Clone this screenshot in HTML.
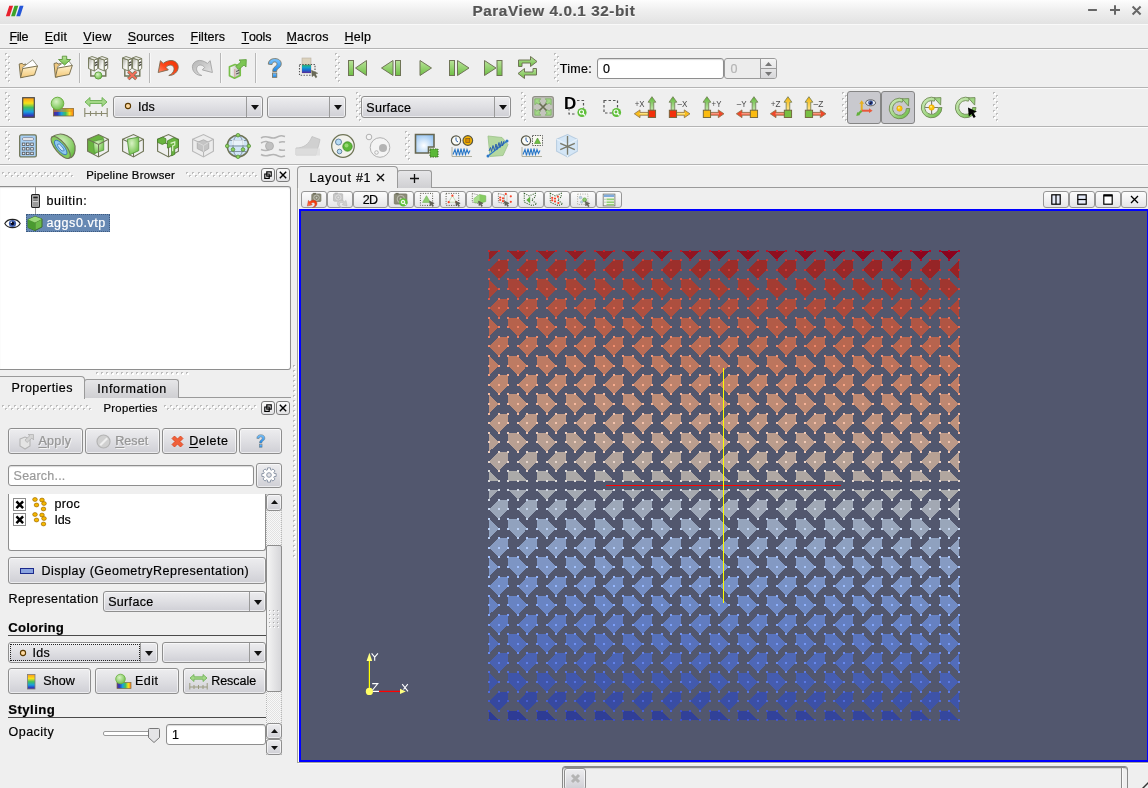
<!DOCTYPE html>
<html><head><meta charset="utf-8"><title>ParaView 4.0.1 32-bit</title>
<style>
html,body{margin:0;padding:0;overflow:hidden}
html{width:1148px;height:788px}
body{width:1148px;height:788px;overflow:hidden;background:#efefef;position:relative;font-family:"Liberation Sans",sans-serif;font-size:12.5px;color:#1a1a1a}
.t{position:absolute;white-space:nowrap;line-height:1.149;-webkit-text-stroke:.2px}
#root{position:absolute;left:0;top:0;width:1148px;height:788px;overflow:hidden;will-change:transform}
.b{position:absolute;overflow:visible}
u{text-decoration:underline;text-underline-offset:1.5px;text-decoration-thickness:1px}
</style></head><body>
<div id="root">
<svg class="b" width="0" height="0" style="left:0;top:0"><defs><pattern id="hp6" width="6" height="6" patternUnits="userSpaceOnUse"><rect width="2" height="2" fill="#bdbdbd"/><rect x="1" y="1" width="2" height="2" fill="#fff"/><rect x="3" y="3" width="2" height="2" fill="#bdbdbd"/><rect x="4" y="4" width="2" height="2" fill="#fff"/></pattern><pattern id="hp5" width="5" height="5" patternUnits="userSpaceOnUse"><rect width="2" height="2" fill="#bdbdbd"/><rect x="1" y="1" width="2" height="2" fill="#fff"/></pattern></defs></svg>
<div class="b" style="left:0px;top:0px;width:1148px;height:24px;background:linear-gradient(#fdfdfd,#f0f0f0 40%,#e2e2e2)"></div>
<svg class="b" style="left:5px;top:5px" width="19" height="12" viewBox="0 0 20 12"><path d="M4.5 0.5h4l-3.6 11h-4z" fill="#e8212d"/><path d="M10 0.5h4l-3.6 11h-4z" fill="#3ba32a"/><path d="M15.5 0.5h4l-3.6 11h-4z" fill="#2456d8"/></svg>
<div class="t" style="left:472.5px;top:2.0px;font-size:15.3px;letter-spacing:0.56px;color:#555;font-weight:bold;text-shadow:0 1px 0 #fff;">ParaView 4.0.1 32-bit</div>
<svg class="b" style="left:1084px;top:3px" width="60" height="14" viewBox="0 0 60 14"><path d="M4.100 7h8.800M26 7h10M31 2.200v9.600M48.600 3.500l8 8M56.600 3.500l-8 8" stroke="#666" stroke-width="2" fill="none"/></svg>
<div class="b" style="left:0px;top:24px;width:1148px;height:1px;background:#f9f9f9"></div>
<div class="b" style="left:0px;top:48px;width:1148px;height:1px;background:#b4b4b4"></div>
<div class="t" style="left:9.6px;top:30.0px;font-size:12.5px;letter-spacing:-0.45px;color:#000;"><u style="letter-spacing:0;margin-right:-0.45px">F</u>ile</div>
<div class="t" style="left:44.8px;top:30.0px;font-size:12.5px;letter-spacing:0.22px;color:#000;"><u style="letter-spacing:0;margin-right:0.22px">E</u>dit</div>
<div class="t" style="left:83.3px;top:30.0px;font-size:12.5px;letter-spacing:0.31px;color:#000;"><u style="letter-spacing:0;margin-right:0.31px">V</u>iew</div>
<div class="t" style="left:127.7px;top:30.0px;font-size:12.5px;letter-spacing:0.11px;color:#000;"><u style="letter-spacing:0;margin-right:0.11px">S</u>ources</div>
<div class="t" style="left:190.5px;top:30.0px;font-size:12.5px;letter-spacing:0.08px;color:#000;"><u style="letter-spacing:0;margin-right:0.08px">F</u>ilters</div>
<div class="t" style="left:241.5px;top:30.0px;font-size:12.5px;letter-spacing:-0.17px;color:#000;"><u style="letter-spacing:0;margin-right:-0.17px">T</u>ools</div>
<div class="t" style="left:286.5px;top:30.0px;font-size:12.5px;letter-spacing:0.20px;color:#000;"><u style="letter-spacing:0;margin-right:0.20px">M</u>acros</div>
<div class="t" style="left:344.5px;top:30.0px;font-size:12.5px;letter-spacing:0.26px;color:#000;"><u style="letter-spacing:0;margin-right:0.26px">H</u>elp</div>
<div class="b" style="left:0px;top:87px;width:1148px;height:1px;background:#b4b4b4"></div>
<div class="b" style="left:0px;top:49px;width:1148px;height:1px;background:#fbfbfb"></div>
<div class="b" style="left:0px;top:88px;width:1148px;height:1px;background:#fbfbfb"></div>
<div class="b" style="left:0px;top:126px;width:1148px;height:1px;background:#b4b4b4"></div>
<div class="b" style="left:0px;top:127px;width:1148px;height:1px;background:#fbfbfb"></div>
<div class="b" style="left:0px;top:164px;width:1148px;height:1px;background:#b4b4b4"></div>
<div class="b" style="left:0px;top:165px;width:1148px;height:1px;background:#fbfbfb"></div>
<svg class="b" style="left:5px;top:53px" width="5" height="30" shape-rendering="crispEdges"><rect width="5" height="30" fill="url(#hp6)"/></svg>
<svg class="b" style="left:335px;top:53px" width="5" height="30" shape-rendering="crispEdges"><rect width="5" height="30" fill="url(#hp6)"/></svg>
<svg class="b" style="left:554px;top:53px" width="5" height="30" shape-rendering="crispEdges"><rect width="5" height="30" fill="url(#hp6)"/></svg>
<svg class="b" style="left:5px;top:92px" width="5" height="30" shape-rendering="crispEdges"><rect width="5" height="30" fill="url(#hp6)"/></svg>
<svg class="b" style="left:356px;top:92px" width="5" height="30" shape-rendering="crispEdges"><rect width="5" height="30" fill="url(#hp6)"/></svg>
<svg class="b" style="left:521px;top:92px" width="5" height="30" shape-rendering="crispEdges"><rect width="5" height="30" fill="url(#hp6)"/></svg>
<svg class="b" style="left:842px;top:92px" width="5" height="30" shape-rendering="crispEdges"><rect width="5" height="30" fill="url(#hp6)"/></svg>
<svg class="b" style="left:993px;top:92px" width="5" height="30" shape-rendering="crispEdges"><rect width="5" height="30" fill="url(#hp6)"/></svg>
<svg class="b" style="left:5px;top:131px" width="5" height="30" shape-rendering="crispEdges"><rect width="5" height="30" fill="url(#hp6)"/></svg>
<svg class="b" style="left:405px;top:131px" width="5" height="30" shape-rendering="crispEdges"><rect width="5" height="30" fill="url(#hp6)"/></svg>
<div class="b" style="left:79px;top:53px;width:1px;height:30px;background:#b8b8b8"></div>
<div class="b" style="left:80px;top:53px;width:1px;height:30px;background:#f8f8f8"></div>
<div class="b" style="left:149px;top:53px;width:1px;height:30px;background:#b8b8b8"></div>
<div class="b" style="left:150px;top:53px;width:1px;height:30px;background:#f8f8f8"></div>
<div class="b" style="left:220px;top:53px;width:1px;height:30px;background:#b8b8b8"></div>
<div class="b" style="left:221px;top:53px;width:1px;height:30px;background:#f8f8f8"></div>
<div class="b" style="left:255px;top:53px;width:1px;height:30px;background:#b8b8b8"></div>
<div class="b" style="left:256px;top:53px;width:1px;height:30px;background:#f8f8f8"></div>
<div class="t" style="left:559.8px;top:62.0px;font-size:12.5px;letter-spacing:0.30px;color:#000;">Time:</div>
<div class="b" style="left:597px;top:58px;width:127px;height:21px;background:#fff;border:1px solid #8e8e8e;border-radius:3px;box-shadow:inset 0 1px 1px rgba(0,0,0,.15);box-sizing:border-box;"></div>
<div class="t" style="left:603.0px;top:62.0px;font-size:12.5px;letter-spacing:0.00px;color:#000;">0</div>
<div class="b" style="left:724px;top:58px;width:53px;height:21px;background:#ececec;border:1px solid #9a9a9a;border-radius:3px;box-sizing:border-box;"></div>
<div class="t" style="left:730.5px;top:62.0px;font-size:12.5px;letter-spacing:0.00px;color:#b4b4b4;">0</div>
<div class="b" style="left:760px;top:59px;width:16px;height:19px;background:linear-gradient(#f4f4f4,#d8d8da);border-left:1px solid #9a9a9a;border-radius:0 2px 2px 0;box-sizing:border-box;"></div>
<div class="b" style="left:761px;top:68px;width:15px;height:1px;background:#9a9a9a"></div>
<svg class="b" style="left:765px;top:61.5px" width="7" height="4" viewBox="0 0 7 4"><path d="M0 4h7l-3.5-4z" fill="#777"/></svg>
<svg class="b" style="left:765px;top:71.5px" width="7" height="4" viewBox="0 0 7 4"><path d="M0 0h7l-3.5 4z" fill="#777"/></svg>
<div class="b" style="left:113px;top:96px;width:150px;height:22px;background:linear-gradient(#ededef,#dfdfe3 50%,#cfcfd5);border:1px solid #8e8e8e;border-radius:3px;box-shadow:inset 0 0 0 1px rgba(255,255,255,.6);box-sizing:border-box;"></div>
<div class="b" style="left:246px;top:97px;width:1px;height:20px;background:#9a9a9a"></div>
<svg class="b" style="left:250.5px;top:105px" width="8" height="5" viewBox="0 0 8 5"><path d="M0 0h8l-4 5z" fill="#111"/></svg>
<div class="t" style="left:138.0px;top:100.1px;font-size:12.5px;letter-spacing:0.06px;color:#000;">Ids</div>
<svg class="b" style="left:124px;top:102px" width="8" height="8" viewBox="0 0 8 8"><circle cx="4" cy="4" r="2.6" fill="#ffd9a0" stroke="#5a3a00" stroke-width="1.1"/></svg>
<div class="b" style="left:267px;top:96px;width:79px;height:22px;background:linear-gradient(#ededef,#dfdfe3 50%,#cfcfd5);border:1px solid #8e8e8e;border-radius:3px;box-shadow:inset 0 0 0 1px rgba(255,255,255,.6);box-sizing:border-box;"></div>
<div class="b" style="left:329px;top:97px;width:1px;height:20px;background:#9a9a9a"></div>
<svg class="b" style="left:333.5px;top:105px" width="8" height="5" viewBox="0 0 8 5"><path d="M0 0h8l-4 5z" fill="#111"/></svg>
<div class="b" style="left:361px;top:96px;width:150px;height:22px;background:linear-gradient(#ededef,#dfdfe3 50%,#cfcfd5);border:1px solid #8e8e8e;border-radius:3px;box-shadow:inset 0 0 0 1px rgba(255,255,255,.6);box-sizing:border-box;"></div>
<div class="b" style="left:494px;top:97px;width:1px;height:20px;background:#9a9a9a"></div>
<svg class="b" style="left:498.5px;top:105px" width="8" height="5" viewBox="0 0 8 5"><path d="M0 0h8l-4 5z" fill="#111"/></svg>
<div class="t" style="left:366.3px;top:100.6px;font-size:12.5px;letter-spacing:0.27px;color:#000;">Surface</div>
<div class="b" style="left:847px;top:91px;width:34px;height:33px;background:#c9c9ce;border:1px solid #858585;border-radius:3px;box-sizing:border-box;"></div>
<div class="b" style="left:881px;top:91px;width:34px;height:33px;background:#c9c9ce;border:1px solid #858585;border-radius:3px;box-sizing:border-box;"></div>
<div class="t" style="left:86.2px;top:169.3px;font-size:11.3px;letter-spacing:0.26px;color:#000;">Pipeline Browser</div>
<svg class="b" style="left:2px;top:172px" width="72" height="5" shape-rendering="crispEdges"><rect width="72" height="5" fill="url(#hp6)"/></svg>
<svg class="b" style="left:186px;top:172px" width="72" height="5" shape-rendering="crispEdges"><rect width="72" height="5" fill="url(#hp6)"/></svg>
<div class="b" style="left:261px;top:168px;width:14px;height:14px;background:linear-gradient(#fbfbfb,#e2e2e4);border:1px solid #7c7c7c;border-radius:3px;box-sizing:border-box;"></div>
<div class="b" style="left:276px;top:168px;width:14px;height:14px;background:linear-gradient(#fbfbfb,#e2e2e4);border:1px solid #7c7c7c;border-radius:3px;box-sizing:border-box;"></div>
<svg class="b" style="left:264px;top:171px" width="8" height="8" viewBox="0 0 8 8"><path d="M2.8 .8h4.4v4.4h-4.4zM.8 3h4.4v4.4h-4.4z" fill="#fff" stroke="#000" stroke-width="1.2"/></svg>
<svg class="b" style="left:279px;top:171px" width="8" height="8" viewBox="0 0 8 8"><path d="M.8 .8l6.4 6.4M7.2 .8l-6.4 6.4" stroke="#000" stroke-width="1.4"/></svg>
<div class="b" style="left:0px;top:186px;width:291px;height:184px;background:#fff;border:1px solid #8e8e8e;border-left:none;border-radius:0 3px 3px 0;box-sizing:border-box;box-shadow:inset 0 1px 1px rgba(0,0,0,.12);"></div>
<div class="b" style="left:35px;top:187px;width:1px;height:7px;background:#9c9c9c"></div>
<div class="b" style="left:35px;top:207px;width:1px;height:7px;background:#9c9c9c"></div>
<div class="t" style="left:46.5px;top:194.0px;font-size:12.5px;letter-spacing:0.58px;color:#000;">builtin:</div>
<div class="b" style="left:26px;top:214px;width:84px;height:18px;background:#6688b3;border:1px dotted #3d5a80;box-sizing:border-box;"></div>
<div class="t" style="left:46.5px;top:215.9px;font-size:12.5px;letter-spacing:0.57px;color:#fff;">aggs0.vtp</div>
<svg class="b" style="left:96px;top:372px" width="93" height="3" shape-rendering="crispEdges"><rect width="93" height="3" fill="url(#hp5)"/></svg>
<svg class="b" style="left:293px;top:365px" width="3" height="193" shape-rendering="crispEdges"><rect width="3" height="193" fill="url(#hp5)"/></svg>
<div class="b" style="left:297px;top:170px;width:1px;height:593px;background:#a5a5a0"></div>
<div class="b" style="left:298px;top:188px;width:1px;height:575px;background:#fafafa"></div>
<div class="b" style="left:84px;top:397px;width:207px;height:1px;background:#9a9a9a"></div>
<div class="b" style="left:0px;top:376px;width:85px;height:23px;background:#efefef;border:1px solid #9a9a9a;border-left:none;border-bottom:none;border-radius:0 4px 0 0;box-sizing:border-box;"></div>
<div class="t" style="left:11.5px;top:381.1px;font-size:12.5px;letter-spacing:0.44px;color:#000;">Properties</div>
<div class="b" style="left:84px;top:379px;width:95px;height:19px;background:linear-gradient(#e6e6e8,#cfcfd2);border:1px solid #9a9a9a;border-bottom:none;border-radius:3px 3px 0 0;box-sizing:border-box;"></div>
<div class="t" style="left:97.2px;top:381.8px;font-size:12.5px;letter-spacing:0.65px;color:#000;">Information</div>
<div class="t" style="left:103.5px;top:401.8px;font-size:11.3px;letter-spacing:0.28px;color:#000;">Properties</div>
<svg class="b" style="left:2px;top:405px" width="90" height="5" shape-rendering="crispEdges"><rect width="90" height="5" fill="url(#hp6)"/></svg>
<svg class="b" style="left:164px;top:405px" width="93" height="5" shape-rendering="crispEdges"><rect width="93" height="5" fill="url(#hp6)"/></svg>
<div class="b" style="left:261px;top:401px;width:14px;height:14px;background:linear-gradient(#fbfbfb,#e2e2e4);border:1px solid #7c7c7c;border-radius:3px;box-sizing:border-box;"></div>
<div class="b" style="left:276px;top:401px;width:14px;height:14px;background:linear-gradient(#fbfbfb,#e2e2e4);border:1px solid #7c7c7c;border-radius:3px;box-sizing:border-box;"></div>
<svg class="b" style="left:264px;top:404px" width="8" height="8" viewBox="0 0 8 8"><path d="M2.8 .8h4.4v4.4h-4.4zM.8 3h4.4v4.4h-4.4z" fill="#fff" stroke="#000" stroke-width="1.2"/></svg>
<svg class="b" style="left:279px;top:404px" width="8" height="8" viewBox="0 0 8 8"><path d="M.8 .8l6.4 6.4M7.2 .8l-6.4 6.4" stroke="#000" stroke-width="1.4"/></svg>
<div class="b" style="left:8px;top:428px;width:75px;height:26px;background:linear-gradient(#ededef,#dfdfe3 50%,#cfcfd5);border:1px solid #8e8e8e;border-radius:3px;box-shadow:inset 0 0 0 1px rgba(255,255,255,.6);box-sizing:border-box;"></div>
<div class="b" style="left:85px;top:428px;width:75px;height:26px;background:linear-gradient(#ededef,#dfdfe3 50%,#cfcfd5);border:1px solid #8e8e8e;border-radius:3px;box-shadow:inset 0 0 0 1px rgba(255,255,255,.6);box-sizing:border-box;"></div>
<div class="b" style="left:162px;top:428px;width:75px;height:26px;background:linear-gradient(#ededef,#dfdfe3 50%,#cfcfd5);border:1px solid #8e8e8e;border-radius:3px;box-shadow:inset 0 0 0 1px rgba(255,255,255,.6);box-sizing:border-box;"></div>
<div class="b" style="left:239px;top:428px;width:43px;height:26px;background:linear-gradient(#ededef,#dfdfe3 50%,#cfcfd5);border:1px solid #8e8e8e;border-radius:3px;box-shadow:inset 0 0 0 1px rgba(255,255,255,.6);box-sizing:border-box;"></div>
<div class="t" style="left:38.4px;top:434.1px;font-size:12.5px;letter-spacing:0.33px;color:#969696;text-shadow:1px 1px 0 #f4f4f4;"><u style="letter-spacing:0;margin-right:0.33px">A</u>pply</div>
<div class="t" style="left:115.2px;top:434.1px;font-size:12.5px;letter-spacing:0.09px;color:#969696;text-shadow:1px 1px 0 #f4f4f4;"><u style="letter-spacing:0;margin-right:0.09px">R</u>eset</div>
<div class="t" style="left:189.2px;top:434.1px;font-size:12.5px;letter-spacing:0.51px;color:#000;"><u style="letter-spacing:0;margin-right:0.51px">D</u>elete</div>
<div class="b" style="left:8px;top:465px;width:246px;height:21px;background:#fff;border:1px solid #8e8e8e;border-radius:3px;box-shadow:inset 0 1px 1px rgba(0,0,0,.15);box-sizing:border-box;"></div>
<div class="t" style="left:13.6px;top:469.2px;font-size:12.5px;letter-spacing:0.21px;color:#9a9a9a;">Search...</div>
<div class="b" style="left:256px;top:463px;width:26px;height:25px;background:linear-gradient(#ededef,#dfdfe3 50%,#cfcfd5);border:1px solid #8e8e8e;border-radius:3px;box-shadow:inset 0 0 0 1px rgba(255,255,255,.6);box-sizing:border-box;"></div>
<div class="b" style="left:8px;top:494px;width:258px;height:57px;background:#fff;border:1px solid #8e8e8e;border-top:none;border-radius:0 0 3px 3px;box-sizing:border-box;"></div>
<div class="b" style="left:13px;top:498px;width:13px;height:13px;background:#fff;border:1px solid #8c8c8c;box-sizing:border-box;"></div>
<svg class="b" style="left:14.5px;top:499.5px" width="9.5" height="9.5" viewBox="0 0 10 10"><path d="M1.5 1.5l7 7M8.5 1.5l-7 7" stroke="#000" stroke-width="2.6"/></svg>
<svg class="b" style="left:32px;top:496.5px" width="16" height="15" viewBox="0 0 16 15"><ellipse cx="3" cy="2.5" rx="2.3" ry="1.9" fill="#f5b800" stroke="#a06a00" stroke-width=".7"/><ellipse cx="10" cy="3" rx="2.3" ry="1.9" fill="#f5b800" stroke="#a06a00" stroke-width=".7"/><ellipse cx="4.5" cy="8" rx="2.3" ry="1.9" fill="#f5b800" stroke="#a06a00" stroke-width=".7"/><ellipse cx="12" cy="6.5" rx="2.3" ry="1.9" fill="#f5b800" stroke="#a06a00" stroke-width=".7"/><ellipse cx="11.5" cy="12" rx="2.3" ry="1.9" fill="#f5b800" stroke="#a06a00" stroke-width=".7"/></svg>
<div class="b" style="left:13px;top:513px;width:13px;height:13px;background:#fff;border:1px solid #8c8c8c;box-sizing:border-box;"></div>
<svg class="b" style="left:14.5px;top:514.5px" width="9.5" height="9.5" viewBox="0 0 10 10"><path d="M1.5 1.5l7 7M8.5 1.5l-7 7" stroke="#000" stroke-width="2.6"/></svg>
<svg class="b" style="left:32px;top:511.5px" width="16" height="15" viewBox="0 0 16 15"><ellipse cx="3" cy="2.5" rx="2.3" ry="1.9" fill="#f5b800" stroke="#a06a00" stroke-width=".7"/><ellipse cx="10" cy="3" rx="2.3" ry="1.9" fill="#f5b800" stroke="#a06a00" stroke-width=".7"/><ellipse cx="4.5" cy="8" rx="2.3" ry="1.9" fill="#f5b800" stroke="#a06a00" stroke-width=".7"/><ellipse cx="12" cy="6.5" rx="2.3" ry="1.9" fill="#f5b800" stroke="#a06a00" stroke-width=".7"/><ellipse cx="11.5" cy="12" rx="2.3" ry="1.9" fill="#f5b800" stroke="#a06a00" stroke-width=".7"/></svg>
<div class="t" style="left:54.4px;top:497.4px;font-size:12.5px;letter-spacing:0.33px;color:#000;">proc</div>
<div class="t" style="left:54.4px;top:513.1px;font-size:12.5px;letter-spacing:-0.14px;color:#000;">Ids</div>
<div class="b" style="left:266px;top:494px;width:16px;height:261px;background:#e6e6e6;background-image:repeating-conic-gradient(#e2e2e2 0 25%,#f8f8f8 0 50%);background-size:2px 2px;border-left:1px dotted #b8b8b8;border-right:1px dotted #b8b8b8;box-sizing:border-box;"></div>
<div class="b" style="left:266px;top:494px;width:16px;height:17px;background:linear-gradient(#ededef,#dfdfe3 50%,#cfcfd5);border:1px solid #8e8e8e;border-radius:3px;box-shadow:inset 0 0 0 1px rgba(255,255,255,.6);box-sizing:border-box;"></div>
<svg class="b" style="left:270.5px;top:500px" width="7" height="4" viewBox="0 0 7 4"><path d="M0 4h7l-3.5-4z" fill="#111"/></svg>
<div class="b" style="left:266px;top:545px;width:16px;height:147px;background:linear-gradient(90deg,#f4f4f4,#d6d6d9);border:1px solid #8e8e8e;border-radius:2px;box-sizing:border-box;"></div>
<svg class="b" style="left:269px;top:610px" width="11" height="19" shape-rendering="crispEdges"><rect x="0" y="0" width="1" height="1" fill="#a8a8a8"/><rect x="1" y="1" width="1" height="1" fill="#fff"/><rect x="0" y="4" width="1" height="1" fill="#a8a8a8"/><rect x="1" y="5" width="1" height="1" fill="#fff"/><rect x="0" y="8" width="1" height="1" fill="#a8a8a8"/><rect x="1" y="9" width="1" height="1" fill="#fff"/><rect x="0" y="12" width="1" height="1" fill="#a8a8a8"/><rect x="1" y="13" width="1" height="1" fill="#fff"/><rect x="0" y="16" width="1" height="1" fill="#a8a8a8"/><rect x="1" y="17" width="1" height="1" fill="#fff"/><rect x="4" y="0" width="1" height="1" fill="#a8a8a8"/><rect x="5" y="1" width="1" height="1" fill="#fff"/><rect x="4" y="4" width="1" height="1" fill="#a8a8a8"/><rect x="5" y="5" width="1" height="1" fill="#fff"/><rect x="4" y="8" width="1" height="1" fill="#a8a8a8"/><rect x="5" y="9" width="1" height="1" fill="#fff"/><rect x="4" y="12" width="1" height="1" fill="#a8a8a8"/><rect x="5" y="13" width="1" height="1" fill="#fff"/><rect x="4" y="16" width="1" height="1" fill="#a8a8a8"/><rect x="5" y="17" width="1" height="1" fill="#fff"/><rect x="8" y="0" width="1" height="1" fill="#a8a8a8"/><rect x="9" y="1" width="1" height="1" fill="#fff"/><rect x="8" y="4" width="1" height="1" fill="#a8a8a8"/><rect x="9" y="5" width="1" height="1" fill="#fff"/><rect x="8" y="8" width="1" height="1" fill="#a8a8a8"/><rect x="9" y="9" width="1" height="1" fill="#fff"/><rect x="8" y="12" width="1" height="1" fill="#a8a8a8"/><rect x="9" y="13" width="1" height="1" fill="#fff"/><rect x="8" y="16" width="1" height="1" fill="#a8a8a8"/><rect x="9" y="17" width="1" height="1" fill="#fff"/></svg>
<div class="b" style="left:266px;top:723px;width:16px;height:16px;background:linear-gradient(#ededef,#dfdfe3 50%,#cfcfd5);border:1px solid #8e8e8e;border-radius:3px;box-shadow:inset 0 0 0 1px rgba(255,255,255,.6);box-sizing:border-box;"></div>
<svg class="b" style="left:270.5px;top:729px" width="7" height="4" viewBox="0 0 7 4"><path d="M0 4h7l-3.5-4z" fill="#111"/></svg>
<div class="b" style="left:266px;top:739px;width:16px;height:16px;background:linear-gradient(#ededef,#dfdfe3 50%,#cfcfd5);border:1px solid #8e8e8e;border-radius:3px;box-shadow:inset 0 0 0 1px rgba(255,255,255,.6);box-sizing:border-box;"></div>
<svg class="b" style="left:270.5px;top:745.5px" width="7" height="4" viewBox="0 0 7 4"><path d="M0 0h7l-3.5 4z" fill="#111"/></svg>
<div class="b" style="left:8px;top:557px;width:258px;height:27px;background:linear-gradient(#ededef,#dfdfe3 50%,#cfcfd5);border:1px solid #8e8e8e;border-radius:3px;box-shadow:inset 0 0 0 1px rgba(255,255,255,.6);box-sizing:border-box;"></div>
<div class="b" style="left:20px;top:568px;width:13.5px;height:5.5px;background:#8aa4e0;border:1px solid #1c2a8c;box-sizing:border-box;"></div>
<div class="t" style="left:41.4px;top:564.4px;font-size:12.5px;letter-spacing:0.48px;color:#000;">Display (GeometryRepresentation)</div>
<div class="t" style="left:8.5px;top:592.3px;font-size:12.5px;letter-spacing:0.38px;color:#000;">Representation</div>
<div class="b" style="left:103px;top:591px;width:163px;height:21px;background:linear-gradient(#ededef,#dfdfe3 50%,#cfcfd5);border:1px solid #8e8e8e;border-radius:3px;box-shadow:inset 0 0 0 1px rgba(255,255,255,.6);box-sizing:border-box;"></div>
<div class="b" style="left:249px;top:592px;width:1px;height:19px;background:#9a9a9a"></div>
<svg class="b" style="left:253.5px;top:599.5px" width="8" height="5" viewBox="0 0 8 5"><path d="M0 0h8l-4 5z" fill="#111"/></svg>
<div class="t" style="left:108.2px;top:595.3px;font-size:12.5px;letter-spacing:0.32px;color:#000;">Surface</div>
<div class="t" style="left:8.3px;top:620.0px;font-size:13.2px;letter-spacing:0.18px;color:#000;font-weight:bold;">Coloring</div>
<div class="b" style="left:8px;top:635px;width:258px;height:1px;background:#4a4a4a"></div>
<div class="b" style="left:8px;top:642px;width:150px;height:21px;background:linear-gradient(#ededef,#dfdfe3 50%,#cfcfd5);border:1px solid #8e8e8e;border-radius:3px;box-shadow:inset 0 0 0 1px rgba(255,255,255,.6);box-sizing:border-box;"></div>
<div class="b" style="left:140px;top:643px;width:1px;height:19px;background:#9a9a9a"></div>
<svg class="b" style="left:145px;top:650.5px" width="8" height="5" viewBox="0 0 8 5"><path d="M0 0h8l-4 5z" fill="#111"/></svg>
<div class="b" style="left:10px;top:644px;width:130px;height:17px;border:1px dotted #222;box-sizing:border-box;"></div>
<svg class="b" style="left:18.5px;top:649px" width="8" height="8" viewBox="0 0 8 8"><circle cx="4" cy="4" r="2.6" fill="#ffd9a0" stroke="#5a3a00" stroke-width="1.1"/></svg>
<div class="t" style="left:32.6px;top:646.0px;font-size:12.5px;letter-spacing:0.26px;color:#000;">Ids</div>
<div class="b" style="left:162px;top:642px;width:104px;height:21px;background:linear-gradient(#ededef,#dfdfe3 50%,#cfcfd5);border:1px solid #8e8e8e;border-radius:3px;box-shadow:inset 0 0 0 1px rgba(255,255,255,.6);box-sizing:border-box;"></div>
<div class="b" style="left:249px;top:643px;width:1px;height:19px;background:#9a9a9a"></div>
<svg class="b" style="left:253.5px;top:650.5px" width="8" height="5" viewBox="0 0 8 5"><path d="M0 0h8l-4 5z" fill="#111"/></svg>
<div class="b" style="left:8px;top:668px;width:83px;height:26px;background:linear-gradient(#ededef,#dfdfe3 50%,#cfcfd5);border:1px solid #8e8e8e;border-radius:3px;box-shadow:inset 0 0 0 1px rgba(255,255,255,.6);box-sizing:border-box;"></div>
<div class="b" style="left:95px;top:668px;width:84px;height:26px;background:linear-gradient(#ededef,#dfdfe3 50%,#cfcfd5);border:1px solid #8e8e8e;border-radius:3px;box-shadow:inset 0 0 0 1px rgba(255,255,255,.6);box-sizing:border-box;"></div>
<div class="b" style="left:183px;top:668px;width:83px;height:26px;background:linear-gradient(#ededef,#dfdfe3 50%,#cfcfd5);border:1px solid #8e8e8e;border-radius:3px;box-shadow:inset 0 0 0 1px rgba(255,255,255,.6);box-sizing:border-box;"></div>
<div class="t" style="left:43.2px;top:674.4px;font-size:12.5px;letter-spacing:0.14px;color:#000;">Show</div>
<div class="t" style="left:135.0px;top:674.4px;font-size:12.5px;letter-spacing:0.49px;color:#000;">Edit</div>
<div class="t" style="left:211.2px;top:674.4px;font-size:12.5px;letter-spacing:-0.03px;color:#000;">Rescale</div>
<div class="t" style="left:8.3px;top:701.8px;font-size:13.2px;letter-spacing:0.42px;color:#000;font-weight:bold;">Styling</div>
<div class="b" style="left:8px;top:717px;width:258px;height:1px;background:#4a4a4a"></div>
<div class="t" style="left:8.5px;top:724.6px;font-size:12.5px;letter-spacing:0.49px;color:#000;">Opacity</div>
<div class="b" style="left:103px;top:731px;width:49px;height:5px;background:#fff;border:1px solid #9a9a9a;border-radius:2px;box-sizing:border-box;"></div>
<svg class="b" style="left:148px;top:727.5px" width="12" height="15" viewBox="0 0 12 15"><path d="M1.5 .5h9a1 1 0 0 1 1 1v8l-5.5 5-5.5-5v-8a1 1 0 0 1 1-1z" fill="#e4e4e6" stroke="#777"/></svg>
<div class="b" style="left:166px;top:724px;width:100px;height:21px;background:#fff;border:1px solid #8e8e8e;border-radius:3px;box-shadow:inset 0 1px 1px rgba(0,0,0,.15);box-sizing:border-box;"></div>
<div class="t" style="left:172.0px;top:728.2px;font-size:12.5px;letter-spacing:0.00px;color:#000;">1</div>
<div class="b" style="left:398px;top:187px;width:750px;height:1px;background:#9a9a9a"></div>
<div class="b" style="left:297px;top:166px;width:101px;height:22px;background:#efefef;border:1px solid #9a9a9a;border-bottom:none;border-radius:4px 4px 0 0;box-sizing:border-box;"></div>
<div class="t" style="left:309.5px;top:171.1px;font-size:12.5px;letter-spacing:0.77px;color:#000;">Layout #1</div>
<svg class="b" style="left:375.5px;top:173px" width="9" height="9" viewBox="0 0 9 9"><path d="M1 1l7 7M8 1l-7 7" stroke="#111" stroke-width="1.4"/></svg>
<div class="b" style="left:397px;top:170px;width:35px;height:18px;background:linear-gradient(#e6e6e8,#cfcfd2);border:1px solid #9a9a9a;border-bottom:none;border-radius:3px 3px 0 0;box-sizing:border-box;"></div>
<svg class="b" style="left:410px;top:174px" width="9" height="9" viewBox="0 0 9 9"><path d="M4.5 0v9M0 4.5h9" stroke="#111" stroke-width="1.3"/></svg>
<div class="b" style="left:301px;top:191px;width:26px;height:17px;background:linear-gradient(#fcfcfc,#f1f1f2 50%,#e4e4e6);border:1px solid #969696;border-radius:3px;box-sizing:border-box;"></div>
<div class="b" style="left:327px;top:191px;width:26px;height:17px;background:linear-gradient(#fcfcfc,#f1f1f2 50%,#e4e4e6);border:1px solid #969696;border-radius:3px;box-sizing:border-box;"></div>
<div class="b" style="left:353px;top:191px;width:35px;height:17px;background:linear-gradient(#fcfcfc,#f1f1f2 50%,#e4e4e6);border:1px solid #969696;border-radius:3px;box-sizing:border-box;"></div>
<div class="b" style="left:388px;top:191px;width:26px;height:17px;background:linear-gradient(#fcfcfc,#f1f1f2 50%,#e4e4e6);border:1px solid #969696;border-radius:3px;box-sizing:border-box;"></div>
<div class="b" style="left:414px;top:191px;width:26px;height:17px;background:linear-gradient(#fcfcfc,#f1f1f2 50%,#e4e4e6);border:1px solid #969696;border-radius:3px;box-sizing:border-box;"></div>
<div class="b" style="left:440px;top:191px;width:26px;height:17px;background:linear-gradient(#fcfcfc,#f1f1f2 50%,#e4e4e6);border:1px solid #969696;border-radius:3px;box-sizing:border-box;"></div>
<div class="b" style="left:466px;top:191px;width:26px;height:17px;background:linear-gradient(#fcfcfc,#f1f1f2 50%,#e4e4e6);border:1px solid #969696;border-radius:3px;box-sizing:border-box;"></div>
<div class="b" style="left:492px;top:191px;width:26px;height:17px;background:linear-gradient(#fcfcfc,#f1f1f2 50%,#e4e4e6);border:1px solid #969696;border-radius:3px;box-sizing:border-box;"></div>
<div class="b" style="left:518px;top:191px;width:26px;height:17px;background:linear-gradient(#fcfcfc,#f1f1f2 50%,#e4e4e6);border:1px solid #969696;border-radius:3px;box-sizing:border-box;"></div>
<div class="b" style="left:544px;top:191px;width:26px;height:17px;background:linear-gradient(#fcfcfc,#f1f1f2 50%,#e4e4e6);border:1px solid #969696;border-radius:3px;box-sizing:border-box;"></div>
<div class="b" style="left:570px;top:191px;width:26px;height:17px;background:linear-gradient(#fcfcfc,#f1f1f2 50%,#e4e4e6);border:1px solid #969696;border-radius:3px;box-sizing:border-box;"></div>
<div class="b" style="left:596px;top:191px;width:26px;height:17px;background:linear-gradient(#fcfcfc,#f1f1f2 50%,#e4e4e6);border:1px solid #969696;border-radius:3px;box-sizing:border-box;"></div>
<div class="t" style="left:362.7px;top:192.7px;font-size:12.5px;letter-spacing:-0.68px;color:#000;">2D</div>
<div class="b" style="left:1043px;top:191px;width:26px;height:17px;background:linear-gradient(#fcfcfc,#f1f1f2 50%,#e4e4e6);border:1px solid #969696;border-radius:3px;box-sizing:border-box;"></div>
<div class="b" style="left:1069px;top:191px;width:26px;height:17px;background:linear-gradient(#fcfcfc,#f1f1f2 50%,#e4e4e6);border:1px solid #969696;border-radius:3px;box-sizing:border-box;"></div>
<div class="b" style="left:1095px;top:191px;width:26px;height:17px;background:linear-gradient(#fcfcfc,#f1f1f2 50%,#e4e4e6);border:1px solid #969696;border-radius:3px;box-sizing:border-box;"></div>
<div class="b" style="left:1121px;top:191px;width:26px;height:17px;background:linear-gradient(#fcfcfc,#f1f1f2 50%,#e4e4e6);border:1px solid #969696;border-radius:3px;box-sizing:border-box;"></div>
<div class="b" style="left:298px;top:762px;width:850px;height:1px;background:#a5a5a0"></div>
<div class="b" style="left:298px;top:763px;width:850px;height:1px;background:#fafafa"></div>
<div class="b" style="left:562px;top:766px;width:566px;height:26px;border:1px solid #8a8a8a;border-radius:3px;box-sizing:border-box;box-shadow:inset 0 1px 0 #8a8a8a,inset 0 2px 0 #d8d8d8;"></div>
<div class="b" style="left:564px;top:768px;width:22px;height:22px;background:linear-gradient(#ededef,#dfdfe3 50%,#cfcfd5);border:1px solid #8e8e8e;border-radius:3px;box-shadow:inset 0 0 0 1px rgba(255,255,255,.6);box-sizing:border-box;"></div>
<svg class="b" style="left:569.5px;top:772.5px" width="11" height="11" viewBox="0 0 11 11"><path d="M2 2l7 7M9 2l-7 7" stroke="#b4b4b4" stroke-width="3"/></svg>
<div class="b" style="left:1121px;top:768px;width:1px;height:20px;background:#8a8a8a"></div>
<div class="b" style="left:1122px;top:768px;width:1px;height:20px;background:#fafafa"></div>
<svg class="b" style="left:1136px;top:774px" width="12" height="14" viewBox="0 0 12 14"><path d="M6.500 14.500l6-6" stroke="#333" stroke-width="1.400"/></svg>
<svg class="b" style="left:17px;top:57px" width="22" height="22" viewBox="0 0 22 22"><defs><linearGradient id="gg" x1="0" y1="0" x2="0" y2="1"><stop offset="0" stop-color="#b9e39a"/><stop offset="1" stop-color="#6fbf45"/></linearGradient><linearGradient id="gf" x1="0" y1="0" x2="0" y2="1"><stop offset="0" stop-color="#fff3cf"/><stop offset="1" stop-color="#f3c878"/></linearGradient><linearGradient id="gs" x1="0" y1="0" x2="1" y2="0"><stop offset="0" stop-color="#fafafa"/><stop offset="1" stop-color="#b8b8b0"/></linearGradient><linearGradient id="gr" x1="0" y1="0" x2="0" y2="1"><stop offset="0" stop-color="#ff9a1a"/><stop offset=".28" stop-color="#f6e21a"/><stop offset=".5" stop-color="#3fc060"/><stop offset=".72" stop-color="#1aa0e0"/><stop offset=".9" stop-color="#2a3fc0"/><stop offset="1" stop-color="#5a2a90"/></linearGradient><linearGradient id="grh" x1="0" y1="0" x2="1" y2="0"><stop offset="0" stop-color="#5a2a90"/><stop offset=".2" stop-color="#2a3fc0"/><stop offset=".4" stop-color="#1aa0e0"/><stop offset=".6" stop-color="#3fc060"/><stop offset=".8" stop-color="#f6e21a"/><stop offset="1" stop-color="#ff7a1a"/></linearGradient><radialGradient id="gball" cx=".4" cy=".35" r=".7"><stop offset="0" stop-color="#d8f2c4"/><stop offset="1" stop-color="#6cbf45"/></radialGradient><linearGradient id="gb" x1="0" y1="0" x2="0" y2="1"><stop offset="0" stop-color="#7cc4ff"/><stop offset="1" stop-color="#1c86e8"/></linearGradient><linearGradient id="gred" x1="0" y1="0" x2="0" y2="1"><stop offset="0" stop-color="#ff8a5a"/><stop offset="1" stop-color="#e02a10"/></linearGradient><linearGradient id="ggray" x1="0" y1="0" x2="0" y2="1"><stop offset="0" stop-color="#dcdcdc"/><stop offset="1" stop-color="#a8a8a8"/></linearGradient><linearGradient id="gring" x1="0" y1="0" x2="1" y2="1"><stop offset="0" stop-color="#d4edc0"/><stop offset=".5" stop-color="#a6d98a"/><stop offset="1" stop-color="#62b838"/></linearGradient><linearGradient id="ag" x1="0" y1="0" x2="0" y2="1"><stop offset="0" stop-color="#5cb634"/><stop offset="1" stop-color="#c4e8ae"/></linearGradient><linearGradient id="ay" x1="0" y1="0" x2="0" y2="1"><stop offset="0" stop-color="#f2b200"/><stop offset="1" stop-color="#ffe890"/></linearGradient><linearGradient id="gtw" x1="0" y1="0" x2="1" y2="1"><stop offset="0" stop-color="#a2a296"/><stop offset=".55" stop-color="#f2f2ee"/><stop offset="1" stop-color="#ffffff"/></linearGradient><linearGradient id="gundo" x1="0" y1="1" x2="1" y2="0"><stop offset="0" stop-color="#ffa58a"/><stop offset=".45" stop-color="#ff4a1c"/><stop offset="1" stop-color="#f03000"/></linearGradient><linearGradient id="gredo" x1="0" y1="1" x2="1" y2="0"><stop offset="0" stop-color="#e8e8e8"/><stop offset="1" stop-color="#b4b4b4"/></linearGradient></defs><polygon points="2.2,7 5.2,6.3 6.2,7.6 9,7 6,20.3 3.6,20.7" fill="#f0c880" stroke="#7d7250" stroke-width="1" stroke-linejoin="round"/><polygon points="5.3,10.7 15.7,2.8 20.5,9 8,14.5" fill="#fff" stroke="#8a8a78" stroke-width=".9" stroke-linejoin="round"/><polygon points="5.7,11.6 20.5,9 17.5,18 3.6,20.7" fill="url(#gf)" stroke="#7d7250" stroke-width="1" stroke-linejoin="round"/></svg>
<svg class="b" style="left:51px;top:55px" width="24" height="24" viewBox="0 0 24 24"><polygon points="3,8.5 6,7.8 7,9.1 9.8,8.5 6.8,21.8 4.4,22.2" fill="#f0c880" stroke="#7d7250" stroke-width="1" stroke-linejoin="round"/><polygon points="6.1,12.2 16.5,4.3 21.3,10.5 8.8,16" fill="#fff" stroke="#8a8a78" stroke-width=".9" stroke-linejoin="round"/><polygon points="6.5,13.1 21.3,10.5 18.3,19.5 4.4,22.2" fill="url(#gf)" stroke="#7d7250" stroke-width="1" stroke-linejoin="round"/><path d="M11.300 1.200h4.400v3.300h4l-6.100 5.600-6.100-5.600h3.800z" fill="url(#gg)" stroke="#4d8a2a" stroke-width=".8" stroke-linejoin="round"/></svg>
<svg class="b" style="left:88px;top:56px" width="21" height="25" viewBox="0 0 21 25"><path d="M2.800 13.500V20H17.800V13.500" fill="none" stroke="#6f7456" stroke-width="1.400"/><polygon points="0.5,2 6.3,4 6.3,15 0.5,12.500" fill="url(#gtw)" stroke="#6f7456" stroke-width=".9" stroke-linejoin="round"/><polygon points="6.3,4 9.7,2.500 9.7,12.500 6.3,15" fill="#fbfbf8" stroke="#6f7456" stroke-width=".9" stroke-linejoin="round"/><polygon points="0.5,2 4,.5 9.7,2.500 6.3,4" fill="#e9e9e2" stroke="#6f7456" stroke-width=".9" stroke-linejoin="round"/><path d="M6.8 7.200l2.600-1.300M6.8 9.700l2.600-1.300" stroke="#4a4a42" stroke-width="1.300"/><polygon points="10.5,2 16.3,4 16.3,15 10.5,12.500" fill="url(#gtw)" stroke="#6f7456" stroke-width=".9" stroke-linejoin="round"/><polygon points="16.3,4 19.7,2.500 19.7,12.500 16.3,15" fill="#fbfbf8" stroke="#6f7456" stroke-width=".9" stroke-linejoin="round"/><polygon points="10.5,2 14,.5 19.7,2.500 16.3,4" fill="#e9e9e2" stroke="#6f7456" stroke-width=".9" stroke-linejoin="round"/><path d="M16.8 7.200l2.600-1.300M16.8 9.700l2.600-1.300" stroke="#4a4a42" stroke-width="1.300"/><circle cx="10.300" cy="19.500" r="3.600" fill="url(#gball)" stroke="#5a9a3a" stroke-width=".9"/></svg>
<svg class="b" style="left:122px;top:56px" width="21" height="25" viewBox="0 0 21 25"><path d="M2.800 13.500V20H17.800V13.500" fill="none" stroke="#6f7456" stroke-width="1.400"/><polygon points="0.5,2 6.3,4 6.3,15 0.5,12.500" fill="url(#gtw)" stroke="#6f7456" stroke-width=".9" stroke-linejoin="round"/><polygon points="6.3,4 9.7,2.500 9.7,12.500 6.3,15" fill="#fbfbf8" stroke="#6f7456" stroke-width=".9" stroke-linejoin="round"/><polygon points="0.5,2 4,.5 9.7,2.500 6.3,4" fill="#e9e9e2" stroke="#6f7456" stroke-width=".9" stroke-linejoin="round"/><path d="M6.8 7.200l2.600-1.300M6.8 9.700l2.600-1.300" stroke="#4a4a42" stroke-width="1.300"/><polygon points="10.5,2 16.3,4 16.3,15 10.5,12.500" fill="url(#gtw)" stroke="#6f7456" stroke-width=".9" stroke-linejoin="round"/><polygon points="16.3,4 19.7,2.500 19.7,12.500 16.3,15" fill="#fbfbf8" stroke="#6f7456" stroke-width=".9" stroke-linejoin="round"/><polygon points="10.5,2 14,.5 19.7,2.500 16.3,4" fill="#e9e9e2" stroke="#6f7456" stroke-width=".9" stroke-linejoin="round"/><path d="M16.8 7.200l2.600-1.300M16.8 9.700l2.600-1.300" stroke="#4a4a42" stroke-width="1.300"/><path d="M6.300 15.500l8 7.500M14.300 15.500l-8 7.500" stroke="#6f7456" stroke-width="3.400"/><path d="M6.300 15.500l8 7.500M14.300 15.500l-8 7.500" stroke="#f5705a" stroke-width="2"/></svg>
<svg class="b" style="left:156px;top:57px" width="24" height="22" viewBox="0 0 24 22"><path d="M4.400 3.700L2.200 15.500L12.300 12.900L10 10.400C12 7.500 16.500 7 17.800 10.500C18.800 13.500 16.500 17 12.800 18.500C18 18.700 22.500 14.500 22.200 9.600C21.800 4 14.500 .8 7.200 6.400Z" fill="url(#gundo)" stroke="#7a6a50" stroke-width=".9" stroke-linejoin="round"/></svg>
<svg class="b" style="left:190px;top:57px" width="24" height="22" viewBox="0 0 24 22"><g transform="translate(24.600 0) scale(-1 1)"><path d="M4.400 3.700L2.200 15.500L12.300 12.900L10 10.400C12 7.500 16.500 7 17.800 10.500C18.800 13.500 16.500 17 12.800 18.500C18 18.700 22.500 14.500 22.200 9.600C21.800 4 14.500 .8 7.200 6.400Z" fill="url(#gredo)" stroke="#a4a4a4" stroke-width=".9" stroke-linejoin="round"/></g></svg>
<svg class="b" style="left:227px;top:57px" width="22" height="24" viewBox="0 0 22 24"><polygon points="2.500,9.800 8,7.500 13.200,9.300 13.200,18.500 7.500,21.200 2.500,18.700" fill="url(#gs)" stroke="#78bf4a" stroke-width="1.700" stroke-linejoin="round"/><path d="M7.800 12v8.500" stroke="#d08080" stroke-width=".7"/><path d="M9 14.500l3.500-1.300M9 17l3.500-1.300" stroke="#555" stroke-width="1"/><polygon points="8.800,9.300 14,4.800 12,3 19.300,2.600 19,10 17,8.100 11.600,12.600" fill="#7cc653" stroke="#5a9a3a" stroke-width=".8" stroke-linejoin="round"/></svg>
<svg class="b" style="left:265px;top:57px" width="19" height="22" viewBox="0 0 19 22"><g transform="translate(1.200 .3) scale(.86)"><path d="M2.500 8c0-4 3-6.500 7.500-6.500s7.500 2.500 7.500 6c0 3-2 4.500-3.500 5.500s-1.800 1.800-1.800 3.500h-4.600c0-3 1-4.300 2.600-5.500s2.300-2 2.300-3.300c0-1.400-1.100-2.300-2.700-2.300s-2.800 1-3 3z" fill="url(#gb)" stroke="#7a7460" stroke-width="1"/><rect x="7.300" y="18.300" width="5" height="5" fill="url(#gb)" stroke="#7a7460" stroke-width="1"/></g></svg>
<svg class="b" style="left:297px;top:57px" width="24" height="24" viewBox="0 0 24 24"><defs><linearGradient id="gsel" x1="0" y1="0" x2="0" y2="1"><stop offset="0" stop-color="#38a860"/><stop offset=".3" stop-color="#10a8c8"/><stop offset=".65" stop-color="#1a68d0"/><stop offset="1" stop-color="#5a2a98"/></linearGradient></defs><rect x="5" y="1" width="9" height="15" fill="#dcd2bc" stroke="#b8b0a0" stroke-width=".6"/><rect x="5" y="7.800" width="9" height="8.200" fill="url(#gsel)"/><rect x="2.500" y="7.500" width="15.500" height="10.800" fill="none" stroke="#555" stroke-dasharray="1.400 1.400" stroke-width="1.100"/><path d="M14.500 13.300l6.300 3-2.500.8 1.700 2.900-1.300.8-1.700-2.900-1.800 1.800z" fill="#6a6a58" stroke="#55553f" stroke-width=".4"/></svg>
<svg class="b" style="left:346px;top:58px" width="22" height="20" viewBox="0 0 22 20"><rect x="2.500" y="2.500" width="5" height="15" fill="url(#gg)" stroke="#6f7456" stroke-width="1"/><path d="M20.500 2.500v15l-11-7.500z" fill="url(#gg)" stroke="#6f7456" stroke-width="1"/></svg>
<svg class="b" style="left:380px;top:58px" width="22" height="20" viewBox="0 0 22 20"><path d="M13 2.500v15l-11.500-7.500z" fill="url(#gg)" stroke="#6f7456" stroke-width="1"/><rect x="15.500" y="2.500" width="5" height="15" fill="url(#gg)" stroke="#6f7456" stroke-width="1"/></svg>
<svg class="b" style="left:414px;top:58px" width="22" height="20" viewBox="0 0 22 20"><path d="M6 2.500v15l11.500-7.500z" fill="url(#gg)" stroke="#6f7456" stroke-width="1"/></svg>
<svg class="b" style="left:448px;top:58px" width="22" height="20" viewBox="0 0 22 20"><rect x="1.500" y="2.500" width="5" height="15" fill="url(#gg)" stroke="#6f7456" stroke-width="1"/><path d="M9.500 2.500v15l11.500-7.500z" fill="url(#gg)" stroke="#6f7456" stroke-width="1"/></svg>
<svg class="b" style="left:482px;top:58px" width="22" height="20" viewBox="0 0 22 20"><path d="M2.500 2.500v15l11.500-7.500z" fill="url(#gg)" stroke="#6f7456" stroke-width="1"/><rect x="15" y="2.500" width="5" height="15" fill="url(#gg)" stroke="#6f7456" stroke-width="1"/></svg>
<svg class="b" style="left:517px;top:56px" width="21" height="23" viewBox="0 0 21 23"><path d="M1.500 10.500v-6.500h12v-3.500l6.500 5-6.500 5v-3.500h-8.500v3.500z" fill="url(#gg)" stroke="#6f7456" stroke-width="1"/><path d="M19.500 12.500v6.500h-12v3.500l-6.500-5 6.500-5v3.500h8.500v-3.500z" fill="url(#gg)" stroke="#6f7456" stroke-width="1"/></svg>
<svg class="b" style="left:22px;top:96.5px" width="13" height="21" viewBox="0 0 13 21"><rect x=".7" y=".7" width="11.600" height="19.600" fill="url(#gr)" stroke="#4a4a4a" stroke-width="1.2"/></svg>
<svg class="b" style="left:50px;top:96px" width="25" height="22" viewBox="0 0 25 22"><rect x="3.500" y="12.500" width="20" height="7.500" fill="url(#grh)" stroke="#7a6a40" stroke-width=".8"/><rect x="3.500" y="12.500" width="20" height="3.500" fill="#e8901a" opacity=".55"/><circle cx="7.500" cy="7.500" r="6.300" fill="url(#gball)" stroke="#6aae40" stroke-width="1"/></svg>
<svg class="b" style="left:84px;top:97px" width="24" height="21" viewBox="0 0 24 21"><path d="M1 5l5-4.500v3h12v-3l5 4.500-5 4.500v-3h-12v3z" fill="#a3d787" stroke="#6aae50" stroke-width=".9"/><path d="M.8 11v9M23.200 11v9M.8 16.500h22.400M6.500 14v5M12 14v5M17.500 14v5" stroke="#8a8a70" stroke-width="1.100" fill="none"/></svg>
<svg class="b" style="left:532px;top:96px" width="22" height="22" viewBox="0 0 22 22"><rect x=".7" y=".7" width="20.600" height="20.600" rx="2" fill="#c4c4bd" stroke="#8f8f86" stroke-width="1.300"/><path d="M5.500 5.500l11 11M16.500 5.500l-11 11" stroke="#6a6e54" stroke-width="1.700"/><path d="M2.800 2.800h6l-2 2.200 1.500 1.500-1.800 1.800-1.500-1.500-2.200 2zM19.200 2.800v6l-2.200-2-1.500 1.500-1.800-1.800 1.500-1.500-2-2.200zM2.800 19.200v-6l2.200 2 1.500-1.500 1.800 1.800-1.500 1.500 2 2.200zM19.200 19.200h-6l2-2.200-1.500-1.500 1.800-1.800 1.500 1.500 2.200-2z" fill="#a3d787" stroke="#6aa650" stroke-width=".6"/></svg>
<svg class="b" style="left:564px;top:94px" width="24" height="24" viewBox="0 0 24 24"><text x="0" y="14.500" font-family="Liberation Sans,sans-serif" font-weight="bold" font-size="17" fill="#000">D</text><path d="M13 6.500h6.500v8M5 14v6h6" fill="none" stroke="#555" stroke-width="1.200" stroke-dasharray="2.500 2"/><circle cx="18" cy="18.500" r="4.600" fill="#5fbf3a"/><circle cx="17.500" cy="18" r="2" fill="none" stroke="#fff" stroke-width="1.100"/><path d="M19 19.500l2 2" stroke="#fff" stroke-width="1.200"/></svg>
<svg class="b" style="left:602px;top:98px" width="22" height="20" viewBox="0 0 22 20"><rect x="2" y="2.500" width="13.500" height="12.500" fill="none" stroke="#555" stroke-width="1.200" stroke-dasharray="2.500 2"/><circle cx="14.500" cy="14.500" r="4.600" fill="#5fbf3a"/><circle cx="14" cy="14" r="2" fill="none" stroke="#fff" stroke-width="1.100"/><path d="M15.500 15.500l2 2" stroke="#fff" stroke-width="1.200"/></svg>
<svg class="b" style="left:634px;top:95.8px" width="22" height="22" viewBox="0 0 22 22"><path d="M16.15 14.3V6.2H14.05L17.95 .7L21.85 6.2H19.75V14.3Z" fill="url(#ag)" stroke="#6f7a50" stroke-width=".8" stroke-linejoin="round"/><path d="M14.300 16.400H6V13.900L.3 17.800L6 21.700V19.200H14.300Z" fill="#f9bc1c" stroke="#8a7048" stroke-width=".8" stroke-linejoin="round"/><path d="M5.500 17.800H14" stroke="#fff0a0" stroke-width="1.100"/><rect x="14.3" y="14.200" width="7.300" height="7.300" fill="#f2300a" stroke="#6f6238" stroke-width=".9"/><text x="0.8" y="10.600" font-family="Liberation Sans,sans-serif" font-size="9.300" fill="#4a4a4a" textLength="9.800" lengthAdjust="spacingAndGlyphs">+X</text></svg>
<svg class="b" style="left:669px;top:95.8px" width="22" height="22" viewBox="0 0 22 22"><path d="M2.15 14.3V6.2H0.05L3.95 .7L7.85 6.2H5.75V14.3Z" fill="url(#ag)" stroke="#6f7a50" stroke-width=".8" stroke-linejoin="round"/><path d="M7.6 16.4H15.3V13.9L21 17.8L15.3 21.700V19.200H7.600Z" fill="#f9bc1c" stroke="#8a7048" stroke-width=".8" stroke-linejoin="round"/><path d="M8 17.800H16" stroke="#fff0a0" stroke-width="1.100"/><rect x="0.3" y="14.200" width="7.300" height="7.300" fill="#f2300a" stroke="#6f6238" stroke-width=".9"/><text x="8.6" y="10.600" font-family="Liberation Sans,sans-serif" font-size="9.300" fill="#4a4a4a" textLength="9.800" lengthAdjust="spacingAndGlyphs">–X</text></svg>
<svg class="b" style="left:703px;top:95.8px" width="22" height="22" viewBox="0 0 22 22"><path d="M2.15 14.3V6.2H0.05L3.95 .7L7.85 6.2H5.75V14.3Z" fill="url(#ag)" stroke="#6f7a50" stroke-width=".8" stroke-linejoin="round"/><path d="M7.6 16.4H15.3V13.9L21 17.8L15.3 21.700V19.200H7.600Z" fill="#f0482a" stroke="#8a7048" stroke-width=".8" stroke-linejoin="round"/><path d="M8 17.800H16" stroke="#ffb09a" stroke-width="1.100"/><rect x="0.3" y="14.200" width="7.300" height="7.300" fill="#fbbb10" stroke="#6f6238" stroke-width=".9"/><text x="8.6" y="10.600" font-family="Liberation Sans,sans-serif" font-size="9.300" fill="#4a4a4a" textLength="9.800" lengthAdjust="spacingAndGlyphs">+Y</text></svg>
<svg class="b" style="left:736px;top:95.8px" width="22" height="22" viewBox="0 0 22 22"><path d="M16.15 14.3V6.2H14.05L17.95 .7L21.85 6.2H19.75V14.3Z" fill="url(#ag)" stroke="#6f7a50" stroke-width=".8" stroke-linejoin="round"/><path d="M14.300 16.400H6V13.900L.3 17.800L6 21.700V19.200H14.300Z" fill="#f0482a" stroke="#8a7048" stroke-width=".8" stroke-linejoin="round"/><path d="M5.500 17.800H14" stroke="#ffb09a" stroke-width="1.100"/><rect x="14.3" y="14.200" width="7.300" height="7.300" fill="#fbbb10" stroke="#6f6238" stroke-width=".9"/><text x="0.8" y="10.600" font-family="Liberation Sans,sans-serif" font-size="9.300" fill="#4a4a4a" textLength="9.800" lengthAdjust="spacingAndGlyphs">–Y</text></svg>
<svg class="b" style="left:770px;top:95.8px" width="22" height="22" viewBox="0 0 22 22"><path d="M16.15 14.3V6.2H14.05L17.95 .7L21.85 6.2H19.75V14.3Z" fill="url(#ay)" stroke="#6f7a50" stroke-width=".8" stroke-linejoin="round"/><path d="M14.300 16.400H6V13.900L.3 17.800L6 21.700V19.200H14.300Z" fill="#f0482a" stroke="#8a7048" stroke-width=".8" stroke-linejoin="round"/><path d="M5.500 17.800H14" stroke="#ffb09a" stroke-width="1.100"/><rect x="14.3" y="14.200" width="7.300" height="7.300" fill="#78bf42" stroke="#6f6238" stroke-width=".9"/><text x="0.8" y="10.600" font-family="Liberation Sans,sans-serif" font-size="9.300" fill="#4a4a4a" textLength="9.800" lengthAdjust="spacingAndGlyphs">+Z</text></svg>
<svg class="b" style="left:805px;top:95.8px" width="22" height="22" viewBox="0 0 22 22"><path d="M2.15 14.3V6.2H0.05L3.95 .7L7.85 6.2H5.75V14.3Z" fill="url(#ay)" stroke="#6f7a50" stroke-width=".8" stroke-linejoin="round"/><path d="M7.6 16.4H15.3V13.9L21 17.8L15.3 21.700V19.200H7.600Z" fill="#f0482a" stroke="#8a7048" stroke-width=".8" stroke-linejoin="round"/><path d="M8 17.800H16" stroke="#ffb09a" stroke-width="1.100"/><rect x="0.3" y="14.200" width="7.300" height="7.300" fill="#78bf42" stroke="#6f6238" stroke-width=".9"/><text x="8.6" y="10.600" font-family="Liberation Sans,sans-serif" font-size="9.300" fill="#4a4a4a" textLength="9.800" lengthAdjust="spacingAndGlyphs">–Z</text></svg>
<svg class="b" style="left:853px;top:97px" width="24" height="22" viewBox="0 0 24 22"><path d="M8.700 13.700V6" stroke="#e8b020" stroke-width="2"/><path d="M8.700 3.200l2.400 3.600h-4.800z" fill="#e8b020"/><path d="M8.700 13.700H16.500" stroke="#e8583a" stroke-width="2"/><path d="M19.600 13.700l-3.600 2.400v-4.800z" fill="#e8583a"/><path d="M8.700 13.700L5.300 17" stroke="#62b03a" stroke-width="2.200"/><path d="M3.300 19l.9-3.900 3 3z" fill="#62b03a"/><ellipse cx="17.600" cy="5.800" rx="5" ry="3" fill="#dfe6f2" stroke="#444" stroke-width=".8"/><circle cx="17.600" cy="5.800" r="2.400" fill="#2a4590"/><circle cx="17.600" cy="5.800" r="1.100" fill="#0a0a2a"/><circle cx="16.800" cy="5" r=".6" fill="#cfe0ff"/></svg>
<svg class="b" style="left:887px;top:96px" width="25" height="25" viewBox="0 0 25 25"><path d="M22.80 12.50A10.3 10.3 0 1 1 16.52 3.02L15.20 6.15A6.9 6.9 0 1 0 19.40 12.50Z" fill="url(#gring)" stroke="#6f8a55" stroke-width=".9"/><path d="M15.10 2.90L21.80 2.60L21.50 10.10Z" fill="#9fd683" stroke="#6f8a55" stroke-width=".9" stroke-linejoin="round"/><circle cx="12.5" cy="12.5" r="2.7" fill="#ffc60a" stroke="#d89a00" stroke-width=".6"/><circle cx="11.9" cy="11.8" r="1" fill="#ffe88a"/></svg>
<svg class="b" style="left:919px;top:95.2px" width="25" height="25" viewBox="0 0 25 25"><path d="M22.90 12.50A10.3 10.3 0 1 1 16.62 3.02L15.30 6.15A6.9 6.9 0 1 0 19.50 12.50Z" fill="url(#gring)" stroke="#6f8a55" stroke-width=".9"/><path d="M15.20 2.90L21.90 2.60L21.60 10.10Z" fill="#9fd683" stroke="#6f8a55" stroke-width=".9" stroke-linejoin="round"/><path d="M12.6 6v13M6.1 12.5h13" stroke="#7a7a68" stroke-width="1.1"/><circle cx="12.6" cy="12.5" r="2.7" fill="#ffc60a" stroke="#d89a00" stroke-width=".6"/><circle cx="12" cy="11.8" r="1" fill="#ffe88a"/></svg>
<svg class="b" style="left:953px;top:95.2px" width="27" height="25" viewBox="0 0 27 25"><path d="M23.00 12.50A10.3 10.3 0 1 1 16.72 3.02L15.40 6.15A6.9 6.9 0 1 0 19.60 12.50Z" fill="url(#gring)" stroke="#6f8a55" stroke-width=".9"/><path d="M15.30 2.90L22.00 2.60L21.70 10.10Z" fill="#9fd683" stroke="#6f8a55" stroke-width=".9" stroke-linejoin="round"/><path d="M15 12.500l9 4.200-3.600 1.100 2.300 4-2 1.100-2.300-4-2.600 2.600z" fill="#000"/></svg>
<svg class="b" style="left:19px;top:134px" width="18" height="24" viewBox="0 0 18 23.500"><rect x=".7" y=".7" width="16.600" height="22" rx="1.500" fill="#a8d0f4" stroke="#6f7456" stroke-width="1.300"/><rect x="3.500" y="3.500" width="11" height="2.500" rx="1" fill="#fff" stroke="#667" stroke-width=".7"/><rect x="3.3" y="8.8" width="2.600" height="2.400" fill="#e8eef8" stroke="#555" stroke-width=".8"/><rect x="3.3" y="13.4" width="2.600" height="2.400" fill="#e8eef8" stroke="#555" stroke-width=".8"/><rect x="3.3" y="18" width="2.600" height="2.400" fill="#e8eef8" stroke="#555" stroke-width=".8"/><rect x="7.5" y="8.8" width="2.600" height="2.400" fill="#e8eef8" stroke="#555" stroke-width=".8"/><rect x="7.5" y="13.4" width="2.600" height="2.400" fill="#e8eef8" stroke="#555" stroke-width=".8"/><rect x="7.5" y="18" width="2.600" height="2.400" fill="#e8eef8" stroke="#555" stroke-width=".8"/><rect x="11.7" y="8.8" width="2.600" height="2.400" fill="#e8eef8" stroke="#555" stroke-width=".8"/><rect x="11.7" y="13.4" width="2.600" height="2.400" fill="#e8eef8" stroke="#555" stroke-width=".8"/><rect x="11.7" y="18" width="2.600" height="2.400" fill="#e8eef8" stroke="#555" stroke-width=".8"/></svg>
<svg class="b" style="left:50px;top:133px" width="26" height="26" viewBox="0 0 26 26"><path d="M2 4C10-2.500 26.500 2.500 25 17.500C24.500 22 22 25 19.500 25Z" fill="url(#gball)" stroke="#6f7456" stroke-width="1.200"/><ellipse cx="10.700" cy="14.500" rx="5.300" ry="13.600" transform="rotate(-39.500 10.700 14.500)" fill="#86cc5c" stroke="#6f7456" stroke-width="1.100"/><ellipse cx="10.700" cy="14.500" rx="3.500" ry="9" transform="rotate(-39.500 10.700 14.500)" fill="#8ec8f0" stroke="#3a78b8" stroke-width=".9"/><ellipse cx="10.700" cy="14.500" rx="1.600" ry="4.500" transform="rotate(-39.500 10.700 14.500)" fill="#c8e6f8" stroke="#3a78b8" stroke-width=".8"/></svg>
<svg class="b" style="left:86px;top:133px" width="24" height="26" viewBox="0 0 23 25"><path d="M1.500 6l10.500-4.500 5 2.300-4 13.200-5 4-6.500-3.500z" fill="#6ab440"/><path d="M7 8l10-2.500v11l-9 3z" fill="url(#gball)" stroke="#5a9a40" stroke-width=".8"/><path d="M1.500 6l10.500-4.500 9.500 4.500v11.500l-9.500 5.500-10.500-5.500z" fill="none" stroke="#6f7456" stroke-width="1.100"/><path d="M1.500 6l10.500 5 9.500-5M12 11v12" fill="none" stroke="#6f7456" stroke-width="1"/></svg>
<svg class="b" style="left:121px;top:133px" width="24" height="26" viewBox="0 0 23 25"><path d="M1.500 6l10.500-4.500 9.500 4.500v11.500l-9.500 5.500-10.500-5.500z" fill="none" stroke="#6f7456" stroke-width="1.100"/><path d="M1.500 6l10.500 5 9.500-5M12 11v12" fill="none" stroke="#6f7456" stroke-width="1"/><path d="M6 6l11-2v13l-9 4z" fill="url(#gball)" stroke="#5a9a40" stroke-width=".9"/></svg>
<svg class="b" style="left:156px;top:133px" width="24" height="26" viewBox="0 0 23 25"><path d="M1.500 6l10.500-4.500 9.500 4.500v11.500l-9.500 5.500-10.500-5.500z" fill="none" stroke="#6f7456" stroke-width="1.100"/><path d="M1.500 6l10.500 5 9.500-5M12 11v12" fill="none" stroke="#6f7456" stroke-width="1"/><path d="M1.500 6l5-2 3 1.500v4l-3.500 1.500-4.500-2z" fill="#6ab440" stroke="#3d7a20" stroke-width=".7"/><path d="M11 7.500l6-3 4.500 2v7l-3.500 2v5l-3 1.500v-9l-4 1.500z" fill="#6ab440" stroke="#3d7a20" stroke-width=".7"/><path d="M14 10l4-1.500v3l-2 1v5" stroke="#d8f2c4" stroke-width="1.200" fill="none"/></svg>
<svg class="b" style="left:191px;top:133px" width="24" height="26" viewBox="0 0 23 25"><path d="M1.500 6l10.500-4.500 9.500 4.500v11.500l-9.500 5.500-10.500-5.500z" fill="#ececec" stroke="#b8b8b8" stroke-width="1.100"/><path d="M1.500 6l10.500 5 9.500-5M12 11v12" fill="none" stroke="#b8b8b8" stroke-width="1"/><path d="M6 9l6-2.500 5 2.500v6l-5 3-6-3z" fill="#c4c4c4" stroke="#aaa" stroke-width=".8"/><path d="M6 9l6 3 5-3M12 12v6" fill="none" stroke="#ddd" stroke-width=".8"/></svg>
<svg class="b" style="left:225px;top:133px" width="26" height="26" viewBox="0 0 26 26"><circle cx="13" cy="13" r="10.800" fill="#cfe4f6" stroke="#6f7456" stroke-width="1.500"/><ellipse cx="13" cy="13" rx="5" ry="10.800" fill="none" stroke="#7a8a9a" stroke-width=".9"/><path d="M2.500 13h21M4 7.500h18M4 18.500h18" stroke="#7a8a9a" stroke-width=".9" fill="none"/><rect x="7" y="7" width="12" height="5" fill="#f4f8fc" opacity=".7"/><circle cx="13" cy="2.2" r="1.800" fill="#8fd060" stroke="#4a8a30" stroke-width=".7"/><circle cx="2.2" cy="13" r="1.800" fill="#8fd060" stroke="#4a8a30" stroke-width=".7"/><circle cx="23.8" cy="13" r="1.800" fill="#8fd060" stroke="#4a8a30" stroke-width=".7"/><circle cx="13" cy="23.8" r="1.800" fill="#8fd060" stroke="#4a8a30" stroke-width=".7"/><circle cx="8" cy="16.5" r="1.800" fill="#8fd060" stroke="#4a8a30" stroke-width=".7"/><circle cx="18" cy="16.5" r="1.800" fill="#8fd060" stroke="#4a8a30" stroke-width=".7"/></svg>
<svg class="b" style="left:260px;top:134px" width="26" height="24" viewBox="0 0 26 24"><path d="M1 4c6-4 10 2 15-.5s6-2 9-1M1 9c5-3 7-1 9 .5M19 8.500c2-1 4-1 6-.5M1 15.500c5 2 7 1 9-.5M19 15.500c2 1 4 1 6 .5M1 20.500c6 4 10-2 15 .5s6 2 9 1" fill="none" stroke="#b4b4b4" stroke-width="1.600"/><circle cx="9.500" cy="12" r="4" fill="#c0c0c0" stroke="#aaa" stroke-width=".8"/></svg>
<svg class="b" style="left:295px;top:135px" width="27" height="22" viewBox="0 0 27 22"><path d="M1 13c8 0 13-4 16-11.500l8 3c-1 6-3 10-4 15.500h-20z" fill="#d0d0d0" stroke="#c0c0c0" stroke-width=".8"/><path d="M1 13.500h24v7h-24z" fill="#dedede" opacity=".8"/></svg>
<svg class="b" style="left:330px;top:133px" width="26" height="26" viewBox="0 0 26 26"><circle cx="13" cy="13" r="11.300" fill="#f2f2ec" stroke="#6f7456" stroke-width="1.200"/><circle cx="17.500" cy="13.500" r="4.700" fill="#5cb838" stroke="#3d8a20" stroke-width=".8"/><circle cx="16.500" cy="12.500" r="2" fill="#a8e080" opacity=".8"/><circle cx="8.500" cy="9" r="3" fill="#b8dcf4" stroke="#5a7a9a" stroke-width=".9"/><circle cx="9.500" cy="18.500" r="2.300" fill="#b8dcf4" stroke="#5a7a9a" stroke-width=".9"/></svg>
<svg class="b" style="left:364px;top:133px" width="28" height="26" viewBox="0 0 28 26"><circle cx="16" cy="14.500" r="9.800" fill="#f4f4f4" stroke="#b0b0b0" stroke-width="1"/><circle cx="5" cy="4" r="2.800" fill="#f4f4f4" stroke="#b0b0b0" stroke-width="1"/><circle cx="19" cy="15" r="4" fill="#b4b4b4"/><circle cx="12.500" cy="19.500" r="1.800" fill="#f4f4f4" stroke="#b0b0b0" stroke-width=".9"/></svg>
<svg class="b" style="left:414px;top:133px" width="26" height="26" viewBox="0 0 26 26"><defs><radialGradient id="bsq" cx=".45" cy=".6" r=".7"><stop offset="0" stop-color="#fff"/><stop offset="1" stop-color="#8fc0f0"/></radialGradient></defs><path d="M1.500 1.500h18.500v12.500h-5.500v6h-13z" fill="url(#bsq)" stroke="#666650" stroke-width="1.600"/><rect x="16" y="16" width="8" height="8" fill="#5cb838" stroke="#3d6a20" stroke-width="1" stroke-dasharray="1.500 1"/></svg>
<svg class="b" style="left:450px;top:134px" width="24" height="24" viewBox="0 0 24 24"><circle cx="6" cy="6.5" r="4.600" fill="#fbfbf6" stroke="#555545" stroke-width="1.200"/><path d="M6 3.5v3l2 1.500" stroke="#2a60b0" stroke-width="1" fill="none"/><circle cx="17.800" cy="6.500" r="4.800" fill="#f8b400" stroke="#555545" stroke-width="1.200"/><rect x="15.800" y="4.500" width="4" height="4" fill="#d88a00" stroke="#7a5a20" stroke-width=".7"/><path d="M2 13v9.500h20" fill="none" stroke="#b0b0a0" stroke-width="1"/><path d="M3 20.5l2-5 1.500 6 1.500-7 1.500 7 1.500-7 1.500 7 1.500-7 1.500 6 1.500-5 1.500 4 1.500-3" fill="none" stroke="#2a78c8" stroke-width="1.100"/></svg>
<svg class="b" style="left:485px;top:134px" width="25" height="25" viewBox="0 0 25 25"><path d="M3 2l14 1.500 6 7-5 11-13 1z" fill="#b4d8a0" stroke="#9ac088" stroke-width=".8"/><path d="M3 22l19-15" stroke="#2a78c8" stroke-width="1.200"/><circle cx="3" cy="22" r="1.500" fill="#2a78c8"/><circle cx="22" cy="7" r="1.500" fill="#2a78c8"/><path d="M4 17l1.500-3.500 1 4 1.500-6 1.500 5 1.500-6.500 1 5.500 2-7 1 5 1.500-6 1 4.500 1.500-5" fill="none" stroke="#2a60b0" stroke-width="1"/></svg>
<svg class="b" style="left:520px;top:134px" width="24" height="24" viewBox="0 0 24 24"><circle cx="6" cy="6.5" r="4.600" fill="#fbfbf6" stroke="#555545" stroke-width="1.200"/><path d="M6 3.5v3l2 1.500" stroke="#2a60b0" stroke-width="1" fill="none"/><rect x="12.500" y="1.500" width="10" height="10" fill="#f8f8f0" stroke="#555" stroke-width="1" stroke-dasharray="1.300 1.100"/><path d="M14.500 9.500l3-5.500 3 5.500z" fill="#6cc040" stroke="#4a8a30" stroke-width=".6"/><path d="M2 13v9.500h20" fill="none" stroke="#b0b0a0" stroke-width="1"/><path d="M3 20.5l2-5 1.500 6 1.500-7 1.500 7 1.500-7 1.500 7 1.500-7 1.500 6 1.500-5 1.500 4 1.500-3" fill="none" stroke="#2a78c8" stroke-width="1.100"/></svg>
<svg class="b" style="left:555px;top:133px" width="24" height="26" viewBox="0 0 23 25"><path d="M1.500 6l10.500-4.500 9.500 4.500v11.500l-9.500 5.500-10.500-5.500z" fill="#d4e6f6" stroke="#b8cde0" stroke-width="1"/><path d="M1.500 6l10.500 5 9.500-5M12 11v12" fill="none" stroke="#e8f2fa" stroke-width="1"/><path d="M12 3v18M5 10l14 6M5 16l14-6" stroke="#7a7a6a" stroke-width="1.300"/></svg>
<svg class="b" style="left:31px;top:194px" width="9" height="14" viewBox="0 0 9 14"><rect x=".6" y=".6" width="7.800" height="12.800" rx="1" fill="#d4d4d4" stroke="#222" stroke-width="1.200"/><rect x="2.200" y="2.500" width="4.600" height="2" fill="#222"/><rect x="2.200" y="5.500" width="4.600" height="1.200" fill="#555"/><rect x="2" y="8" width="5" height="4.500" fill="#9a9a9a"/></svg>
<svg class="b" style="left:27px;top:215px" width="16" height="16" viewBox="0 0 16 16"><path d="M1 4.500l7-3 7 2.500v8l-7 3.500-7-3z" fill="#6cbb4a" stroke="#3d6a2a" stroke-width="1"/><path d="M1 4.500l7 3 7-3.500M8 7.500v8" fill="none" stroke="#3d6a2a" stroke-width=".8"/><path d="M1 4.500l7 3v8l-7-3z" fill="#4a9a30"/><path d="M1 4.500l7-3 7 2.500-7 3.500z" fill="#9ad87a"/></svg>
<svg class="b" style="left:4px;top:218px" width="17" height="11" viewBox="0 0 17 11"><path d="M.8 5.500c3-5.500 12.400-5.500 15.400 0-3 5.500-12.400 5.500-15.400 0z" fill="#fff" stroke="#222" stroke-width="1.100"/><circle cx="8.500" cy="5.500" r="3.600" fill="#3a5aa8"/><circle cx="8.500" cy="5.500" r="1.700" fill="#05051a"/><circle cx="7.300" cy="4.300" r=".8" fill="#fff"/></svg>
<svg class="b" style="left:19px;top:433px" width="15" height="17" viewBox="0 0 15 17"><path d="M1 6l5-2 5 2v7l-5 3-5-3z" fill="#e4e4e4" stroke="#b4b4b4" stroke-width="1.100"/><path d="M6 7l5-4.500-2-1h5.500v5.500l-1.500-2-5 4.500z" fill="#d4d4d4" stroke="#b4b4b4" stroke-width=".8"/></svg>
<svg class="b" style="left:96px;top:434px" width="15" height="15" viewBox="0 0 15 15"><circle cx="7.500" cy="7.500" r="6.500" fill="#d0d0d0" stroke="#b4b4b4" stroke-width="1.200"/><path d="M3.500 10.500l7-7 1.500 1.500-7 7z" fill="#efefef"/></svg>
<svg class="b" style="left:170px;top:434px" width="15" height="15" viewBox="0 0 15 15"><path d="M2 4.500l2.500-2.500 3 3 3-3 2.500 2.500-3 3 3 3-2.500 2.500-3-3-3 3-2.500-2.500 3-3z" fill="#f0603a" stroke="#d8401a" stroke-width=".8"/></svg>
<svg class="b" style="left:254px;top:433.5px" width="13" height="16" viewBox="0 0 13 16"><g transform="translate(1.400 0) scale(.8)"><path d="M1.800 5.500c0-3 2-4.600 5-4.600s5 1.700 5 4.200c0 2-1.300 3-2.400 3.800s-1.300 1.300-1.300 2.500h-3c0-2 .7-3 1.800-3.800s1.600-1.400 1.600-2.300c0-1-.8-1.600-1.900-1.600s-1.900.7-2 2z" fill="url(#gb)" stroke="#6a7a80" stroke-width=".7"/><rect x="5" y="13.200" width="3.300" height="3.300" fill="url(#gb)" stroke="#6a7a80" stroke-width=".7"/></g></svg>
<svg class="b" style="left:260.7px;top:467px" width="16" height="16" viewBox="0 0 16 16"><polygon points="15.15,6.55 15.15,9.45 13.03,9.67 12.74,10.38 14.08,12.03 12.03,14.08 10.38,12.74 9.67,13.03 9.45,15.15 6.55,15.15 6.33,13.03 5.62,12.74 3.97,14.08 1.92,12.03 3.26,10.38 2.97,9.67 0.85,9.45 0.85,6.55 2.97,6.33 3.26,5.62 1.92,3.97 3.97,1.92 5.62,3.26 6.33,2.97 6.55,0.85 9.45,0.85 9.67,2.97 10.38,3.26 12.03,1.92 14.08,3.97 12.74,5.62 13.03,6.33" fill="#fdfdfd" stroke="#8e98a8" stroke-width="1" stroke-linejoin="round"/><circle cx="8" cy="8" r="2.300" fill="#e4e4e8" stroke="#8e98a8" stroke-width="1"/></svg>
<svg class="b" style="left:27px;top:673.5px" width="9" height="16" viewBox="0 0 9 16"><rect x=".5" y=".5" width="7.500" height="14.500" fill="url(#gr)" stroke="#7a7a7a" stroke-width=".8"/></svg>
<svg class="b" style="left:114px;top:673px" width="18" height="17" viewBox="0 0 18 17"><rect x="3" y="9.500" width="14" height="6" fill="url(#grh)" stroke="#7a6a40" stroke-width=".7"/><circle cx="6.500" cy="6" r="4.800" fill="url(#gball)" stroke="#6aae40" stroke-width=".8"/></svg>
<svg class="b" style="left:189px;top:674px" width="19" height="16" viewBox="0 0 19 16"><path d="M1 4l4-3.500v2.300h9v-2.300l4 3.500-4 3.500v-2.300h-9v2.300z" fill="#a3d787" stroke="#6aae50" stroke-width=".8"/><path d="M.8 9v6.500M18.200 9v6.500M.8 13h17.400M5 11v4M9.500 11v4M14 11v4" stroke="#9a9a80" stroke-width="1" fill="none"/></svg>
<svg class="b" style="left:304px;top:192px" width="20" height="16" viewBox="0 0 20 16"><rect x="7.8" y="1.9" width="9.1" height="7.6" rx=".8" fill="#8c8c78" stroke="#6f6f5c" stroke-width=".7"/><rect x="9.1" y="0.9" width="3" height="1.400" fill="#6f6f5c"/><circle cx="12.55" cy="5.7" r="2.736" fill="#8c8c78" stroke="#c9c9bf" stroke-width=".8"/><circle cx="12.55" cy="5.7" r="1.292" fill="#c9c9bf" stroke="#6f6f5c" stroke-width=".5"/><g transform="translate(2.300 6.600) scale(.48)"><path d="M4.400 3.700L2.200 15.500L12.300 12.900L10 10.400C12 7.500 16.500 7 17.800 10.500C18.800 13.500 16.500 17 12.800 18.500C18 18.700 22.500 14.500 22.200 9.600C21.800 4 14.500 .8 7.200 6.400Z" fill="url(#gundo)" stroke="#b0432a" stroke-width="1"/></g></svg>
<svg class="b" style="left:331px;top:192px" width="20" height="16" viewBox="0 0 20 16"><rect x="2.5" y="1.7" width="9.2" height="7.5" rx=".8" fill="#c6c6c6" stroke="#b4b4b4" stroke-width=".7"/><rect x="3.8" y="0.7" width="3" height="1.400" fill="#b4b4b4"/><circle cx="7.3" cy="5.45" r="2.7" fill="#c6c6c6" stroke="#e2e2e2" stroke-width=".8"/><circle cx="7.3" cy="5.45" r="1.275" fill="#e2e2e2" stroke="#b4b4b4" stroke-width=".5"/><g transform="translate(17.100 6.600) scale(-.48 .48)"><path d="M4.400 3.700L2.200 15.500L12.300 12.900L10 10.400C12 7.500 16.500 7 17.800 10.500C18.800 13.500 16.500 17 12.800 18.500C18 18.700 22.500 14.500 22.200 9.600C21.800 4 14.500 .8 7.200 6.400Z" fill="#cfcfcf" stroke="#b4b4b4" stroke-width="1"/></g></svg>
<svg class="b" style="left:391px;top:192px" width="20" height="16" viewBox="0 0 20 16"><rect x="3.3" y="1.9" width="12.6" height="10.2" rx=".8" fill="#8c8c78" stroke="#6f6f5c" stroke-width=".7"/><rect x="4.6" y="0.9" width="3" height="1.400" fill="#6f6f5c"/><circle cx="9.8" cy="7" r="3.672" fill="#8c8c78" stroke="#c9c9bf" stroke-width=".8"/><circle cx="9.8" cy="7" r="1.734" fill="#c9c9bf" stroke="#6f6f5c" stroke-width=".5"/><circle cx="12.400" cy="10.400" r="4.200" fill="#5fbf3a"/><circle cx="12" cy="10" r="1.800" fill="#8fd86a" stroke="#fff" stroke-width="1"/><path d="M13.400 11.400l1.800 1.800" stroke="#fff" stroke-width="1.100"/></svg>
<svg class="b" style="left:417px;top:192px" width="20" height="16" viewBox="0 0 20 16"><rect x="3.4" y="1.4" width="12.2" height="12" fill="none" stroke="#55554a" stroke-width="1" stroke-dasharray="1 1.400"/><path d="M9.500 3.700L5.600 10.400H13.400Z" fill="#8fce70" stroke="#72b458" stroke-width=".6"/><path d="M12.6 9l4.600 2.300-1.800.6 1.200 2.100-1 .6-1.200-2.100-1.300 1.300z" fill="#66665a" stroke="#44443a" stroke-width=".4"/></svg>
<svg class="b" style="left:443px;top:192px" width="20" height="16" viewBox="0 0 20 16"><rect x="3.1" y="1.4" width="12.6" height="12" fill="none" stroke="#55554a" stroke-width="1" stroke-dasharray="1 1.400"/><path d="M9.400 3.700L5.700 10.200H13.300Z" fill="#f6f8f2" stroke="#a8cc98" stroke-width=".6"/><circle cx="9.400" cy="3.700" r="1.100" fill="#f5452a"/><circle cx="5.700" cy="10.200" r="1.100" fill="#f5452a"/><circle cx="13.300" cy="10.200" r="1" fill="#f5452a"/><path d="M12.6 9l4.600 2.300-1.800.6 1.200 2.100-1 .6-1.200-2.100-1.300 1.300z" fill="#66665a" stroke="#44443a" stroke-width=".4"/></svg>
<svg class="b" style="left:469px;top:192px" width="20" height="16" viewBox="0 0 20 16"><path d="M3.300 1.400l6 1.600v8.600l-6-1.400z" fill="none" stroke="#66665a" stroke-width=".9" stroke-dasharray="1 1.200"/><path d="M5 6.500l5.500-4 6.300 1.300v5.800l-5.300 1.600-6.500-1z" fill="#86cc62" stroke="#6ab04a" stroke-width=".5"/><path d="M5 6.500l5.500-4v8l-5.500-.3z" fill="#a9dd8c"/><path d="M9.5 9l4.600 2.300-1.800.6 1.200 2.100-1 .6-1.200-2.100-1.300 1.300z" fill="#66665a" stroke="#44443a" stroke-width=".4"/></svg>
<svg class="b" style="left:495px;top:192px" width="20" height="16" viewBox="0 0 20 16"><path d="M3.400 1.400l6 1.600v8.600l-6-1.400z" fill="none" stroke="#66665a" stroke-width=".9" stroke-dasharray="1 1.200"/><path d="M9.400 3l2.600-.6v8.400l-2.600 .8" fill="none" stroke="#c8c8bc" stroke-width=".8"/><circle cx="10.8" cy="1.9" r="1.100" fill="#f5452a"/><circle cx="15.8" cy="4.3" r="1.100" fill="#f5452a"/><circle cx="15.8" cy="9.8" r="1.100" fill="#f5452a"/><circle cx="5.2" cy="5.5" r="1.100" fill="#f5452a"/><circle cx="8" cy="6.3" r="1.100" fill="#f5452a"/><circle cx="5.2" cy="8" r="1.100" fill="#f5452a"/><circle cx="8" cy="9.2" r="1.100" fill="#f5452a"/><path d="M9.5 9l4.600 2.300-1.800.6 1.200 2.100-1 .6-1.200-2.100-1.300 1.300z" fill="#66665a" stroke="#44443a" stroke-width=".4"/></svg>
<svg class="b" style="left:521px;top:192px" width="20" height="16" viewBox="0 0 20 16"><path d="M3.300 1.400l5 2.400 6-2.400v3.500l-3.700 3 5.200 4.100-4.800 1.600-7.700-3.400z" fill="none" stroke="#2f5a28" stroke-width="1.100" stroke-dasharray="1 1.300"/><path d="M5.300 8l3.900-3.500v7z" fill="#62b244"/></svg>
<svg class="b" style="left:547px;top:192px" width="20" height="16" viewBox="0 0 20 16"><path d="M3.300 1.400l5 2.400 6-2.400v3.500l-3.700 3 5.200 4.100-4.800 1.600-7.700-3.400z" fill="none" stroke="#2f5a28" stroke-width="1.100" stroke-dasharray="1 1.300"/><circle cx="5.2" cy="5.8" r="1.100" fill="#f5452a"/><circle cx="8" cy="6.6" r="1.100" fill="#f5452a"/><circle cx="5.2" cy="8.3" r="1.100" fill="#f5452a"/><circle cx="8" cy="9.4" r="1.100" fill="#f5452a"/><circle cx="10.9" cy="4.7" r="1.100" fill="#f5452a"/><circle cx="11.3" cy="11" r="1.100" fill="#f5452a"/></svg>
<svg class="b" style="left:573px;top:192px" width="20" height="16" viewBox="0 0 20 16"><rect x="4.6" y="2.1" width="10.3" height="10.4" fill="none" stroke="#a9a99c" stroke-width="1" stroke-dasharray="1 1.400"/><circle cx="7.500" cy="5.500" r="1.300" fill="#b4d2ee" stroke="#9aa" stroke-width=".5"/><circle cx="8.700" cy="10" r="1.200" fill="#b4d2ee" stroke="#9aa" stroke-width=".5"/><circle cx="11.600" cy="7.800" r="1.900" fill="#8fce70" stroke="#5a9a40" stroke-width=".7"/><path d="M12.2 9.2l4.600 2.300-1.800.6 1.200 2.100-1 .6-1.200-2.100-1.300 1.300z" fill="#66665a" stroke="#44443a" stroke-width=".4"/></svg>
<svg class="b" style="left:599px;top:192px" width="20" height="16" viewBox="0 0 20 16"><rect x="4.200" y="2.100" width="11.700" height="11.800" fill="#f3f3ee" stroke="#7d7d74" stroke-width=".9"/><rect x="4.700" y="2.600" width="10.700" height="2.400" fill="#7eaadc"/><rect x="7.500" y="6.500" width="7.500" height="1.700" fill="#93cf76"/><rect x="7.500" y="9.400" width="7.500" height="1.700" fill="#93cf76"/><rect x="7.500" y="12" width="7.500" height="1.300" fill="#93cf76"/><path d="M5.500 7.300h1M5.500 10.200h1" stroke="#8a8" stroke-width="1"/></svg>
<svg class="b" style="left:1051px;top:194px" width="10" height="11" viewBox="0 0 10 11"><rect x=".8" y=".8" width="8.400" height="9.400" fill="#e4eaf8" stroke="#000" stroke-width="1.200"/><path d="M5 .8v9.400" stroke="#000" stroke-width="1.200"/></svg>
<svg class="b" style="left:1077px;top:194px" width="10" height="11" viewBox="0 0 10 11"><rect x=".8" y=".8" width="8.400" height="9.400" fill="#e4eaf8" stroke="#000" stroke-width="1.200"/><path d="M.8 5.500h8.400" stroke="#000" stroke-width="1.200"/></svg>
<svg class="b" style="left:1103px;top:194px" width="10" height="11" viewBox="0 0 10 11"><rect x=".8" y="1" width="8.400" height="9.200" fill="#fff" stroke="#000" stroke-width="1.200"/><path d="M.8 1.500h8.400" stroke="#000" stroke-width="2"/></svg>
<svg class="b" style="left:1130px;top:195px" width="9" height="9" viewBox="0 0 9 9"><path d="M1 1l7 7M8 1l-7 7" stroke="#000" stroke-width="1.300"/></svg>
<svg id="rv" width="1148" height="788" viewBox="0 0 1148 788" shape-rendering="crispEdges" style="position:absolute;left:0;top:0">
<rect x="299" y="209" width="849" height="553" fill="#0000ff"/>
<rect x="301" y="211" width="846" height="549" fill="#52576e"/>
<g><polygon fill="#952225" points="489.1,250.6 498.7,250.6 489.1,260.2"/><polygon fill="#952025" points="508.3,250.6 527.4,250.6 517.9,260.2"/><polygon fill="#941f24" points="537,250.6 556.2,250.6 546.6,260.2"/><polygon fill="#931d24" points="565.8,250.6 585,250.6 575.4,260.2"/><polygon fill="#931b23" points="594.6,250.6 613.7,250.6 604.2,260.2"/><polygon fill="#921923" points="623.3,250.6 642.5,250.6 632.9,260.2"/><polygon fill="#911722" points="652.1,250.6 671.3,250.6 661.7,260.2"/><polygon fill="#911522" points="680.9,250.6 700,250.6 690.4,260.2"/><polygon fill="#901321" points="709.6,250.6 728.8,250.6 719.2,260.2"/><polygon fill="#8f1121" points="738.4,250.6 757.6,250.6 748,260.2"/><polygon fill="#8f0f20" points="767.1,250.6 786.3,250.6 776.7,260.2"/><polygon fill="#8e0d20" points="795.9,250.6 815.1,250.6 805.5,260.2"/><polygon fill="#8d0b1f" points="824.7,250.6 843.9,250.6 834.3,260.2"/><polygon fill="#8d091f" points="853.4,250.6 872.6,250.6 863,260.2"/><polygon fill="#8c071e" points="882.2,250.6 901.4,250.6 891.8,260.2"/><polygon fill="#8b051e" points="911,250.6 930.1,250.6 920.6,260.2"/><polygon fill="#8b031d" points="939.7,250.6 958.9,250.6 949.3,260.2"/><polygon fill="#9f352e" points="489.1,269.8 498.7,260.2 508.3,260.2 508.3,269.8 498.7,279.4"/><polygon fill="#9f342e" points="517.9,269.8 527.4,260.2 537,260.2 537,269.8 527.4,279.4"/><polygon fill="#9e332d" points="546.6,269.8 556.2,260.2 565.8,260.2 565.8,269.8 556.2,279.4"/><polygon fill="#9e322c" points="575.4,269.8 585,260.2 594.6,260.2 594.6,269.8 585,279.4"/><polygon fill="#9d312c" points="604.2,269.8 613.7,260.2 623.3,260.2 623.3,269.8 613.7,279.4"/><polygon fill="#9d302b" points="632.9,269.8 642.5,260.2 652.1,260.2 652.1,269.8 642.5,279.4"/><polygon fill="#9c2f2b" points="661.7,269.8 671.3,260.2 680.9,260.2 680.9,269.8 671.3,279.4"/><polygon fill="#9b2e2a" points="690.4,269.8 700,260.2 709.6,260.2 709.6,269.8 700,279.4"/><polygon fill="#9b2d2a" points="719.2,269.8 728.8,260.2 738.4,260.2 738.4,269.8 728.8,279.4"/><polygon fill="#9a2b29" points="748,269.8 757.6,260.2 767.1,260.2 767.1,269.8 757.6,279.4"/><polygon fill="#9a2a29" points="776.7,269.8 786.3,260.2 795.9,260.2 795.9,269.8 786.3,279.4"/><polygon fill="#992928" points="805.5,269.8 815.1,260.2 824.7,260.2 824.7,269.8 815.1,279.4"/><polygon fill="#982828" points="834.3,269.8 843.9,260.2 853.4,260.2 853.4,269.8 843.9,279.4"/><polygon fill="#982627" points="863,269.8 872.6,260.2 882.2,260.2 882.2,269.8 872.6,279.4"/><polygon fill="#972527" points="891.8,269.8 901.4,260.2 911,260.2 911,269.8 901.4,279.4"/><polygon fill="#962426" points="920.6,269.8 930.1,260.2 939.7,260.2 939.7,269.8 930.1,279.4"/><polygon fill="#962326" points="949.3,269.8 958.9,260.2 958.9,279.4"/><polygon fill="#a84538" points="489.1,279.4 498.7,288.9 489.1,298.5"/><polygon fill="#a84438" points="508.3,279.4 517.9,279.4 527.4,288.9 517.9,298.5 508.3,288.9"/><polygon fill="#a74437" points="537,279.4 546.6,279.4 556.2,288.9 546.6,298.5 537,288.9"/><polygon fill="#a74336" points="565.8,279.4 575.4,279.4 585,288.9 575.4,298.5 565.8,288.9"/><polygon fill="#a64236" points="594.6,279.4 604.2,279.4 613.7,288.9 604.2,298.5 594.6,288.9"/><polygon fill="#a64135" points="623.3,279.4 632.9,279.4 642.5,288.9 632.9,298.5 623.3,288.9"/><polygon fill="#a54034" points="652.1,279.4 661.7,279.4 671.3,288.9 661.7,298.5 652.1,288.9"/><polygon fill="#a53f34" points="680.9,279.4 690.4,279.4 700,288.9 690.4,298.5 680.9,288.9"/><polygon fill="#a43e33" points="709.6,279.4 719.2,279.4 728.8,288.9 719.2,298.5 709.6,288.9"/><polygon fill="#a43d33" points="738.4,279.4 748,279.4 757.6,288.9 748,298.5 738.4,288.9"/><polygon fill="#a33c32" points="767.1,279.4 776.7,279.4 786.3,288.9 776.7,298.5 767.1,288.9"/><polygon fill="#a33b32" points="795.9,279.4 805.5,279.4 815.1,288.9 805.5,298.5 795.9,288.9"/><polygon fill="#a23a31" points="824.7,279.4 834.3,279.4 843.9,288.9 834.3,298.5 824.7,288.9"/><polygon fill="#a23930" points="853.4,279.4 863,279.4 872.6,288.9 863,298.5 853.4,288.9"/><polygon fill="#a13830" points="882.2,279.4 891.8,279.4 901.4,288.9 891.8,298.5 882.2,288.9"/><polygon fill="#a0372f" points="911,279.4 920.6,279.4 930.1,288.9 920.6,298.5 911,288.9"/><polygon fill="#a0362f" points="939.7,279.4 949.3,279.4 958.9,288.9 949.3,298.5 939.7,288.9"/><polygon fill="#b05543" points="489.1,308.1 498.7,298.5 508.3,298.5 508.3,308.1 498.7,317.7"/><polygon fill="#af5442" points="517.9,308.1 527.4,298.5 537,298.5 537,308.1 527.4,317.7"/><polygon fill="#af5341" points="546.6,308.1 556.2,298.5 565.8,298.5 565.8,308.1 556.2,317.7"/><polygon fill="#ae5241" points="575.4,308.1 585,298.5 594.6,298.5 594.6,308.1 585,317.7"/><polygon fill="#ae5140" points="604.2,308.1 613.7,298.5 623.3,298.5 623.3,308.1 613.7,317.7"/><polygon fill="#ae5040" points="632.9,308.1 642.5,298.5 652.1,298.5 652.1,308.1 642.5,317.7"/><polygon fill="#ad4f3f" points="661.7,308.1 671.3,298.5 680.9,298.5 680.9,308.1 671.3,317.7"/><polygon fill="#ad4e3e" points="690.4,308.1 700,298.5 709.6,298.5 709.6,308.1 700,317.7"/><polygon fill="#ac4d3e" points="719.2,308.1 728.8,298.5 738.4,298.5 738.4,308.1 728.8,317.7"/><polygon fill="#ac4c3d" points="748,308.1 757.6,298.5 767.1,298.5 767.1,308.1 757.6,317.7"/><polygon fill="#ac4c3c" points="776.7,308.1 786.3,298.5 795.9,298.5 795.9,308.1 786.3,317.7"/><polygon fill="#ab4b3c" points="805.5,308.1 815.1,298.5 824.7,298.5 824.7,308.1 815.1,317.7"/><polygon fill="#ab4a3b" points="834.3,308.1 843.9,298.5 853.4,298.5 853.4,308.1 843.9,317.7"/><polygon fill="#aa493b" points="863,308.1 872.6,298.5 882.2,298.5 882.2,308.1 872.6,317.7"/><polygon fill="#aa483a" points="891.8,308.1 901.4,298.5 911,298.5 911,308.1 901.4,317.7"/><polygon fill="#a94739" points="920.6,308.1 930.1,298.5 939.7,298.5 939.7,308.1 930.1,317.7"/><polygon fill="#a94639" points="949.3,308.1 958.9,298.5 958.9,317.7"/><polygon fill="#b6634d" points="489.1,317.7 498.7,327.3 489.1,336.9"/><polygon fill="#b6624c" points="508.3,317.7 517.9,317.7 527.4,327.3 517.9,336.9 508.3,327.3"/><polygon fill="#b5614c" points="537,317.7 546.6,317.7 556.2,327.3 546.6,336.9 537,327.3"/><polygon fill="#b5604b" points="565.8,317.7 575.4,317.7 585,327.3 575.4,336.9 565.8,327.3"/><polygon fill="#b5604b" points="594.6,317.7 604.2,317.7 613.7,327.3 604.2,336.9 594.6,327.3"/><polygon fill="#b45f4a" points="623.3,317.7 632.9,317.7 642.5,327.3 632.9,336.9 623.3,327.3"/><polygon fill="#b45e49" points="652.1,317.7 661.7,317.7 671.3,327.3 661.7,336.9 652.1,327.3"/><polygon fill="#b35d49" points="680.9,317.7 690.4,317.7 700,327.3 690.4,336.9 680.9,327.3"/><polygon fill="#b35c48" points="709.6,317.7 719.2,317.7 728.8,327.3 719.2,336.9 709.6,327.3"/><polygon fill="#b35b48" points="738.4,317.7 748,317.7 757.6,327.3 748,336.9 738.4,327.3"/><polygon fill="#b25b47" points="767.1,317.7 776.7,317.7 786.3,327.3 776.7,336.9 767.1,327.3"/><polygon fill="#b25a46" points="795.9,317.7 805.5,317.7 815.1,327.3 805.5,336.9 795.9,327.3"/><polygon fill="#b25946" points="824.7,317.7 834.3,317.7 843.9,327.3 834.3,336.9 824.7,327.3"/><polygon fill="#b15845" points="853.4,317.7 863,317.7 872.6,327.3 863,336.9 853.4,327.3"/><polygon fill="#b15744" points="882.2,317.7 891.8,317.7 901.4,327.3 891.8,336.9 882.2,327.3"/><polygon fill="#b05644" points="911,317.7 920.6,317.7 930.1,327.3 920.6,336.9 911,327.3"/><polygon fill="#b05543" points="939.7,317.7 949.3,317.7 958.9,327.3 949.3,336.9 939.7,327.3"/><polygon fill="#ba7059" points="489.1,346.5 498.7,336.9 508.3,336.9 508.3,346.5 498.7,356.1"/><polygon fill="#ba6f58" points="517.9,346.5 527.4,336.9 537,336.9 537,346.5 527.4,356.1"/><polygon fill="#ba6e57" points="546.6,346.5 556.2,336.9 565.8,336.9 565.8,346.5 556.2,356.1"/><polygon fill="#ba6e56" points="575.4,346.5 585,336.9 594.6,336.9 594.6,346.5 585,356.1"/><polygon fill="#ba6d56" points="604.2,346.5 613.7,336.9 623.3,336.9 623.3,346.5 613.7,356.1"/><polygon fill="#b96c55" points="632.9,346.5 642.5,336.9 652.1,336.9 652.1,346.5 642.5,356.1"/><polygon fill="#b96b54" points="661.7,346.5 671.3,336.9 680.9,336.9 680.9,346.5 671.3,356.1"/><polygon fill="#b96b54" points="690.4,346.5 700,336.9 709.6,336.9 709.6,346.5 700,356.1"/><polygon fill="#b96a53" points="719.2,346.5 728.8,336.9 738.4,336.9 738.4,346.5 728.8,356.1"/><polygon fill="#b86952" points="748,346.5 757.6,336.9 767.1,336.9 767.1,346.5 757.6,356.1"/><polygon fill="#b86852" points="776.7,346.5 786.3,336.9 795.9,336.9 795.9,346.5 786.3,356.1"/><polygon fill="#b86851" points="805.5,346.5 815.1,336.9 824.7,336.9 824.7,346.5 815.1,356.1"/><polygon fill="#b76750" points="834.3,346.5 843.9,336.9 853.4,336.9 853.4,346.5 843.9,356.1"/><polygon fill="#b76650" points="863,346.5 872.6,336.9 882.2,336.9 882.2,346.5 872.6,356.1"/><polygon fill="#b7654f" points="891.8,346.5 901.4,336.9 911,336.9 911,346.5 901.4,356.1"/><polygon fill="#b7644e" points="920.6,346.5 930.1,336.9 939.7,336.9 939.7,346.5 930.1,356.1"/><polygon fill="#b6644e" points="949.3,346.5 958.9,336.9 958.9,356.1"/><polygon fill="#bd7c64" points="489.1,356.1 498.7,365.6 489.1,375.2"/><polygon fill="#bd7b63" points="508.3,356.1 517.9,356.1 527.4,365.6 517.9,375.2 508.3,365.6"/><polygon fill="#bd7a63" points="537,356.1 546.6,356.1 556.2,365.6 546.6,375.2 537,365.6"/><polygon fill="#bd7a62" points="565.8,356.1 575.4,356.1 585,365.6 575.4,375.2 565.8,365.6"/><polygon fill="#bd7961" points="594.6,356.1 604.2,356.1 613.7,365.6 604.2,375.2 594.6,365.6"/><polygon fill="#bc7861" points="623.3,356.1 632.9,356.1 642.5,365.6 632.9,375.2 623.3,365.6"/><polygon fill="#bc7860" points="652.1,356.1 661.7,356.1 671.3,365.6 661.7,375.2 652.1,365.6"/><polygon fill="#bc775f" points="680.9,356.1 690.4,356.1 700,365.6 690.4,375.2 680.9,365.6"/><polygon fill="#bc765f" points="709.6,356.1 719.2,356.1 728.8,365.6 719.2,375.2 709.6,365.6"/><polygon fill="#bc765e" points="738.4,356.1 748,356.1 757.6,365.6 748,375.2 738.4,365.6"/><polygon fill="#bc755d" points="767.1,356.1 776.7,356.1 786.3,365.6 776.7,375.2 767.1,365.6"/><polygon fill="#bb745d" points="795.9,356.1 805.5,356.1 815.1,365.6 805.5,375.2 795.9,365.6"/><polygon fill="#bb735c" points="824.7,356.1 834.3,356.1 843.9,365.6 834.3,375.2 824.7,365.6"/><polygon fill="#bb735b" points="853.4,356.1 863,356.1 872.6,365.6 863,375.2 853.4,365.6"/><polygon fill="#bb725b" points="882.2,356.1 891.8,356.1 901.4,365.6 891.8,375.2 882.2,365.6"/><polygon fill="#bb715a" points="911,356.1 920.6,356.1 930.1,365.6 920.6,375.2 911,365.6"/><polygon fill="#ba7159" points="939.7,356.1 949.3,356.1 958.9,365.6 949.3,375.2 939.7,365.6"/><polygon fill="#be8770" points="489.1,384.8 498.7,375.2 508.3,375.2 508.3,384.8 498.7,394.4"/><polygon fill="#be866f" points="517.9,384.8 527.4,375.2 537,375.2 537,384.8 527.4,394.4"/><polygon fill="#be856e" points="546.6,384.8 556.2,375.2 565.8,375.2 565.8,384.8 556.2,394.4"/><polygon fill="#be856e" points="575.4,384.8 585,375.2 594.6,375.2 594.6,384.8 585,394.4"/><polygon fill="#be846d" points="604.2,384.8 613.7,375.2 623.3,375.2 623.3,384.8 613.7,394.4"/><polygon fill="#be836c" points="632.9,384.8 642.5,375.2 652.1,375.2 652.1,384.8 642.5,394.4"/><polygon fill="#be836c" points="661.7,384.8 671.3,375.2 680.9,375.2 680.9,384.8 671.3,394.4"/><polygon fill="#be826b" points="690.4,384.8 700,375.2 709.6,375.2 709.6,384.8 700,394.4"/><polygon fill="#be826a" points="719.2,384.8 728.8,375.2 738.4,375.2 738.4,384.8 728.8,394.4"/><polygon fill="#be8169" points="748,384.8 757.6,375.2 767.1,375.2 767.1,384.8 757.6,394.4"/><polygon fill="#be8069" points="776.7,384.8 786.3,375.2 795.9,375.2 795.9,384.8 786.3,394.4"/><polygon fill="#be8068" points="805.5,384.8 815.1,375.2 824.7,375.2 824.7,384.8 815.1,394.4"/><polygon fill="#be7f67" points="834.3,384.8 843.9,375.2 853.4,375.2 853.4,384.8 843.9,394.4"/><polygon fill="#be7e67" points="863,384.8 872.6,375.2 882.2,375.2 882.2,384.8 872.6,394.4"/><polygon fill="#be7e66" points="891.8,384.8 901.4,375.2 911,375.2 911,384.8 901.4,394.4"/><polygon fill="#be7d65" points="920.6,384.8 930.1,375.2 939.7,375.2 939.7,384.8 930.1,394.4"/><polygon fill="#bd7c65" points="949.3,384.8 958.9,375.2 958.9,394.4"/><polygon fill="#be907b" points="489.1,394.4 498.7,404 489.1,413.6"/><polygon fill="#be907b" points="508.3,394.4 517.9,394.4 527.4,404 517.9,413.6 508.3,404"/><polygon fill="#be8f7a" points="537,394.4 546.6,394.4 556.2,404 546.6,413.6 537,404"/><polygon fill="#be8f79" points="565.8,394.4 575.4,394.4 585,404 575.4,413.6 565.8,404"/><polygon fill="#be8e79" points="594.6,394.4 604.2,394.4 613.7,404 604.2,413.6 594.6,404"/><polygon fill="#be8d78" points="623.3,394.4 632.9,394.4 642.5,404 632.9,413.6 623.3,404"/><polygon fill="#be8d77" points="652.1,394.4 661.7,394.4 671.3,404 661.7,413.6 652.1,404"/><polygon fill="#be8c77" points="680.9,394.4 690.4,394.4 700,404 690.4,413.6 680.9,404"/><polygon fill="#be8c76" points="709.6,394.4 719.2,394.4 728.8,404 719.2,413.6 709.6,404"/><polygon fill="#be8b75" points="738.4,394.4 748,394.4 757.6,404 748,413.6 738.4,404"/><polygon fill="#be8b75" points="767.1,394.4 776.7,394.4 786.3,404 776.7,413.6 767.1,404"/><polygon fill="#be8a74" points="795.9,394.4 805.5,394.4 815.1,404 805.5,413.6 795.9,404"/><polygon fill="#be8a73" points="824.7,394.4 834.3,394.4 843.9,404 834.3,413.6 824.7,404"/><polygon fill="#be8973" points="853.4,394.4 863,394.4 872.6,404 863,413.6 853.4,404"/><polygon fill="#be8872" points="882.2,394.4 891.8,394.4 901.4,404 891.8,413.6 882.2,404"/><polygon fill="#be8871" points="911,394.4 920.6,394.4 930.1,404 920.6,413.6 911,404"/><polygon fill="#be8771" points="939.7,394.4 949.3,394.4 958.9,404 949.3,413.6 939.7,404"/><polygon fill="#bc9988" points="489.1,423.2 498.7,413.6 508.3,413.6 508.3,423.2 498.7,432.8"/><polygon fill="#bc9887" points="517.9,423.2 527.4,413.6 537,413.6 537,423.2 527.4,432.8"/><polygon fill="#bc9886" points="546.6,423.2 556.2,413.6 565.8,413.6 565.8,423.2 556.2,432.8"/><polygon fill="#bd9786" points="575.4,423.2 585,413.6 594.6,413.6 594.6,423.2 585,432.8"/><polygon fill="#bd9785" points="604.2,423.2 613.7,413.6 623.3,413.6 623.3,423.2 613.7,432.8"/><polygon fill="#bd9684" points="632.9,423.2 642.5,413.6 652.1,413.6 652.1,423.2 642.5,432.8"/><polygon fill="#bd9683" points="661.7,423.2 671.3,413.6 680.9,413.6 680.9,423.2 671.3,432.8"/><polygon fill="#bd9583" points="690.4,423.2 700,413.6 709.6,413.6 709.6,423.2 700,432.8"/><polygon fill="#bd9582" points="719.2,423.2 728.8,413.6 738.4,413.6 738.4,423.2 728.8,432.8"/><polygon fill="#bd9481" points="748,423.2 757.6,413.6 767.1,413.6 767.1,423.2 757.6,432.8"/><polygon fill="#bd9481" points="776.7,423.2 786.3,413.6 795.9,413.6 795.9,423.2 786.3,432.8"/><polygon fill="#bd9380" points="805.5,423.2 815.1,413.6 824.7,413.6 824.7,423.2 815.1,432.8"/><polygon fill="#be937f" points="834.3,423.2 843.9,413.6 853.4,413.6 853.4,423.2 843.9,432.8"/><polygon fill="#be927e" points="863,423.2 872.6,413.6 882.2,413.6 882.2,423.2 872.6,432.8"/><polygon fill="#be927e" points="891.8,423.2 901.4,413.6 911,413.6 911,423.2 901.4,432.8"/><polygon fill="#be917d" points="920.6,423.2 930.1,413.6 939.7,413.6 939.7,423.2 930.1,432.8"/><polygon fill="#be917c" points="949.3,423.2 958.9,413.6 958.9,432.8"/><polygon fill="#b8a093" points="489.1,432.8 498.7,442.4 489.1,451.9"/><polygon fill="#b89f92" points="508.3,432.8 517.9,432.8 527.4,442.4 517.9,451.9 508.3,442.4"/><polygon fill="#b89f92" points="537,432.8 546.6,432.8 556.2,442.4 546.6,451.9 537,442.4"/><polygon fill="#b89f91" points="565.8,432.8 575.4,432.8 585,442.4 575.4,451.9 565.8,442.4"/><polygon fill="#b99e90" points="594.6,432.8 604.2,432.8 613.7,442.4 604.2,451.9 594.6,442.4"/><polygon fill="#b99e90" points="623.3,432.8 632.9,432.8 642.5,442.4 632.9,451.9 623.3,442.4"/><polygon fill="#b99d8f" points="652.1,432.8 661.7,432.8 671.3,442.4 661.7,451.9 652.1,442.4"/><polygon fill="#ba9d8e" points="680.9,432.8 690.4,432.8 700,442.4 690.4,451.9 680.9,442.4"/><polygon fill="#ba9d8e" points="709.6,432.8 719.2,432.8 728.8,442.4 719.2,451.9 709.6,442.4"/><polygon fill="#ba9c8d" points="738.4,432.8 748,432.8 757.6,442.4 748,451.9 738.4,442.4"/><polygon fill="#ba9c8c" points="767.1,432.8 776.7,432.8 786.3,442.4 776.7,451.9 767.1,442.4"/><polygon fill="#ba9b8c" points="795.9,432.8 805.5,432.8 815.1,442.4 805.5,451.9 795.9,442.4"/><polygon fill="#bb9b8b" points="824.7,432.8 834.3,432.8 843.9,442.4 834.3,451.9 824.7,442.4"/><polygon fill="#bb9a8a" points="853.4,432.8 863,432.8 872.6,442.4 863,451.9 853.4,442.4"/><polygon fill="#bb9a8a" points="882.2,432.8 891.8,432.8 901.4,442.4 891.8,451.9 882.2,442.4"/><polygon fill="#bb9989" points="911,432.8 920.6,432.8 930.1,442.4 920.6,451.9 911,442.4"/><polygon fill="#bc9988" points="939.7,432.8 949.3,432.8 958.9,442.4 949.3,451.9 939.7,442.4"/><polygon fill="#b2a59e" points="489.1,461.5 498.7,451.9 508.3,451.9 508.3,461.5 498.7,471.1"/><polygon fill="#b2a59e" points="517.9,461.5 527.4,451.9 537,451.9 537,461.5 527.4,471.1"/><polygon fill="#b3a59d" points="546.6,461.5 556.2,451.9 565.8,451.9 565.8,461.5 556.2,471.1"/><polygon fill="#b3a49c" points="575.4,461.5 585,451.9 594.6,451.9 594.6,461.5 585,471.1"/><polygon fill="#b3a49c" points="604.2,461.5 613.7,451.9 623.3,451.9 623.3,461.5 613.7,471.1"/><polygon fill="#b4a49b" points="632.9,461.5 642.5,451.9 652.1,451.9 652.1,461.5 642.5,471.1"/><polygon fill="#b4a49a" points="661.7,461.5 671.3,451.9 680.9,451.9 680.9,461.5 671.3,471.1"/><polygon fill="#b5a39a" points="690.4,461.5 700,451.9 709.6,451.9 709.6,461.5 700,471.1"/><polygon fill="#b5a399" points="719.2,461.5 728.8,451.9 738.4,451.9 738.4,461.5 728.8,471.1"/><polygon fill="#b5a398" points="748,461.5 757.6,451.9 767.1,451.9 767.1,461.5 757.6,471.1"/><polygon fill="#b6a298" points="776.7,461.5 786.3,451.9 795.9,451.9 795.9,461.5 786.3,471.1"/><polygon fill="#b6a297" points="805.5,461.5 815.1,451.9 824.7,451.9 824.7,461.5 815.1,471.1"/><polygon fill="#b6a296" points="834.3,461.5 843.9,451.9 853.4,451.9 853.4,461.5 843.9,471.1"/><polygon fill="#b7a196" points="863,461.5 872.6,451.9 882.2,451.9 882.2,461.5 872.6,471.1"/><polygon fill="#b7a195" points="891.8,461.5 901.4,451.9 911,451.9 911,461.5 901.4,471.1"/><polygon fill="#b7a194" points="920.6,461.5 930.1,451.9 939.7,451.9 939.7,461.5 930.1,471.1"/><polygon fill="#b7a094" points="949.3,461.5 958.9,451.9 958.9,471.1"/><polygon fill="#aaaaaa" points="489.1,471.1 498.7,480.7 489.1,480.7"/><polygon fill="#abaaa9" points="508.3,471.1 517.9,471.1 527.4,480.7 508.3,480.7"/><polygon fill="#aba9a8" points="537,471.1 546.6,471.1 556.2,480.7 537,480.7"/><polygon fill="#aca9a8" points="565.8,471.1 575.4,471.1 585,480.7 565.8,480.7"/><polygon fill="#aca9a7" points="594.6,471.1 604.2,471.1 613.7,480.7 594.6,480.7"/><polygon fill="#ada9a6" points="623.3,471.1 632.9,471.1 642.5,480.7 623.3,480.7"/><polygon fill="#ada8a6" points="652.1,471.1 661.7,471.1 671.3,480.7 652.1,480.7"/><polygon fill="#aea8a5" points="680.9,471.1 690.4,471.1 700,480.7 680.9,480.7"/><polygon fill="#aea8a4" points="709.6,471.1 719.2,471.1 728.8,480.7 709.6,480.7"/><polygon fill="#aea8a4" points="738.4,471.1 748,471.1 757.6,480.7 738.4,480.7"/><polygon fill="#afa7a3" points="767.1,471.1 776.7,471.1 786.3,480.7 767.1,480.7"/><polygon fill="#afa7a2" points="795.9,471.1 805.5,471.1 815.1,480.7 795.9,480.7"/><polygon fill="#b0a7a2" points="824.7,471.1 834.3,471.1 843.9,480.7 824.7,480.7"/><polygon fill="#b0a6a1" points="853.4,471.1 863,471.1 872.6,480.7 853.4,480.7"/><polygon fill="#b1a6a0" points="882.2,471.1 891.8,471.1 901.4,480.7 882.2,480.7"/><polygon fill="#b1a6a0" points="911,471.1 920.6,471.1 930.1,480.7 911,480.7"/><polygon fill="#b1a69f" points="939.7,471.1 949.3,471.1 958.9,480.7 939.7,480.7"/><polygon fill="#a3a8b2" points="489.1,490.3 498.7,490.3 489.1,499.9"/><polygon fill="#a3a8b2" points="508.3,490.3 527.4,490.3 517.9,499.9"/><polygon fill="#a4a9b1" points="537,490.3 556.2,490.3 546.6,499.9"/><polygon fill="#a4a9b1" points="565.8,490.3 585,490.3 575.4,499.9"/><polygon fill="#a5a9b0" points="594.6,490.3 613.7,490.3 604.2,499.9"/><polygon fill="#a5a9b0" points="623.3,490.3 642.5,490.3 632.9,499.9"/><polygon fill="#a5a9af" points="652.1,490.3 671.3,490.3 661.7,499.9"/><polygon fill="#a6a9af" points="680.9,490.3 700,490.3 690.4,499.9"/><polygon fill="#a6a9ae" points="709.6,490.3 728.8,490.3 719.2,499.9"/><polygon fill="#a7a9ae" points="738.4,490.3 757.6,490.3 748,499.9"/><polygon fill="#a7a9ad" points="767.1,490.3 786.3,490.3 776.7,499.9"/><polygon fill="#a8aaad" points="795.9,490.3 815.1,490.3 805.5,499.9"/><polygon fill="#a8aaac" points="824.7,490.3 843.9,490.3 834.3,499.9"/><polygon fill="#a9aaac" points="853.4,490.3 872.6,490.3 863,499.9"/><polygon fill="#a9aaab" points="882.2,490.3 901.4,490.3 891.8,499.9"/><polygon fill="#a9aaab" points="911,490.3 930.1,490.3 920.6,499.9"/><polygon fill="#aaaaaa" points="939.7,490.3 958.9,490.3 949.3,499.9"/><polygon fill="#9aa6b9" points="489.1,509.5 498.7,499.9 508.3,499.9 508.3,509.5 498.7,519.1"/><polygon fill="#9aa6b9" points="517.9,509.5 527.4,499.9 537,499.9 537,509.5 527.4,519.1"/><polygon fill="#9ba6b9" points="546.6,509.5 556.2,499.9 565.8,499.9 565.8,509.5 556.2,519.1"/><polygon fill="#9ba6b8" points="575.4,509.5 585,499.9 594.6,499.9 594.6,509.5 585,519.1"/><polygon fill="#9ca7b8" points="604.2,509.5 613.7,499.9 623.3,499.9 623.3,509.5 613.7,519.1"/><polygon fill="#9da7b8" points="632.9,509.5 642.5,499.9 652.1,499.9 652.1,509.5 642.5,519.1"/><polygon fill="#9da7b7" points="661.7,509.5 671.3,499.9 680.9,499.9 680.9,509.5 671.3,519.1"/><polygon fill="#9ea7b7" points="690.4,509.5 700,499.9 709.6,499.9 709.6,509.5 700,519.1"/><polygon fill="#9ea7b6" points="719.2,509.5 728.8,499.9 738.4,499.9 738.4,509.5 728.8,519.1"/><polygon fill="#9fa7b6" points="748,509.5 757.6,499.9 767.1,499.9 767.1,509.5 757.6,519.1"/><polygon fill="#9fa8b5" points="776.7,509.5 786.3,499.9 795.9,499.9 795.9,509.5 786.3,519.1"/><polygon fill="#a0a8b5" points="805.5,509.5 815.1,499.9 824.7,499.9 824.7,509.5 815.1,519.1"/><polygon fill="#a0a8b5" points="834.3,509.5 843.9,499.9 853.4,499.9 853.4,509.5 843.9,519.1"/><polygon fill="#a1a8b4" points="863,509.5 872.6,499.9 882.2,499.9 882.2,509.5 872.6,519.1"/><polygon fill="#a1a8b4" points="891.8,509.5 901.4,499.9 911,499.9 911,509.5 901.4,519.1"/><polygon fill="#a2a8b3" points="920.6,509.5 930.1,499.9 939.7,499.9 939.7,509.5 930.1,519.1"/><polygon fill="#a2a8b3" points="949.3,509.5 958.9,499.9 958.9,519.1"/><polygon fill="#90a1be" points="489.1,519.1 498.7,528.6 489.1,538.2"/><polygon fill="#91a2be" points="508.3,519.1 517.9,519.1 527.4,528.6 517.9,538.2 508.3,528.6"/><polygon fill="#91a2be" points="537,519.1 546.6,519.1 556.2,528.6 546.6,538.2 537,528.6"/><polygon fill="#92a2be" points="565.8,519.1 575.4,519.1 585,528.6 575.4,538.2 565.8,528.6"/><polygon fill="#92a3bd" points="594.6,519.1 604.2,519.1 613.7,528.6 604.2,538.2 594.6,528.6"/><polygon fill="#93a3bd" points="623.3,519.1 632.9,519.1 642.5,528.6 632.9,538.2 623.3,528.6"/><polygon fill="#94a3bd" points="652.1,519.1 661.7,519.1 671.3,528.6 661.7,538.2 652.1,528.6"/><polygon fill="#94a3bc" points="680.9,519.1 690.4,519.1 700,528.6 690.4,538.2 680.9,528.6"/><polygon fill="#95a4bc" points="709.6,519.1 719.2,519.1 728.8,528.6 719.2,538.2 709.6,528.6"/><polygon fill="#95a4bc" points="738.4,519.1 748,519.1 757.6,528.6 748,538.2 738.4,528.6"/><polygon fill="#96a4bc" points="767.1,519.1 776.7,519.1 786.3,528.6 776.7,538.2 767.1,528.6"/><polygon fill="#96a4bb" points="795.9,519.1 805.5,519.1 815.1,528.6 805.5,538.2 795.9,528.6"/><polygon fill="#97a5bb" points="824.7,519.1 834.3,519.1 843.9,528.6 834.3,538.2 824.7,528.6"/><polygon fill="#98a5bb" points="853.4,519.1 863,519.1 872.6,528.6 863,538.2 853.4,528.6"/><polygon fill="#98a5ba" points="882.2,519.1 891.8,519.1 901.4,528.6 891.8,538.2 882.2,528.6"/><polygon fill="#99a5ba" points="911,519.1 920.6,519.1 930.1,528.6 920.6,538.2 911,528.6"/><polygon fill="#99a6ba" points="939.7,519.1 949.3,519.1 958.9,528.6 949.3,538.2 939.7,528.6"/><polygon fill="#879bc2" points="489.1,547.8 498.7,538.2 508.3,538.2 508.3,547.8 498.7,557.4"/><polygon fill="#879cc2" points="517.9,547.8 527.4,538.2 537,538.2 537,547.8 527.4,557.4"/><polygon fill="#889cc2" points="546.6,547.8 556.2,538.2 565.8,538.2 565.8,547.8 556.2,557.4"/><polygon fill="#889cc2" points="575.4,547.8 585,538.2 594.6,538.2 594.6,547.8 585,557.4"/><polygon fill="#899dc2" points="604.2,547.8 613.7,538.2 623.3,538.2 623.3,547.8 613.7,557.4"/><polygon fill="#8a9dc1" points="632.9,547.8 642.5,538.2 652.1,538.2 652.1,547.8 642.5,557.4"/><polygon fill="#8a9ec1" points="661.7,547.8 671.3,538.2 680.9,538.2 680.9,547.8 671.3,557.4"/><polygon fill="#8b9ec1" points="690.4,547.8 700,538.2 709.6,538.2 709.6,547.8 700,557.4"/><polygon fill="#8b9ec1" points="719.2,547.8 728.8,538.2 738.4,538.2 738.4,547.8 728.8,557.4"/><polygon fill="#8c9fc0" points="748,547.8 757.6,538.2 767.1,538.2 767.1,547.8 757.6,557.4"/><polygon fill="#8c9fc0" points="776.7,547.8 786.3,538.2 795.9,538.2 795.9,547.8 786.3,557.4"/><polygon fill="#8da0c0" points="805.5,547.8 815.1,538.2 824.7,538.2 824.7,547.8 815.1,557.4"/><polygon fill="#8da0c0" points="834.3,547.8 843.9,538.2 853.4,538.2 853.4,547.8 843.9,557.4"/><polygon fill="#8ea0c0" points="863,547.8 872.6,538.2 882.2,538.2 882.2,547.8 872.6,557.4"/><polygon fill="#8fa1bf" points="891.8,547.8 901.4,538.2 911,538.2 911,547.8 901.4,557.4"/><polygon fill="#8fa1bf" points="920.6,547.8 930.1,538.2 939.7,538.2 939.7,547.8 930.1,557.4"/><polygon fill="#90a1bf" points="949.3,547.8 958.9,538.2 958.9,557.4"/><polygon fill="#7c94c4" points="489.1,557.4 498.7,567 489.1,576.6"/><polygon fill="#7d95c4" points="508.3,557.4 517.9,557.4 527.4,567 517.9,576.6 508.3,567"/><polygon fill="#7e95c4" points="537,557.4 546.6,557.4 556.2,567 546.6,576.6 537,567"/><polygon fill="#7e96c4" points="565.8,557.4 575.4,557.4 585,567 575.4,576.6 565.8,567"/><polygon fill="#7f96c4" points="594.6,557.4 604.2,557.4 613.7,567 604.2,576.6 594.6,567"/><polygon fill="#7f97c4" points="623.3,557.4 632.9,557.4 642.5,567 632.9,576.6 623.3,567"/><polygon fill="#8097c4" points="652.1,557.4 661.7,557.4 671.3,567 661.7,576.6 652.1,567"/><polygon fill="#8197c4" points="680.9,557.4 690.4,557.4 700,567 690.4,576.6 680.9,567"/><polygon fill="#8198c4" points="709.6,557.4 719.2,557.4 728.8,567 719.2,576.6 709.6,567"/><polygon fill="#8298c4" points="738.4,557.4 748,557.4 757.6,567 748,576.6 738.4,567"/><polygon fill="#8399c3" points="767.1,557.4 776.7,557.4 786.3,567 776.7,576.6 767.1,567"/><polygon fill="#8399c3" points="795.9,557.4 805.5,557.4 815.1,567 805.5,576.6 795.9,567"/><polygon fill="#8499c3" points="824.7,557.4 834.3,557.4 843.9,567 834.3,576.6 824.7,567"/><polygon fill="#849ac3" points="853.4,557.4 863,557.4 872.6,567 863,576.6 853.4,567"/><polygon fill="#859ac3" points="882.2,557.4 891.8,557.4 901.4,567 891.8,576.6 882.2,567"/><polygon fill="#869bc3" points="911,557.4 920.6,557.4 930.1,567 920.6,576.6 911,567"/><polygon fill="#869bc3" points="939.7,557.4 949.3,557.4 958.9,567 949.3,576.6 939.7,567"/><polygon fill="#728cc4" points="489.1,586.2 498.7,576.6 508.3,576.6 508.3,586.2 498.7,595.8"/><polygon fill="#738cc4" points="517.9,586.2 527.4,576.6 537,576.6 537,586.2 527.4,595.8"/><polygon fill="#738dc4" points="546.6,586.2 556.2,576.6 565.8,576.6 565.8,586.2 556.2,595.8"/><polygon fill="#748dc4" points="575.4,586.2 585,576.6 594.6,576.6 594.6,586.2 585,595.8"/><polygon fill="#748ec4" points="604.2,586.2 613.7,576.6 623.3,576.6 623.3,586.2 613.7,595.8"/><polygon fill="#758ec4" points="632.9,586.2 642.5,576.6 652.1,576.6 652.1,586.2 642.5,595.8"/><polygon fill="#768fc4" points="661.7,586.2 671.3,576.6 680.9,576.6 680.9,586.2 671.3,595.8"/><polygon fill="#768fc4" points="690.4,586.2 700,576.6 709.6,576.6 709.6,586.2 700,595.8"/><polygon fill="#7790c4" points="719.2,586.2 728.8,576.6 738.4,576.6 738.4,586.2 728.8,595.8"/><polygon fill="#7790c4" points="748,586.2 757.6,576.6 767.1,576.6 767.1,586.2 757.6,595.8"/><polygon fill="#7891c4" points="776.7,586.2 786.3,576.6 795.9,576.6 795.9,586.2 786.3,595.8"/><polygon fill="#7991c4" points="805.5,586.2 815.1,576.6 824.7,576.6 824.7,586.2 815.1,595.8"/><polygon fill="#7992c4" points="834.3,586.2 843.9,576.6 853.4,576.6 853.4,586.2 843.9,595.8"/><polygon fill="#7a92c4" points="863,586.2 872.6,576.6 882.2,576.6 882.2,586.2 872.6,595.8"/><polygon fill="#7b93c4" points="891.8,586.2 901.4,576.6 911,576.6 911,586.2 901.4,595.8"/><polygon fill="#7b93c4" points="920.6,586.2 930.1,576.6 939.7,576.6 939.7,586.2 930.1,595.8"/><polygon fill="#7c94c4" points="949.3,586.2 958.9,576.6 958.9,595.8"/><polygon fill="#6782c2" points="489.1,595.8 498.7,605.4 489.1,614.9"/><polygon fill="#6883c2" points="508.3,595.8 517.9,595.8 527.4,605.4 517.9,614.9 508.3,605.4"/><polygon fill="#6984c3" points="537,595.8 546.6,595.8 556.2,605.4 546.6,614.9 537,605.4"/><polygon fill="#6984c3" points="565.8,595.8 575.4,595.8 585,605.4 575.4,614.9 565.8,605.4"/><polygon fill="#6a85c3" points="594.6,595.8 604.2,595.8 613.7,605.4 604.2,614.9 594.6,605.4"/><polygon fill="#6b86c3" points="623.3,595.8 632.9,595.8 642.5,605.4 632.9,614.9 623.3,605.4"/><polygon fill="#6b86c3" points="652.1,595.8 661.7,595.8 671.3,605.4 661.7,614.9 652.1,605.4"/><polygon fill="#6c87c3" points="680.9,595.8 690.4,595.8 700,605.4 690.4,614.9 680.9,605.4"/><polygon fill="#6c87c4" points="709.6,595.8 719.2,595.8 728.8,605.4 719.2,614.9 709.6,605.4"/><polygon fill="#6d88c4" points="738.4,595.8 748,595.8 757.6,605.4 748,614.9 738.4,605.4"/><polygon fill="#6e88c4" points="767.1,595.8 776.7,595.8 786.3,605.4 776.7,614.9 767.1,605.4"/><polygon fill="#6e89c4" points="795.9,595.8 805.5,595.8 815.1,605.4 805.5,614.9 795.9,605.4"/><polygon fill="#6f89c4" points="824.7,595.8 834.3,595.8 843.9,605.4 834.3,614.9 824.7,605.4"/><polygon fill="#6f8ac4" points="853.4,595.8 863,595.8 872.6,605.4 863,614.9 853.4,605.4"/><polygon fill="#708ac4" points="882.2,595.8 891.8,595.8 901.4,605.4 891.8,614.9 882.2,605.4"/><polygon fill="#718bc4" points="911,595.8 920.6,595.8 930.1,605.4 920.6,614.9 911,605.4"/><polygon fill="#718bc4" points="939.7,595.8 949.3,595.8 958.9,605.4 949.3,614.9 939.7,605.4"/><polygon fill="#5d78bf" points="489.1,624.5 498.7,614.9 508.3,614.9 508.3,624.5 498.7,634.1"/><polygon fill="#5e79bf" points="517.9,624.5 527.4,614.9 537,614.9 537,624.5 527.4,634.1"/><polygon fill="#5e79bf" points="546.6,624.5 556.2,614.9 565.8,614.9 565.8,624.5 556.2,634.1"/><polygon fill="#5f7abf" points="575.4,624.5 585,614.9 594.6,614.9 594.6,624.5 585,634.1"/><polygon fill="#607ac0" points="604.2,624.5 613.7,614.9 623.3,614.9 623.3,624.5 613.7,634.1"/><polygon fill="#607bc0" points="632.9,624.5 642.5,614.9 652.1,614.9 652.1,624.5 642.5,634.1"/><polygon fill="#617cc0" points="661.7,624.5 671.3,614.9 680.9,614.9 680.9,624.5 671.3,634.1"/><polygon fill="#617cc0" points="690.4,624.5 700,614.9 709.6,614.9 709.6,624.5 700,634.1"/><polygon fill="#627dc0" points="719.2,624.5 728.8,614.9 738.4,614.9 738.4,624.5 728.8,634.1"/><polygon fill="#637ec1" points="748,624.5 757.6,614.9 767.1,614.9 767.1,624.5 757.6,634.1"/><polygon fill="#637ec1" points="776.7,624.5 786.3,614.9 795.9,614.9 795.9,624.5 786.3,634.1"/><polygon fill="#647fc1" points="805.5,624.5 815.1,614.9 824.7,614.9 824.7,624.5 815.1,634.1"/><polygon fill="#647fc1" points="834.3,624.5 843.9,614.9 853.4,614.9 853.4,624.5 843.9,634.1"/><polygon fill="#6580c2" points="863,624.5 872.6,614.9 882.2,614.9 882.2,624.5 872.6,634.1"/><polygon fill="#6681c2" points="891.8,624.5 901.4,614.9 911,614.9 911,624.5 901.4,634.1"/><polygon fill="#6681c2" points="920.6,624.5 930.1,614.9 939.7,614.9 939.7,624.5 930.1,634.1"/><polygon fill="#6782c2" points="949.3,624.5 958.9,614.9 958.9,634.1"/><polygon fill="#536db9" points="489.1,634.1 498.7,643.7 489.1,653.3"/><polygon fill="#536dba" points="508.3,634.1 517.9,634.1 527.4,643.7 517.9,653.3 508.3,643.7"/><polygon fill="#546eba" points="537,634.1 546.6,634.1 556.2,643.7 546.6,653.3 537,643.7"/><polygon fill="#546fba" points="565.8,634.1 575.4,634.1 585,643.7 575.4,653.3 565.8,643.7"/><polygon fill="#556fbb" points="594.6,634.1 604.2,634.1 613.7,643.7 604.2,653.3 594.6,643.7"/><polygon fill="#5670bb" points="623.3,634.1 632.9,634.1 642.5,643.7 632.9,653.3 623.3,643.7"/><polygon fill="#5671bb" points="652.1,634.1 661.7,634.1 671.3,643.7 661.7,653.3 652.1,643.7"/><polygon fill="#5771bc" points="680.9,634.1 690.4,634.1 700,643.7 690.4,653.3 680.9,643.7"/><polygon fill="#5872bc" points="709.6,634.1 719.2,634.1 728.8,643.7 719.2,653.3 709.6,643.7"/><polygon fill="#5873bc" points="738.4,634.1 748,634.1 757.6,643.7 748,653.3 738.4,643.7"/><polygon fill="#5973bd" points="767.1,634.1 776.7,634.1 786.3,643.7 776.7,653.3 767.1,643.7"/><polygon fill="#5974bd" points="795.9,634.1 805.5,634.1 815.1,643.7 805.5,653.3 795.9,643.7"/><polygon fill="#5a75bd" points="824.7,634.1 834.3,634.1 843.9,643.7 834.3,653.3 824.7,643.7"/><polygon fill="#5b75be" points="853.4,634.1 863,634.1 872.6,643.7 863,653.3 853.4,643.7"/><polygon fill="#5b76be" points="882.2,634.1 891.8,634.1 901.4,643.7 891.8,653.3 882.2,643.7"/><polygon fill="#5c77be" points="911,634.1 920.6,634.1 930.1,643.7 920.6,653.3 911,643.7"/><polygon fill="#5c77be" points="939.7,634.1 949.3,634.1 958.9,643.7 949.3,653.3 939.7,643.7"/><polygon fill="#4961b2" points="489.1,662.9 498.7,653.3 508.3,653.3 508.3,662.9 498.7,672.5"/><polygon fill="#4a62b3" points="517.9,662.9 527.4,653.3 537,653.3 537,662.9 527.4,672.5"/><polygon fill="#4a63b3" points="546.6,662.9 556.2,653.3 565.8,653.3 565.8,662.9 556.2,672.5"/><polygon fill="#4b63b4" points="575.4,662.9 585,653.3 594.6,653.3 594.6,662.9 585,672.5"/><polygon fill="#4b64b4" points="604.2,662.9 613.7,653.3 623.3,653.3 623.3,662.9 613.7,672.5"/><polygon fill="#4c65b5" points="632.9,662.9 642.5,653.3 652.1,653.3 652.1,662.9 642.5,672.5"/><polygon fill="#4d65b5" points="661.7,662.9 671.3,653.3 680.9,653.3 680.9,662.9 671.3,672.5"/><polygon fill="#4d66b5" points="690.4,662.9 700,653.3 709.6,653.3 709.6,662.9 700,672.5"/><polygon fill="#4e67b6" points="719.2,662.9 728.8,653.3 738.4,653.3 738.4,662.9 728.8,672.5"/><polygon fill="#4e67b6" points="748,662.9 757.6,653.3 767.1,653.3 767.1,662.9 757.6,672.5"/><polygon fill="#4f68b6" points="776.7,662.9 786.3,653.3 795.9,653.3 795.9,662.9 786.3,672.5"/><polygon fill="#4f69b7" points="805.5,662.9 815.1,653.3 824.7,653.3 824.7,662.9 815.1,672.5"/><polygon fill="#5069b7" points="834.3,662.9 843.9,653.3 853.4,653.3 853.4,662.9 843.9,672.5"/><polygon fill="#506ab8" points="863,662.9 872.6,653.3 882.2,653.3 882.2,662.9 872.6,672.5"/><polygon fill="#516bb8" points="891.8,662.9 901.4,653.3 911,653.3 911,662.9 901.4,672.5"/><polygon fill="#526bb8" points="920.6,662.9 930.1,653.3 939.7,653.3 939.7,662.9 930.1,672.5"/><polygon fill="#526cb9" points="949.3,662.9 958.9,653.3 958.9,672.5"/><polygon fill="#3f55a9" points="489.1,672.5 498.7,682.1 489.1,691.6"/><polygon fill="#3f55aa" points="508.3,672.5 517.9,672.5 527.4,682.1 517.9,691.6 508.3,682.1"/><polygon fill="#4056aa" points="537,672.5 546.6,672.5 556.2,682.1 546.6,691.6 537,682.1"/><polygon fill="#4157ab" points="565.8,672.5 575.4,672.5 585,682.1 575.4,691.6 565.8,682.1"/><polygon fill="#4158ab" points="594.6,672.5 604.2,672.5 613.7,682.1 604.2,691.6 594.6,682.1"/><polygon fill="#4258ac" points="623.3,672.5 632.9,672.5 642.5,682.1 632.9,691.6 623.3,682.1"/><polygon fill="#4259ac" points="652.1,672.5 661.7,672.5 671.3,682.1 661.7,691.6 652.1,682.1"/><polygon fill="#435aad" points="680.9,672.5 690.4,672.5 700,682.1 690.4,691.6 680.9,682.1"/><polygon fill="#435bae" points="709.6,672.5 719.2,672.5 728.8,682.1 719.2,691.6 709.6,682.1"/><polygon fill="#445bae" points="738.4,672.5 748,672.5 757.6,682.1 748,691.6 738.4,682.1"/><polygon fill="#455caf" points="767.1,672.5 776.7,672.5 786.3,682.1 776.7,691.6 767.1,682.1"/><polygon fill="#455daf" points="795.9,672.5 805.5,672.5 815.1,682.1 805.5,691.6 795.9,682.1"/><polygon fill="#465db0" points="824.7,672.5 834.3,672.5 843.9,682.1 834.3,691.6 824.7,682.1"/><polygon fill="#465eb0" points="853.4,672.5 863,672.5 872.6,682.1 863,691.6 853.4,682.1"/><polygon fill="#475fb1" points="882.2,672.5 891.8,672.5 901.4,682.1 891.8,691.6 882.2,682.1"/><polygon fill="#4860b1" points="911,672.5 920.6,672.5 930.1,682.1 920.6,691.6 911,682.1"/><polygon fill="#4860b2" points="939.7,672.5 949.3,672.5 958.9,682.1 949.3,691.6 939.7,682.1"/><polygon fill="#36489f" points="489.1,701.2 498.7,691.6 508.3,691.6 508.3,701.2 498.7,710.8"/><polygon fill="#3649a0" points="517.9,701.2 527.4,691.6 537,691.6 537,701.2 527.4,710.8"/><polygon fill="#3749a0" points="546.6,701.2 556.2,691.6 565.8,691.6 565.8,701.2 556.2,710.8"/><polygon fill="#374aa1" points="575.4,701.2 585,691.6 594.6,691.6 594.6,701.2 585,710.8"/><polygon fill="#384ba2" points="604.2,701.2 613.7,691.6 623.3,691.6 623.3,701.2 613.7,710.8"/><polygon fill="#384ca2" points="632.9,701.2 642.5,691.6 652.1,691.6 652.1,701.2 642.5,710.8"/><polygon fill="#394da3" points="661.7,701.2 671.3,691.6 680.9,691.6 680.9,701.2 671.3,710.8"/><polygon fill="#394da3" points="690.4,701.2 700,691.6 709.6,691.6 709.6,701.2 700,710.8"/><polygon fill="#3a4ea4" points="719.2,701.2 728.8,691.6 738.4,691.6 738.4,701.2 728.8,710.8"/><polygon fill="#3b4fa5" points="748,701.2 757.6,691.6 767.1,691.6 767.1,701.2 757.6,710.8"/><polygon fill="#3b50a5" points="776.7,701.2 786.3,691.6 795.9,691.6 795.9,701.2 786.3,710.8"/><polygon fill="#3c50a6" points="805.5,701.2 815.1,691.6 824.7,691.6 824.7,701.2 815.1,710.8"/><polygon fill="#3c51a6" points="834.3,701.2 843.9,691.6 853.4,691.6 853.4,701.2 843.9,710.8"/><polygon fill="#3d52a7" points="863,701.2 872.6,691.6 882.2,691.6 882.2,701.2 872.6,710.8"/><polygon fill="#3d53a7" points="891.8,701.2 901.4,691.6 911,691.6 911,701.2 901.4,710.8"/><polygon fill="#3e53a8" points="920.6,701.2 930.1,691.6 939.7,691.6 939.7,701.2 930.1,710.8"/><polygon fill="#3e54a9" points="949.3,701.2 958.9,691.6 958.9,710.8"/><polygon fill="#2d3b94" points="489.1,710.8 498.7,720.4 489.1,720.4"/><polygon fill="#2e3b95" points="508.3,710.8 517.9,710.8 527.4,720.4 508.3,720.4"/><polygon fill="#2e3c95" points="537,710.8 546.6,710.8 556.2,720.4 537,720.4"/><polygon fill="#2f3d96" points="565.8,710.8 575.4,710.8 585,720.4 565.8,720.4"/><polygon fill="#2f3e97" points="594.6,710.8 604.2,710.8 613.7,720.4 594.6,720.4"/><polygon fill="#303e97" points="623.3,710.8 632.9,710.8 642.5,720.4 623.3,720.4"/><polygon fill="#303f98" points="652.1,710.8 661.7,710.8 671.3,720.4 652.1,720.4"/><polygon fill="#314099" points="680.9,710.8 690.4,710.8 700,720.4 680.9,720.4"/><polygon fill="#314199" points="709.6,710.8 719.2,710.8 728.8,720.4 709.6,720.4"/><polygon fill="#32429a" points="738.4,710.8 748,710.8 757.6,720.4 738.4,720.4"/><polygon fill="#32429b" points="767.1,710.8 776.7,710.8 786.3,720.4 767.1,720.4"/><polygon fill="#33439b" points="795.9,710.8 805.5,710.8 815.1,720.4 795.9,720.4"/><polygon fill="#33449c" points="824.7,710.8 834.3,710.8 843.9,720.4 824.7,720.4"/><polygon fill="#34459d" points="853.4,710.8 863,710.8 872.6,720.4 853.4,720.4"/><polygon fill="#34459d" points="882.2,710.8 891.8,710.8 901.4,720.4 882.2,720.4"/><polygon fill="#35469e" points="911,710.8 920.6,710.8 930.1,720.4 911,720.4"/><polygon fill="#35479e" points="939.7,710.8 949.3,710.8 958.9,720.4 939.7,720.4"/></g>
<g><path fill="#c22c30" d="M488 250h2v2h-2zM498 250h2v2h-2zM488 259h2v2h-2z"/><path fill="#c12a30" d="M507 250h2v2h-2zM517 250h2v2h-2zM526 250h2v2h-2zM517 259h2v2h-2z"/><path fill="#c0282f" d="M536 250h2v2h-2zM546 250h2v2h-2zM555 250h2v2h-2zM546 259h2v2h-2z"/><path fill="#bf262e" d="M565 250h2v2h-2zM574 250h2v2h-2zM584 250h2v2h-2zM574 259h2v2h-2z"/><path fill="#be232e" d="M594 250h2v2h-2zM603 250h2v2h-2zM613 250h2v2h-2zM603 259h2v2h-2z"/><path fill="#be212d" d="M622 250h2v2h-2zM632 250h2v2h-2zM642 250h2v2h-2zM632 259h2v2h-2z"/><path fill="#bd1e2d" d="M651 250h2v2h-2zM661 250h2v2h-2zM670 250h2v2h-2zM661 259h2v2h-2z"/><path fill="#bc1c2c" d="M680 250h2v2h-2zM689 250h2v2h-2zM699 250h2v2h-2zM689 259h2v2h-2z"/><path fill="#bb192b" d="M709 250h2v2h-2zM718 250h2v2h-2zM728 250h2v2h-2zM718 259h2v2h-2z"/><path fill="#ba162b" d="M737 250h2v2h-2zM747 250h2v2h-2zM757 250h2v2h-2zM747 259h2v2h-2z"/><path fill="#b9142a" d="M766 250h2v2h-2zM776 250h2v2h-2zM785 250h2v2h-2zM776 259h2v2h-2z"/><path fill="#b81129" d="M795 250h2v2h-2zM804 250h2v2h-2zM814 250h2v2h-2zM804 259h2v2h-2z"/><path fill="#b70e29" d="M824 250h2v2h-2zM833 250h2v2h-2zM843 250h2v2h-2zM833 259h2v2h-2z"/><path fill="#b70c28" d="M852 250h2v2h-2zM862 250h2v2h-2zM872 250h2v2h-2zM862 259h2v2h-2z"/><path fill="#b60927" d="M881 250h2v2h-2zM891 250h2v2h-2zM900 250h2v2h-2zM891 259h2v2h-2z"/><path fill="#b50727" d="M910 250h2v2h-2zM920 250h2v2h-2zM929 250h2v2h-2zM920 259h2v2h-2z"/><path fill="#b40426" d="M939 250h2v2h-2zM948 250h2v2h-2zM958 250h2v2h-2zM948 259h2v2h-2z"/><path fill="#cf453c" d="M498 259h2v2h-2zM507 259h2v2h-2zM488 269h2v2h-2zM498 269h2v2h-2zM507 269h2v2h-2zM498 278h2v2h-2z"/><path fill="#ce443b" d="M526 259h2v2h-2zM536 259h2v2h-2zM517 269h2v2h-2zM526 269h2v2h-2zM536 269h2v2h-2zM526 278h2v2h-2z"/><path fill="#cd423a" d="M555 259h2v2h-2zM565 259h2v2h-2zM546 269h2v2h-2zM555 269h2v2h-2zM565 269h2v2h-2zM555 278h2v2h-2z"/><path fill="#cd413a" d="M584 259h2v2h-2zM594 259h2v2h-2zM574 269h2v2h-2zM584 269h2v2h-2zM594 269h2v2h-2zM584 278h2v2h-2z"/><path fill="#cc4039" d="M613 259h2v2h-2zM622 259h2v2h-2zM603 269h2v2h-2zM613 269h2v2h-2zM622 269h2v2h-2zM613 278h2v2h-2z"/><path fill="#cb3f38" d="M642 259h2v2h-2zM651 259h2v2h-2zM632 269h2v2h-2zM642 269h2v2h-2zM651 269h2v2h-2zM642 278h2v2h-2z"/><path fill="#cb3d38" d="M670 259h2v2h-2zM680 259h2v2h-2zM661 269h2v2h-2zM670 269h2v2h-2zM680 269h2v2h-2zM670 278h2v2h-2z"/><path fill="#ca3c37" d="M699 259h2v2h-2zM709 259h2v2h-2zM689 269h2v2h-2zM699 269h2v2h-2zM709 269h2v2h-2zM699 278h2v2h-2z"/><path fill="#c93a36" d="M728 259h2v2h-2zM737 259h2v2h-2zM718 269h2v2h-2zM728 269h2v2h-2zM737 269h2v2h-2zM728 278h2v2h-2z"/><path fill="#c83836" d="M757 259h2v2h-2zM766 259h2v2h-2zM747 269h2v2h-2zM757 269h2v2h-2zM766 269h2v2h-2zM757 278h2v2h-2z"/><path fill="#c73735" d="M785 259h2v2h-2zM795 259h2v2h-2zM776 269h2v2h-2zM785 269h2v2h-2zM795 269h2v2h-2zM785 278h2v2h-2z"/><path fill="#c73534" d="M814 259h2v2h-2zM824 259h2v2h-2zM804 269h2v2h-2zM814 269h2v2h-2zM824 269h2v2h-2zM814 278h2v2h-2z"/><path fill="#c63434" d="M843 259h2v2h-2zM852 259h2v2h-2zM833 269h2v2h-2zM843 269h2v2h-2zM852 269h2v2h-2zM843 278h2v2h-2z"/><path fill="#c53233" d="M872 259h2v2h-2zM881 259h2v2h-2zM862 269h2v2h-2zM872 269h2v2h-2zM881 269h2v2h-2zM872 278h2v2h-2z"/><path fill="#c43032" d="M900 259h2v2h-2zM910 259h2v2h-2zM891 269h2v2h-2zM900 269h2v2h-2zM910 269h2v2h-2zM900 278h2v2h-2z"/><path fill="#c32f32" d="M929 259h2v2h-2zM939 259h2v2h-2zM920 269h2v2h-2zM929 269h2v2h-2zM939 269h2v2h-2zM929 278h2v2h-2z"/><path fill="#c32d31" d="M958 259h2v2h-2zM948 269h2v2h-2zM958 269h2v2h-2zM958 278h2v2h-2z"/><path fill="#db5a49" d="M488 278h2v2h-2zM488 288h2v2h-2zM498 288h2v2h-2zM488 298h2v2h-2z"/><path fill="#da5948" d="M507 278h2v2h-2zM517 278h2v2h-2zM507 288h2v2h-2zM517 288h2v2h-2zM526 288h2v2h-2zM517 298h2v2h-2z"/><path fill="#d95847" d="M536 278h2v2h-2zM546 278h2v2h-2zM536 288h2v2h-2zM546 288h2v2h-2zM555 288h2v2h-2zM546 298h2v2h-2z"/><path fill="#d95747" d="M565 278h2v2h-2zM574 278h2v2h-2zM565 288h2v2h-2zM574 288h2v2h-2zM584 288h2v2h-2zM574 298h2v2h-2z"/><path fill="#d85546" d="M594 278h2v2h-2zM603 278h2v2h-2zM594 288h2v2h-2zM603 288h2v2h-2zM613 288h2v2h-2zM603 298h2v2h-2z"/><path fill="#d75445" d="M622 278h2v2h-2zM632 278h2v2h-2zM622 288h2v2h-2zM632 288h2v2h-2zM642 288h2v2h-2zM632 298h2v2h-2z"/><path fill="#d75344" d="M651 278h2v2h-2zM661 278h2v2h-2zM651 288h2v2h-2zM661 288h2v2h-2zM670 288h2v2h-2zM661 298h2v2h-2z"/><path fill="#d65243" d="M680 278h2v2h-2zM689 278h2v2h-2zM680 288h2v2h-2zM689 288h2v2h-2zM699 288h2v2h-2zM689 298h2v2h-2z"/><path fill="#d55143" d="M709 278h2v2h-2zM718 278h2v2h-2zM709 288h2v2h-2zM718 288h2v2h-2zM728 288h2v2h-2zM718 298h2v2h-2z"/><path fill="#d55042" d="M737 278h2v2h-2zM747 278h2v2h-2zM737 288h2v2h-2zM747 288h2v2h-2zM757 288h2v2h-2zM747 298h2v2h-2z"/><path fill="#d44e41" d="M766 278h2v2h-2zM776 278h2v2h-2zM766 288h2v2h-2zM776 288h2v2h-2zM785 288h2v2h-2zM776 298h2v2h-2z"/><path fill="#d34d40" d="M795 278h2v2h-2zM804 278h2v2h-2zM795 288h2v2h-2zM804 288h2v2h-2zM814 288h2v2h-2zM804 298h2v2h-2z"/><path fill="#d34c40" d="M824 278h2v2h-2zM833 278h2v2h-2zM824 288h2v2h-2zM833 288h2v2h-2zM843 288h2v2h-2zM833 298h2v2h-2z"/><path fill="#d24a3f" d="M852 278h2v2h-2zM862 278h2v2h-2zM852 288h2v2h-2zM862 288h2v2h-2zM872 288h2v2h-2zM862 298h2v2h-2z"/><path fill="#d1493e" d="M881 278h2v2h-2zM891 278h2v2h-2zM881 288h2v2h-2zM891 288h2v2h-2zM900 288h2v2h-2zM891 298h2v2h-2z"/><path fill="#d0483d" d="M910 278h2v2h-2zM920 278h2v2h-2zM910 288h2v2h-2zM920 288h2v2h-2zM929 288h2v2h-2zM920 298h2v2h-2z"/><path fill="#d0463d" d="M939 278h2v2h-2zM948 278h2v2h-2zM939 288h2v2h-2zM948 288h2v2h-2zM958 288h2v2h-2zM948 298h2v2h-2z"/><path fill="#e46e56" d="M498 298h2v2h-2zM507 298h2v2h-2zM488 307h2v2h-2zM498 307h2v2h-2zM507 307h2v2h-2zM498 317h2v2h-2z"/><path fill="#e46d56" d="M526 298h2v2h-2zM536 298h2v2h-2zM517 307h2v2h-2zM526 307h2v2h-2zM536 307h2v2h-2zM526 317h2v2h-2z"/><path fill="#e36b55" d="M555 298h2v2h-2zM565 298h2v2h-2zM546 307h2v2h-2zM555 307h2v2h-2zM565 307h2v2h-2zM555 317h2v2h-2z"/><path fill="#e36a54" d="M584 298h2v2h-2zM594 298h2v2h-2zM574 307h2v2h-2zM584 307h2v2h-2zM594 307h2v2h-2zM584 317h2v2h-2z"/><path fill="#e26953" d="M613 298h2v2h-2zM622 298h2v2h-2zM603 307h2v2h-2zM613 307h2v2h-2zM622 307h2v2h-2zM613 317h2v2h-2z"/><path fill="#e16852" d="M642 298h2v2h-2zM651 298h2v2h-2zM632 307h2v2h-2zM642 307h2v2h-2zM651 307h2v2h-2zM642 317h2v2h-2z"/><path fill="#e16752" d="M670 298h2v2h-2zM680 298h2v2h-2zM661 307h2v2h-2zM670 307h2v2h-2zM680 307h2v2h-2zM670 317h2v2h-2z"/><path fill="#e06651" d="M699 298h2v2h-2zM709 298h2v2h-2zM689 307h2v2h-2zM699 307h2v2h-2zM709 307h2v2h-2zM699 317h2v2h-2z"/><path fill="#e06450" d="M728 298h2v2h-2zM737 298h2v2h-2zM718 307h2v2h-2zM728 307h2v2h-2zM737 307h2v2h-2zM728 317h2v2h-2z"/><path fill="#df634f" d="M757 298h2v2h-2zM766 298h2v2h-2zM747 307h2v2h-2zM757 307h2v2h-2zM766 307h2v2h-2zM757 317h2v2h-2z"/><path fill="#df624e" d="M785 298h2v2h-2zM795 298h2v2h-2zM776 307h2v2h-2zM785 307h2v2h-2zM795 307h2v2h-2zM785 317h2v2h-2z"/><path fill="#de614e" d="M814 298h2v2h-2zM824 298h2v2h-2zM804 307h2v2h-2zM814 307h2v2h-2zM824 307h2v2h-2zM814 317h2v2h-2z"/><path fill="#de604d" d="M843 298h2v2h-2zM852 298h2v2h-2zM833 307h2v2h-2zM843 307h2v2h-2zM852 307h2v2h-2zM843 317h2v2h-2z"/><path fill="#dd5f4c" d="M872 298h2v2h-2zM881 298h2v2h-2zM862 307h2v2h-2zM872 307h2v2h-2zM881 307h2v2h-2zM872 317h2v2h-2z"/><path fill="#dd5e4b" d="M900 298h2v2h-2zM910 298h2v2h-2zM891 307h2v2h-2zM900 307h2v2h-2zM910 307h2v2h-2zM900 317h2v2h-2z"/><path fill="#dc5c4b" d="M929 298h2v2h-2zM939 298h2v2h-2zM920 307h2v2h-2zM929 307h2v2h-2zM939 307h2v2h-2zM929 317h2v2h-2z"/><path fill="#db5b4a" d="M958 298h2v2h-2zM948 307h2v2h-2zM958 307h2v2h-2zM958 317h2v2h-2z"/><path fill="#ec8064" d="M488 317h2v2h-2zM488 326h2v2h-2zM498 326h2v2h-2zM488 336h2v2h-2z"/><path fill="#ec7f63" d="M507 317h2v2h-2zM517 317h2v2h-2zM507 326h2v2h-2zM517 326h2v2h-2zM526 326h2v2h-2zM517 336h2v2h-2z"/><path fill="#ec7e62" d="M536 317h2v2h-2zM546 317h2v2h-2zM536 326h2v2h-2zM546 326h2v2h-2zM555 326h2v2h-2zM546 336h2v2h-2z"/><path fill="#eb7d62" d="M565 317h2v2h-2zM574 317h2v2h-2zM565 326h2v2h-2zM574 326h2v2h-2zM584 326h2v2h-2zM574 336h2v2h-2z"/><path fill="#eb7c61" d="M594 317h2v2h-2zM603 317h2v2h-2zM594 326h2v2h-2zM603 326h2v2h-2zM613 326h2v2h-2zM603 336h2v2h-2z"/><path fill="#ea7b60" d="M622 317h2v2h-2zM632 317h2v2h-2zM622 326h2v2h-2zM632 326h2v2h-2zM642 326h2v2h-2zM632 336h2v2h-2z"/><path fill="#ea7a5f" d="M651 317h2v2h-2zM661 317h2v2h-2zM651 326h2v2h-2zM661 326h2v2h-2zM670 326h2v2h-2zM661 336h2v2h-2z"/><path fill="#e9795e" d="M680 317h2v2h-2zM689 317h2v2h-2zM680 326h2v2h-2zM689 326h2v2h-2zM699 326h2v2h-2zM689 336h2v2h-2z"/><path fill="#e9785e" d="M709 317h2v2h-2zM718 317h2v2h-2zM709 326h2v2h-2zM718 326h2v2h-2zM728 326h2v2h-2zM718 336h2v2h-2z"/><path fill="#e8775d" d="M737 317h2v2h-2zM747 317h2v2h-2zM737 326h2v2h-2zM747 326h2v2h-2zM757 326h2v2h-2zM747 336h2v2h-2z"/><path fill="#e8765c" d="M766 317h2v2h-2zM776 317h2v2h-2zM766 326h2v2h-2zM776 326h2v2h-2zM785 326h2v2h-2zM776 336h2v2h-2z"/><path fill="#e7745b" d="M795 317h2v2h-2zM804 317h2v2h-2zM795 326h2v2h-2zM804 326h2v2h-2zM814 326h2v2h-2zM804 336h2v2h-2z"/><path fill="#e7735a" d="M824 317h2v2h-2zM833 317h2v2h-2zM824 326h2v2h-2zM833 326h2v2h-2zM843 326h2v2h-2zM833 336h2v2h-2z"/><path fill="#e6725a" d="M852 317h2v2h-2zM862 317h2v2h-2zM852 326h2v2h-2zM862 326h2v2h-2zM872 326h2v2h-2zM862 336h2v2h-2z"/><path fill="#e67159" d="M881 317h2v2h-2zM891 317h2v2h-2zM881 326h2v2h-2zM891 326h2v2h-2zM900 326h2v2h-2zM891 336h2v2h-2z"/><path fill="#e57058" d="M910 317h2v2h-2zM920 317h2v2h-2zM910 326h2v2h-2zM920 326h2v2h-2zM929 326h2v2h-2zM920 336h2v2h-2z"/><path fill="#e56f57" d="M939 317h2v2h-2zM948 317h2v2h-2zM939 326h2v2h-2zM948 326h2v2h-2zM958 326h2v2h-2zM948 336h2v2h-2z"/><path fill="#f29173" d="M498 336h2v2h-2zM507 336h2v2h-2zM488 345h2v2h-2zM498 345h2v2h-2zM507 345h2v2h-2zM498 355h2v2h-2z"/><path fill="#f29072" d="M526 336h2v2h-2zM536 336h2v2h-2zM517 345h2v2h-2zM526 345h2v2h-2zM536 345h2v2h-2zM526 355h2v2h-2z"/><path fill="#f28f71" d="M555 336h2v2h-2zM565 336h2v2h-2zM546 345h2v2h-2zM555 345h2v2h-2zM565 345h2v2h-2zM555 355h2v2h-2z"/><path fill="#f18e70" d="M584 336h2v2h-2zM594 336h2v2h-2zM574 345h2v2h-2zM584 345h2v2h-2zM594 345h2v2h-2zM584 355h2v2h-2z"/><path fill="#f18e6f" d="M613 336h2v2h-2zM622 336h2v2h-2zM603 345h2v2h-2zM613 345h2v2h-2zM622 345h2v2h-2zM613 355h2v2h-2z"/><path fill="#f18d6f" d="M642 336h2v2h-2zM651 336h2v2h-2zM632 345h2v2h-2zM642 345h2v2h-2zM651 345h2v2h-2zM642 355h2v2h-2z"/><path fill="#f08c6e" d="M670 336h2v2h-2zM680 336h2v2h-2zM661 345h2v2h-2zM670 345h2v2h-2zM680 345h2v2h-2zM670 355h2v2h-2z"/><path fill="#f08a6d" d="M699 336h2v2h-2zM709 336h2v2h-2zM689 345h2v2h-2zM699 345h2v2h-2zM709 345h2v2h-2zM699 355h2v2h-2z"/><path fill="#f0896c" d="M728 336h2v2h-2zM737 336h2v2h-2zM718 345h2v2h-2zM728 345h2v2h-2zM737 345h2v2h-2zM728 355h2v2h-2z"/><path fill="#ef886b" d="M757 336h2v2h-2zM766 336h2v2h-2zM747 345h2v2h-2zM757 345h2v2h-2zM766 345h2v2h-2zM757 355h2v2h-2z"/><path fill="#ef876a" d="M785 336h2v2h-2zM795 336h2v2h-2zM776 345h2v2h-2zM785 345h2v2h-2zM795 345h2v2h-2zM785 355h2v2h-2z"/><path fill="#ef8669" d="M814 336h2v2h-2zM824 336h2v2h-2zM804 345h2v2h-2zM814 345h2v2h-2zM824 345h2v2h-2zM814 355h2v2h-2z"/><path fill="#ee8568" d="M843 336h2v2h-2zM852 336h2v2h-2zM833 345h2v2h-2zM843 345h2v2h-2zM852 345h2v2h-2zM843 355h2v2h-2z"/><path fill="#ee8468" d="M872 336h2v2h-2zM881 336h2v2h-2zM862 345h2v2h-2zM872 345h2v2h-2zM881 345h2v2h-2zM872 355h2v2h-2z"/><path fill="#ee8367" d="M900 336h2v2h-2zM910 336h2v2h-2zM891 345h2v2h-2zM900 345h2v2h-2zM910 345h2v2h-2zM900 355h2v2h-2z"/><path fill="#ed8266" d="M929 336h2v2h-2zM939 336h2v2h-2zM920 345h2v2h-2zM929 345h2v2h-2zM939 345h2v2h-2zM929 355h2v2h-2z"/><path fill="#ed8165" d="M958 336h2v2h-2zM948 345h2v2h-2zM958 345h2v2h-2zM958 355h2v2h-2z"/><path fill="#f6a182" d="M488 355h2v2h-2zM488 365h2v2h-2zM498 365h2v2h-2zM488 374h2v2h-2z"/><path fill="#f5a081" d="M507 355h2v2h-2zM517 355h2v2h-2zM507 365h2v2h-2zM517 365h2v2h-2zM526 365h2v2h-2zM517 374h2v2h-2z"/><path fill="#f59f80" d="M536 355h2v2h-2zM546 355h2v2h-2zM536 365h2v2h-2zM546 365h2v2h-2zM555 365h2v2h-2zM546 374h2v2h-2z"/><path fill="#f59e7f" d="M565 355h2v2h-2zM574 355h2v2h-2zM565 365h2v2h-2zM574 365h2v2h-2zM584 365h2v2h-2zM574 374h2v2h-2z"/><path fill="#f59d7e" d="M594 355h2v2h-2zM603 355h2v2h-2zM594 365h2v2h-2zM603 365h2v2h-2zM613 365h2v2h-2zM603 374h2v2h-2z"/><path fill="#f59c7d" d="M622 355h2v2h-2zM632 355h2v2h-2zM622 365h2v2h-2zM632 365h2v2h-2zM642 365h2v2h-2zM632 374h2v2h-2z"/><path fill="#f49c7d" d="M651 355h2v2h-2zM661 355h2v2h-2zM651 365h2v2h-2zM661 365h2v2h-2zM670 365h2v2h-2zM661 374h2v2h-2z"/><path fill="#f49b7c" d="M680 355h2v2h-2zM689 355h2v2h-2zM680 365h2v2h-2zM689 365h2v2h-2zM699 365h2v2h-2zM689 374h2v2h-2z"/><path fill="#f49a7b" d="M709 355h2v2h-2zM718 355h2v2h-2zM709 365h2v2h-2zM718 365h2v2h-2zM728 365h2v2h-2zM718 374h2v2h-2z"/><path fill="#f4997a" d="M737 355h2v2h-2zM747 355h2v2h-2zM737 365h2v2h-2zM747 365h2v2h-2zM757 365h2v2h-2zM747 374h2v2h-2z"/><path fill="#f49879" d="M766 355h2v2h-2zM776 355h2v2h-2zM766 365h2v2h-2zM776 365h2v2h-2zM785 365h2v2h-2zM776 374h2v2h-2z"/><path fill="#f39778" d="M795 355h2v2h-2zM804 355h2v2h-2zM795 365h2v2h-2zM804 365h2v2h-2zM814 365h2v2h-2zM804 374h2v2h-2z"/><path fill="#f39677" d="M824 355h2v2h-2zM833 355h2v2h-2zM824 365h2v2h-2zM833 365h2v2h-2zM843 365h2v2h-2zM833 374h2v2h-2z"/><path fill="#f39576" d="M852 355h2v2h-2zM862 355h2v2h-2zM852 365h2v2h-2zM862 365h2v2h-2zM872 365h2v2h-2zM862 374h2v2h-2z"/><path fill="#f39476" d="M881 355h2v2h-2zM891 355h2v2h-2zM881 365h2v2h-2zM891 365h2v2h-2zM900 365h2v2h-2zM891 374h2v2h-2z"/><path fill="#f29375" d="M910 355h2v2h-2zM920 355h2v2h-2zM910 365h2v2h-2zM920 365h2v2h-2zM929 365h2v2h-2zM920 374h2v2h-2z"/><path fill="#f29274" d="M939 355h2v2h-2zM948 355h2v2h-2zM939 365h2v2h-2zM948 365h2v2h-2zM958 365h2v2h-2zM948 374h2v2h-2z"/><path fill="#f7af91" d="M498 374h2v2h-2zM507 374h2v2h-2zM488 384h2v2h-2zM498 384h2v2h-2zM507 384h2v2h-2zM498 393h2v2h-2z"/><path fill="#f7ae90" d="M526 374h2v2h-2zM536 374h2v2h-2zM517 384h2v2h-2zM526 384h2v2h-2zM536 384h2v2h-2zM526 393h2v2h-2z"/><path fill="#f7ad8f" d="M555 374h2v2h-2zM565 374h2v2h-2zM546 384h2v2h-2zM555 384h2v2h-2zM565 384h2v2h-2zM555 393h2v2h-2z"/><path fill="#f7ac8f" d="M584 374h2v2h-2zM594 374h2v2h-2zM574 384h2v2h-2zM584 384h2v2h-2zM594 384h2v2h-2zM584 393h2v2h-2z"/><path fill="#f7ac8e" d="M613 374h2v2h-2zM622 374h2v2h-2zM603 384h2v2h-2zM613 384h2v2h-2zM622 384h2v2h-2zM613 393h2v2h-2z"/><path fill="#f7ab8d" d="M642 374h2v2h-2zM651 374h2v2h-2zM632 384h2v2h-2zM642 384h2v2h-2zM651 384h2v2h-2zM642 393h2v2h-2z"/><path fill="#f7aa8c" d="M670 374h2v2h-2zM680 374h2v2h-2zM661 384h2v2h-2zM670 384h2v2h-2zM680 384h2v2h-2zM670 393h2v2h-2z"/><path fill="#f7a98b" d="M699 374h2v2h-2zM709 374h2v2h-2zM689 384h2v2h-2zM699 384h2v2h-2zM709 384h2v2h-2zM699 393h2v2h-2z"/><path fill="#f7a88a" d="M728 374h2v2h-2zM737 374h2v2h-2zM718 384h2v2h-2zM728 384h2v2h-2zM737 384h2v2h-2zM728 393h2v2h-2z"/><path fill="#f7a889" d="M757 374h2v2h-2zM766 374h2v2h-2zM747 384h2v2h-2zM757 384h2v2h-2zM766 384h2v2h-2zM757 393h2v2h-2z"/><path fill="#f7a788" d="M785 374h2v2h-2zM795 374h2v2h-2zM776 384h2v2h-2zM785 384h2v2h-2zM795 384h2v2h-2zM785 393h2v2h-2z"/><path fill="#f7a687" d="M814 374h2v2h-2zM824 374h2v2h-2zM804 384h2v2h-2zM814 384h2v2h-2zM824 384h2v2h-2zM814 393h2v2h-2z"/><path fill="#f7a586" d="M843 374h2v2h-2zM852 374h2v2h-2zM833 384h2v2h-2zM843 384h2v2h-2zM852 384h2v2h-2zM843 393h2v2h-2z"/><path fill="#f7a485" d="M872 374h2v2h-2zM881 374h2v2h-2zM862 384h2v2h-2zM872 384h2v2h-2zM881 384h2v2h-2zM872 393h2v2h-2z"/><path fill="#f6a384" d="M900 374h2v2h-2zM910 374h2v2h-2zM891 384h2v2h-2zM900 384h2v2h-2zM910 384h2v2h-2zM900 393h2v2h-2z"/><path fill="#f6a283" d="M929 374h2v2h-2zM939 374h2v2h-2zM920 384h2v2h-2zM929 384h2v2h-2zM939 384h2v2h-2zM929 393h2v2h-2z"/><path fill="#f6a283" d="M958 374h2v2h-2zM948 384h2v2h-2zM958 384h2v2h-2zM958 393h2v2h-2z"/><path fill="#f7bba0" d="M488 393h2v2h-2zM488 403h2v2h-2zM498 403h2v2h-2zM488 413h2v2h-2z"/><path fill="#f7bb9f" d="M507 393h2v2h-2zM517 393h2v2h-2zM507 403h2v2h-2zM517 403h2v2h-2zM526 403h2v2h-2zM517 413h2v2h-2z"/><path fill="#f7ba9f" d="M536 393h2v2h-2zM546 393h2v2h-2zM536 403h2v2h-2zM546 403h2v2h-2zM555 403h2v2h-2zM546 413h2v2h-2z"/><path fill="#f7b99e" d="M565 393h2v2h-2zM574 393h2v2h-2zM565 403h2v2h-2zM574 403h2v2h-2zM584 403h2v2h-2zM574 413h2v2h-2z"/><path fill="#f7b89d" d="M594 393h2v2h-2zM603 393h2v2h-2zM594 403h2v2h-2zM603 403h2v2h-2zM613 403h2v2h-2zM603 413h2v2h-2z"/><path fill="#f7b89c" d="M622 393h2v2h-2zM632 393h2v2h-2zM622 403h2v2h-2zM632 403h2v2h-2zM642 403h2v2h-2zM632 413h2v2h-2z"/><path fill="#f7b79b" d="M651 393h2v2h-2zM661 393h2v2h-2zM651 403h2v2h-2zM661 403h2v2h-2zM670 403h2v2h-2zM661 413h2v2h-2z"/><path fill="#f7b69a" d="M680 393h2v2h-2zM689 393h2v2h-2zM680 403h2v2h-2zM689 403h2v2h-2zM699 403h2v2h-2zM689 413h2v2h-2z"/><path fill="#f7b599" d="M709 393h2v2h-2zM718 393h2v2h-2zM709 403h2v2h-2zM718 403h2v2h-2zM728 403h2v2h-2zM718 413h2v2h-2z"/><path fill="#f7b599" d="M737 393h2v2h-2zM747 393h2v2h-2zM737 403h2v2h-2zM747 403h2v2h-2zM757 403h2v2h-2zM747 413h2v2h-2z"/><path fill="#f7b498" d="M766 393h2v2h-2zM776 393h2v2h-2zM766 403h2v2h-2zM776 403h2v2h-2zM785 403h2v2h-2zM776 413h2v2h-2z"/><path fill="#f7b397" d="M795 393h2v2h-2zM804 393h2v2h-2zM795 403h2v2h-2zM804 403h2v2h-2zM814 403h2v2h-2zM804 413h2v2h-2z"/><path fill="#f7b396" d="M824 393h2v2h-2zM833 393h2v2h-2zM824 403h2v2h-2zM833 403h2v2h-2zM843 403h2v2h-2zM833 413h2v2h-2z"/><path fill="#f7b295" d="M852 393h2v2h-2zM862 393h2v2h-2zM852 403h2v2h-2zM862 403h2v2h-2zM872 403h2v2h-2zM862 413h2v2h-2z"/><path fill="#f7b194" d="M881 393h2v2h-2zM891 393h2v2h-2zM881 403h2v2h-2zM891 403h2v2h-2zM900 403h2v2h-2zM891 413h2v2h-2z"/><path fill="#f7b093" d="M910 393h2v2h-2zM920 393h2v2h-2zM910 403h2v2h-2zM920 403h2v2h-2zM929 403h2v2h-2zM920 413h2v2h-2z"/><path fill="#f7b092" d="M939 393h2v2h-2zM948 393h2v2h-2zM939 403h2v2h-2zM948 403h2v2h-2zM958 403h2v2h-2zM948 413h2v2h-2z"/><path fill="#f4c6b0" d="M498 413h2v2h-2zM507 413h2v2h-2zM488 422h2v2h-2zM498 422h2v2h-2zM507 422h2v2h-2zM498 432h2v2h-2z"/><path fill="#f4c6af" d="M526 413h2v2h-2zM536 413h2v2h-2zM517 422h2v2h-2zM526 422h2v2h-2zM536 422h2v2h-2zM526 432h2v2h-2z"/><path fill="#f5c5ae" d="M555 413h2v2h-2zM565 413h2v2h-2zM546 422h2v2h-2zM555 422h2v2h-2zM565 422h2v2h-2zM555 432h2v2h-2z"/><path fill="#f5c4ae" d="M584 413h2v2h-2zM594 413h2v2h-2zM574 422h2v2h-2zM584 422h2v2h-2zM594 422h2v2h-2zM584 432h2v2h-2z"/><path fill="#f5c4ad" d="M613 413h2v2h-2zM622 413h2v2h-2zM603 422h2v2h-2zM613 422h2v2h-2zM622 422h2v2h-2zM613 432h2v2h-2z"/><path fill="#f5c3ac" d="M642 413h2v2h-2zM651 413h2v2h-2zM632 422h2v2h-2zM642 422h2v2h-2zM651 422h2v2h-2zM642 432h2v2h-2z"/><path fill="#f5c2ab" d="M670 413h2v2h-2zM680 413h2v2h-2zM661 422h2v2h-2zM670 422h2v2h-2zM680 422h2v2h-2zM670 432h2v2h-2z"/><path fill="#f5c2aa" d="M699 413h2v2h-2zM709 413h2v2h-2zM689 422h2v2h-2zM699 422h2v2h-2zM709 422h2v2h-2zM699 432h2v2h-2z"/><path fill="#f6c1a9" d="M728 413h2v2h-2zM737 413h2v2h-2zM718 422h2v2h-2zM728 422h2v2h-2zM737 422h2v2h-2zM728 432h2v2h-2z"/><path fill="#f6c0a8" d="M757 413h2v2h-2zM766 413h2v2h-2zM747 422h2v2h-2zM757 422h2v2h-2zM766 422h2v2h-2zM757 432h2v2h-2z"/><path fill="#f6c0a7" d="M785 413h2v2h-2zM795 413h2v2h-2zM776 422h2v2h-2zM785 422h2v2h-2zM795 422h2v2h-2zM785 432h2v2h-2z"/><path fill="#f6bfa6" d="M814 413h2v2h-2zM824 413h2v2h-2zM804 422h2v2h-2zM814 422h2v2h-2zM824 422h2v2h-2zM814 432h2v2h-2z"/><path fill="#f6bfa5" d="M843 413h2v2h-2zM852 413h2v2h-2zM833 422h2v2h-2zM843 422h2v2h-2zM852 422h2v2h-2zM843 432h2v2h-2z"/><path fill="#f6bea4" d="M872 413h2v2h-2zM881 413h2v2h-2zM862 422h2v2h-2zM872 422h2v2h-2zM881 422h2v2h-2zM872 432h2v2h-2z"/><path fill="#f7bda3" d="M900 413h2v2h-2zM910 413h2v2h-2zM891 422h2v2h-2zM900 422h2v2h-2zM910 422h2v2h-2zM900 432h2v2h-2z"/><path fill="#f7bda2" d="M929 413h2v2h-2zM939 413h2v2h-2zM920 422h2v2h-2zM929 422h2v2h-2zM939 422h2v2h-2zM929 432h2v2h-2z"/><path fill="#f7bca1" d="M958 413h2v2h-2zM948 422h2v2h-2zM958 422h2v2h-2zM958 432h2v2h-2z"/><path fill="#efcfbf" d="M488 432h2v2h-2zM488 441h2v2h-2zM498 441h2v2h-2zM488 451h2v2h-2z"/><path fill="#efcfbe" d="M507 432h2v2h-2zM517 432h2v2h-2zM507 441h2v2h-2zM517 441h2v2h-2zM526 441h2v2h-2zM517 451h2v2h-2z"/><path fill="#efcebd" d="M536 432h2v2h-2zM546 432h2v2h-2zM536 441h2v2h-2zM546 441h2v2h-2zM555 441h2v2h-2zM546 451h2v2h-2z"/><path fill="#f0cebc" d="M565 432h2v2h-2zM574 432h2v2h-2zM565 441h2v2h-2zM574 441h2v2h-2zM584 441h2v2h-2zM574 451h2v2h-2z"/><path fill="#f0cdbb" d="M594 432h2v2h-2zM603 432h2v2h-2zM594 441h2v2h-2zM603 441h2v2h-2zM613 441h2v2h-2zM603 451h2v2h-2z"/><path fill="#f0cdbb" d="M622 432h2v2h-2zM632 432h2v2h-2zM622 441h2v2h-2zM632 441h2v2h-2zM642 441h2v2h-2zM632 451h2v2h-2z"/><path fill="#f1ccba" d="M651 432h2v2h-2zM661 432h2v2h-2zM651 441h2v2h-2zM661 441h2v2h-2zM670 441h2v2h-2zM661 451h2v2h-2z"/><path fill="#f1ccb9" d="M680 432h2v2h-2zM689 432h2v2h-2zM680 441h2v2h-2zM689 441h2v2h-2zM699 441h2v2h-2zM689 451h2v2h-2z"/><path fill="#f1cbb8" d="M709 432h2v2h-2zM718 432h2v2h-2zM709 441h2v2h-2zM718 441h2v2h-2zM728 441h2v2h-2zM718 451h2v2h-2z"/><path fill="#f2cbb7" d="M737 432h2v2h-2zM747 432h2v2h-2zM737 441h2v2h-2zM747 441h2v2h-2zM757 441h2v2h-2zM747 451h2v2h-2z"/><path fill="#f2cab6" d="M766 432h2v2h-2zM776 432h2v2h-2zM766 441h2v2h-2zM776 441h2v2h-2zM785 441h2v2h-2zM776 451h2v2h-2z"/><path fill="#f2cab5" d="M795 432h2v2h-2zM804 432h2v2h-2zM795 441h2v2h-2zM804 441h2v2h-2zM814 441h2v2h-2zM804 451h2v2h-2z"/><path fill="#f2c9b5" d="M824 432h2v2h-2zM833 432h2v2h-2zM824 441h2v2h-2zM833 441h2v2h-2zM843 441h2v2h-2zM833 451h2v2h-2z"/><path fill="#f3c8b4" d="M852 432h2v2h-2zM862 432h2v2h-2zM852 441h2v2h-2zM862 441h2v2h-2zM872 441h2v2h-2zM862 451h2v2h-2z"/><path fill="#f3c8b3" d="M881 432h2v2h-2zM891 432h2v2h-2zM881 441h2v2h-2zM891 441h2v2h-2zM900 441h2v2h-2zM891 451h2v2h-2z"/><path fill="#f3c7b2" d="M910 432h2v2h-2zM920 432h2v2h-2zM910 441h2v2h-2zM920 441h2v2h-2zM929 441h2v2h-2zM920 451h2v2h-2z"/><path fill="#f4c7b1" d="M939 432h2v2h-2zM948 432h2v2h-2zM939 441h2v2h-2zM948 441h2v2h-2zM958 441h2v2h-2zM948 451h2v2h-2z"/><path fill="#e7d7ce" d="M498 451h2v2h-2zM507 451h2v2h-2zM488 461h2v2h-2zM498 461h2v2h-2zM507 461h2v2h-2zM498 470h2v2h-2z"/><path fill="#e7d6cd" d="M526 451h2v2h-2zM536 451h2v2h-2zM517 461h2v2h-2zM526 461h2v2h-2zM536 461h2v2h-2zM526 470h2v2h-2z"/><path fill="#e8d6cc" d="M555 451h2v2h-2zM565 451h2v2h-2zM546 461h2v2h-2zM555 461h2v2h-2zM565 461h2v2h-2zM555 470h2v2h-2z"/><path fill="#e8d6cb" d="M584 451h2v2h-2zM594 451h2v2h-2zM574 461h2v2h-2zM584 461h2v2h-2zM594 461h2v2h-2zM584 470h2v2h-2z"/><path fill="#e9d5ca" d="M613 451h2v2h-2zM622 451h2v2h-2zM603 461h2v2h-2zM613 461h2v2h-2zM622 461h2v2h-2zM613 470h2v2h-2z"/><path fill="#e9d5c9" d="M642 451h2v2h-2zM651 451h2v2h-2zM632 461h2v2h-2zM642 461h2v2h-2zM651 461h2v2h-2zM642 470h2v2h-2z"/><path fill="#ead4c9" d="M670 451h2v2h-2zM680 451h2v2h-2zM661 461h2v2h-2zM670 461h2v2h-2zM680 461h2v2h-2zM670 470h2v2h-2z"/><path fill="#ead4c8" d="M699 451h2v2h-2zM709 451h2v2h-2zM689 461h2v2h-2zM699 461h2v2h-2zM709 461h2v2h-2zM699 470h2v2h-2z"/><path fill="#ebd4c7" d="M728 451h2v2h-2zM737 451h2v2h-2zM718 461h2v2h-2zM728 461h2v2h-2zM737 461h2v2h-2zM728 470h2v2h-2z"/><path fill="#ebd3c6" d="M757 451h2v2h-2zM766 451h2v2h-2zM747 461h2v2h-2zM757 461h2v2h-2zM766 461h2v2h-2zM757 470h2v2h-2z"/><path fill="#ecd3c5" d="M785 451h2v2h-2zM795 451h2v2h-2zM776 461h2v2h-2zM785 461h2v2h-2zM795 461h2v2h-2zM785 470h2v2h-2z"/><path fill="#ecd3c4" d="M814 451h2v2h-2zM824 451h2v2h-2zM804 461h2v2h-2zM814 461h2v2h-2zM824 461h2v2h-2zM814 470h2v2h-2z"/><path fill="#edd2c3" d="M843 451h2v2h-2zM852 451h2v2h-2zM833 461h2v2h-2zM843 461h2v2h-2zM852 461h2v2h-2zM843 470h2v2h-2z"/><path fill="#edd2c2" d="M872 451h2v2h-2zM881 451h2v2h-2zM862 461h2v2h-2zM872 461h2v2h-2zM881 461h2v2h-2zM872 470h2v2h-2z"/><path fill="#edd1c2" d="M900 451h2v2h-2zM910 451h2v2h-2zM891 461h2v2h-2zM900 461h2v2h-2zM910 461h2v2h-2zM900 470h2v2h-2z"/><path fill="#eed0c1" d="M929 451h2v2h-2zM939 451h2v2h-2zM920 461h2v2h-2zM929 461h2v2h-2zM939 461h2v2h-2zM929 470h2v2h-2z"/><path fill="#eed0c0" d="M958 451h2v2h-2zM948 461h2v2h-2zM958 461h2v2h-2zM958 470h2v2h-2z"/><path fill="#dddddd" d="M488 470h2v2h-2zM488 480h2v2h-2zM498 480h2v2h-2z"/><path fill="#dedcdc" d="M507 470h2v2h-2zM517 470h2v2h-2zM507 480h2v2h-2zM517 480h2v2h-2zM526 480h2v2h-2z"/><path fill="#dedcdb" d="M536 470h2v2h-2zM546 470h2v2h-2zM536 480h2v2h-2zM546 480h2v2h-2zM555 480h2v2h-2z"/><path fill="#dfdcda" d="M565 470h2v2h-2zM574 470h2v2h-2zM565 480h2v2h-2zM574 480h2v2h-2zM584 480h2v2h-2z"/><path fill="#e0dbd9" d="M594 470h2v2h-2zM603 470h2v2h-2zM594 480h2v2h-2zM603 480h2v2h-2zM613 480h2v2h-2z"/><path fill="#e0dbd8" d="M622 470h2v2h-2zM632 470h2v2h-2zM622 480h2v2h-2zM632 480h2v2h-2zM642 480h2v2h-2z"/><path fill="#e1dbd7" d="M651 470h2v2h-2zM661 470h2v2h-2zM651 480h2v2h-2zM661 480h2v2h-2zM670 480h2v2h-2z"/><path fill="#e1dad6" d="M680 470h2v2h-2zM689 470h2v2h-2zM680 480h2v2h-2zM689 480h2v2h-2zM699 480h2v2h-2z"/><path fill="#e2dad6" d="M709 470h2v2h-2zM718 470h2v2h-2zM709 480h2v2h-2zM718 480h2v2h-2zM728 480h2v2h-2z"/><path fill="#e3dad5" d="M737 470h2v2h-2zM747 470h2v2h-2zM737 480h2v2h-2zM747 480h2v2h-2zM757 480h2v2h-2z"/><path fill="#e3d9d4" d="M766 470h2v2h-2zM776 470h2v2h-2zM766 480h2v2h-2zM776 480h2v2h-2zM785 480h2v2h-2z"/><path fill="#e4d9d3" d="M795 470h2v2h-2zM804 470h2v2h-2zM795 480h2v2h-2zM804 480h2v2h-2zM814 480h2v2h-2z"/><path fill="#e4d8d2" d="M824 470h2v2h-2zM833 470h2v2h-2zM824 480h2v2h-2zM833 480h2v2h-2zM843 480h2v2h-2z"/><path fill="#e5d8d1" d="M852 470h2v2h-2zM862 470h2v2h-2zM852 480h2v2h-2zM862 480h2v2h-2zM872 480h2v2h-2z"/><path fill="#e5d8d0" d="M881 470h2v2h-2zM891 470h2v2h-2zM881 480h2v2h-2zM891 480h2v2h-2zM900 480h2v2h-2z"/><path fill="#e6d7d0" d="M910 470h2v2h-2zM920 470h2v2h-2zM910 480h2v2h-2zM920 480h2v2h-2zM929 480h2v2h-2z"/><path fill="#e6d7cf" d="M939 470h2v2h-2zM948 470h2v2h-2zM939 480h2v2h-2zM948 480h2v2h-2zM958 480h2v2h-2z"/><path fill="#d3dbe8" d="M488 489h2v2h-2zM498 489h2v2h-2zM488 499h2v2h-2z"/><path fill="#d4dbe7" d="M507 489h2v2h-2zM517 489h2v2h-2zM526 489h2v2h-2zM517 499h2v2h-2z"/><path fill="#d5dbe6" d="M536 489h2v2h-2zM546 489h2v2h-2zM555 489h2v2h-2zM546 499h2v2h-2z"/><path fill="#d5dbe6" d="M565 489h2v2h-2zM574 489h2v2h-2zM584 489h2v2h-2zM574 499h2v2h-2z"/><path fill="#d6dbe5" d="M594 489h2v2h-2zM603 489h2v2h-2zM613 489h2v2h-2zM603 499h2v2h-2z"/><path fill="#d6dbe5" d="M622 489h2v2h-2zM632 489h2v2h-2zM642 489h2v2h-2zM632 499h2v2h-2z"/><path fill="#d7dbe4" d="M651 489h2v2h-2zM661 489h2v2h-2zM670 489h2v2h-2zM661 499h2v2h-2z"/><path fill="#d7dce3" d="M680 489h2v2h-2zM689 489h2v2h-2zM699 489h2v2h-2zM689 499h2v2h-2z"/><path fill="#d8dce3" d="M709 489h2v2h-2zM718 489h2v2h-2zM728 489h2v2h-2zM718 499h2v2h-2z"/><path fill="#d9dce2" d="M737 489h2v2h-2zM747 489h2v2h-2zM757 489h2v2h-2zM747 499h2v2h-2z"/><path fill="#d9dce1" d="M766 489h2v2h-2zM776 489h2v2h-2zM785 489h2v2h-2zM776 499h2v2h-2z"/><path fill="#dadce1" d="M795 489h2v2h-2zM804 489h2v2h-2zM814 489h2v2h-2zM804 499h2v2h-2z"/><path fill="#dadce0" d="M824 489h2v2h-2zM833 489h2v2h-2zM843 489h2v2h-2zM833 499h2v2h-2z"/><path fill="#dbdcdf" d="M852 489h2v2h-2zM862 489h2v2h-2zM872 489h2v2h-2zM862 499h2v2h-2z"/><path fill="#dcdddf" d="M881 489h2v2h-2zM891 489h2v2h-2zM900 489h2v2h-2zM891 499h2v2h-2z"/><path fill="#dcddde" d="M910 489h2v2h-2zM920 489h2v2h-2zM929 489h2v2h-2zM920 499h2v2h-2z"/><path fill="#dddddd" d="M939 489h2v2h-2zM948 489h2v2h-2zM958 489h2v2h-2zM948 499h2v2h-2z"/><path fill="#c8d7f1" d="M498 499h2v2h-2zM507 499h2v2h-2zM488 508h2v2h-2zM498 508h2v2h-2zM507 508h2v2h-2zM498 518h2v2h-2z"/><path fill="#c8d8f0" d="M526 499h2v2h-2zM536 499h2v2h-2zM517 508h2v2h-2zM526 508h2v2h-2zM536 508h2v2h-2zM526 518h2v2h-2z"/><path fill="#c9d8f0" d="M555 499h2v2h-2zM565 499h2v2h-2zM546 508h2v2h-2zM555 508h2v2h-2zM565 508h2v2h-2zM555 518h2v2h-2z"/><path fill="#cad8ef" d="M584 499h2v2h-2zM594 499h2v2h-2zM574 508h2v2h-2zM584 508h2v2h-2zM594 508h2v2h-2zM584 518h2v2h-2z"/><path fill="#cbd8ef" d="M613 499h2v2h-2zM622 499h2v2h-2zM603 508h2v2h-2zM613 508h2v2h-2zM622 508h2v2h-2zM613 518h2v2h-2z"/><path fill="#cbd9ee" d="M642 499h2v2h-2zM651 499h2v2h-2zM632 508h2v2h-2zM642 508h2v2h-2zM651 508h2v2h-2zM642 518h2v2h-2z"/><path fill="#ccd9ee" d="M670 499h2v2h-2zM680 499h2v2h-2zM661 508h2v2h-2zM670 508h2v2h-2zM680 508h2v2h-2zM670 518h2v2h-2z"/><path fill="#cdd9ed" d="M699 499h2v2h-2zM709 499h2v2h-2zM689 508h2v2h-2zM699 508h2v2h-2zM709 508h2v2h-2zM699 518h2v2h-2z"/><path fill="#cdd9ed" d="M728 499h2v2h-2zM737 499h2v2h-2zM718 508h2v2h-2zM728 508h2v2h-2zM737 508h2v2h-2zM728 518h2v2h-2z"/><path fill="#ced9ec" d="M757 499h2v2h-2zM766 499h2v2h-2zM747 508h2v2h-2zM757 508h2v2h-2zM766 508h2v2h-2zM757 518h2v2h-2z"/><path fill="#cfdaec" d="M785 499h2v2h-2zM795 499h2v2h-2zM776 508h2v2h-2zM785 508h2v2h-2zM795 508h2v2h-2zM785 518h2v2h-2z"/><path fill="#cfdaeb" d="M814 499h2v2h-2zM824 499h2v2h-2zM804 508h2v2h-2zM814 508h2v2h-2zM824 508h2v2h-2zM814 518h2v2h-2z"/><path fill="#d0daea" d="M843 499h2v2h-2zM852 499h2v2h-2zM833 508h2v2h-2zM843 508h2v2h-2zM852 508h2v2h-2zM843 518h2v2h-2z"/><path fill="#d1daea" d="M872 499h2v2h-2zM881 499h2v2h-2zM862 508h2v2h-2zM872 508h2v2h-2zM881 508h2v2h-2zM872 518h2v2h-2z"/><path fill="#d1dae9" d="M900 499h2v2h-2zM910 499h2v2h-2zM891 508h2v2h-2zM900 508h2v2h-2zM910 508h2v2h-2zM900 518h2v2h-2z"/><path fill="#d2dae9" d="M929 499h2v2h-2zM939 499h2v2h-2zM920 508h2v2h-2zM929 508h2v2h-2zM939 508h2v2h-2zM929 518h2v2h-2z"/><path fill="#d3dae8" d="M958 499h2v2h-2zM948 508h2v2h-2zM958 508h2v2h-2zM958 518h2v2h-2z"/><path fill="#bbd2f7" d="M488 518h2v2h-2zM488 528h2v2h-2zM498 528h2v2h-2zM488 537h2v2h-2z"/><path fill="#bcd2f7" d="M507 518h2v2h-2zM517 518h2v2h-2zM507 528h2v2h-2zM517 528h2v2h-2zM526 528h2v2h-2zM517 537h2v2h-2z"/><path fill="#bdd2f7" d="M536 518h2v2h-2zM546 518h2v2h-2zM536 528h2v2h-2zM546 528h2v2h-2zM555 528h2v2h-2zM546 537h2v2h-2z"/><path fill="#bed3f6" d="M565 518h2v2h-2zM574 518h2v2h-2zM565 528h2v2h-2zM574 528h2v2h-2zM584 528h2v2h-2zM574 537h2v2h-2z"/><path fill="#bed3f6" d="M594 518h2v2h-2zM603 518h2v2h-2zM594 528h2v2h-2zM603 528h2v2h-2zM613 528h2v2h-2zM603 537h2v2h-2z"/><path fill="#bfd3f6" d="M622 518h2v2h-2zM632 518h2v2h-2zM622 528h2v2h-2zM632 528h2v2h-2zM642 528h2v2h-2zM632 537h2v2h-2z"/><path fill="#c0d4f5" d="M651 518h2v2h-2zM661 518h2v2h-2zM651 528h2v2h-2zM661 528h2v2h-2zM670 528h2v2h-2zM661 537h2v2h-2z"/><path fill="#c0d4f5" d="M680 518h2v2h-2zM689 518h2v2h-2zM680 528h2v2h-2zM689 528h2v2h-2zM699 528h2v2h-2zM689 537h2v2h-2z"/><path fill="#c1d5f4" d="M709 518h2v2h-2zM718 518h2v2h-2zM709 528h2v2h-2zM718 528h2v2h-2zM728 528h2v2h-2zM718 537h2v2h-2z"/><path fill="#c2d5f4" d="M737 518h2v2h-2zM747 518h2v2h-2zM737 528h2v2h-2zM747 528h2v2h-2zM757 528h2v2h-2zM747 537h2v2h-2z"/><path fill="#c3d5f4" d="M766 518h2v2h-2zM776 518h2v2h-2zM766 528h2v2h-2zM776 528h2v2h-2zM785 528h2v2h-2zM776 537h2v2h-2z"/><path fill="#c3d6f3" d="M795 518h2v2h-2zM804 518h2v2h-2zM795 528h2v2h-2zM804 528h2v2h-2zM814 528h2v2h-2zM804 537h2v2h-2z"/><path fill="#c4d6f3" d="M824 518h2v2h-2zM833 518h2v2h-2zM824 528h2v2h-2zM833 528h2v2h-2zM843 528h2v2h-2zM833 537h2v2h-2z"/><path fill="#c5d6f2" d="M852 518h2v2h-2zM862 518h2v2h-2zM852 528h2v2h-2zM862 528h2v2h-2zM872 528h2v2h-2zM862 537h2v2h-2z"/><path fill="#c6d6f2" d="M881 518h2v2h-2zM891 518h2v2h-2zM881 528h2v2h-2zM891 528h2v2h-2zM900 528h2v2h-2zM891 537h2v2h-2z"/><path fill="#c6d7f1" d="M910 518h2v2h-2zM920 518h2v2h-2zM910 528h2v2h-2zM920 528h2v2h-2zM929 528h2v2h-2zM920 537h2v2h-2z"/><path fill="#c7d7f1" d="M939 518h2v2h-2zM948 518h2v2h-2zM939 528h2v2h-2zM948 528h2v2h-2zM958 528h2v2h-2zM948 537h2v2h-2z"/><path fill="#afcafd" d="M498 537h2v2h-2zM507 537h2v2h-2zM488 547h2v2h-2zM498 547h2v2h-2zM507 547h2v2h-2zM498 556h2v2h-2z"/><path fill="#b0cafc" d="M526 537h2v2h-2zM536 537h2v2h-2zM517 547h2v2h-2zM526 547h2v2h-2zM536 547h2v2h-2zM526 556h2v2h-2z"/><path fill="#b0cbfc" d="M555 537h2v2h-2zM565 537h2v2h-2zM546 547h2v2h-2zM555 547h2v2h-2zM565 547h2v2h-2zM555 556h2v2h-2z"/><path fill="#b1cbfc" d="M584 537h2v2h-2zM594 537h2v2h-2zM574 547h2v2h-2zM584 547h2v2h-2zM594 547h2v2h-2zM584 556h2v2h-2z"/><path fill="#b2ccfb" d="M613 537h2v2h-2zM622 537h2v2h-2zM603 547h2v2h-2zM613 547h2v2h-2zM622 547h2v2h-2zM613 556h2v2h-2z"/><path fill="#b3ccfb" d="M642 537h2v2h-2zM651 537h2v2h-2zM632 547h2v2h-2zM642 547h2v2h-2zM651 547h2v2h-2zM642 556h2v2h-2z"/><path fill="#b3cdfb" d="M670 537h2v2h-2zM680 537h2v2h-2zM661 547h2v2h-2zM670 547h2v2h-2zM680 547h2v2h-2zM670 556h2v2h-2z"/><path fill="#b4cdfb" d="M699 537h2v2h-2zM709 537h2v2h-2zM689 547h2v2h-2zM699 547h2v2h-2zM709 547h2v2h-2zM699 556h2v2h-2z"/><path fill="#b5cefa" d="M728 537h2v2h-2zM737 537h2v2h-2zM718 547h2v2h-2zM728 547h2v2h-2zM737 547h2v2h-2zM728 556h2v2h-2z"/><path fill="#b6cefa" d="M757 537h2v2h-2zM766 537h2v2h-2zM747 547h2v2h-2zM757 547h2v2h-2zM766 547h2v2h-2zM757 556h2v2h-2z"/><path fill="#b6cffa" d="M785 537h2v2h-2zM795 537h2v2h-2zM776 547h2v2h-2zM785 547h2v2h-2zM795 547h2v2h-2zM785 556h2v2h-2z"/><path fill="#b7cff9" d="M814 537h2v2h-2zM824 537h2v2h-2zM804 547h2v2h-2zM814 547h2v2h-2zM824 547h2v2h-2zM814 556h2v2h-2z"/><path fill="#b8d0f9" d="M843 537h2v2h-2zM852 537h2v2h-2zM833 547h2v2h-2zM843 547h2v2h-2zM852 547h2v2h-2zM843 556h2v2h-2z"/><path fill="#b8d0f9" d="M872 537h2v2h-2zM881 537h2v2h-2zM862 547h2v2h-2zM872 547h2v2h-2zM881 547h2v2h-2zM872 556h2v2h-2z"/><path fill="#b9d1f8" d="M900 537h2v2h-2zM910 537h2v2h-2zM891 547h2v2h-2zM900 547h2v2h-2zM910 547h2v2h-2zM900 556h2v2h-2z"/><path fill="#bad1f8" d="M929 537h2v2h-2zM939 537h2v2h-2zM920 547h2v2h-2zM929 547h2v2h-2zM939 547h2v2h-2zM929 556h2v2h-2z"/><path fill="#bbd1f8" d="M958 537h2v2h-2zM948 547h2v2h-2zM958 547h2v2h-2zM958 556h2v2h-2z"/><path fill="#a2c1ff" d="M488 556h2v2h-2zM488 566h2v2h-2zM498 566h2v2h-2zM488 576h2v2h-2z"/><path fill="#a2c1ff" d="M507 556h2v2h-2zM517 556h2v2h-2zM507 566h2v2h-2zM517 566h2v2h-2zM526 566h2v2h-2zM517 576h2v2h-2z"/><path fill="#a3c2ff" d="M536 556h2v2h-2zM546 556h2v2h-2zM536 566h2v2h-2zM546 566h2v2h-2zM555 566h2v2h-2zM546 576h2v2h-2z"/><path fill="#a4c3ff" d="M565 556h2v2h-2zM574 556h2v2h-2zM565 566h2v2h-2zM574 566h2v2h-2zM584 566h2v2h-2zM574 576h2v2h-2z"/><path fill="#a5c3ff" d="M594 556h2v2h-2zM603 556h2v2h-2zM594 566h2v2h-2zM603 566h2v2h-2zM613 566h2v2h-2zM603 576h2v2h-2z"/><path fill="#a6c4ff" d="M622 556h2v2h-2zM632 556h2v2h-2zM622 566h2v2h-2zM632 566h2v2h-2zM642 566h2v2h-2zM632 576h2v2h-2z"/><path fill="#a6c4fe" d="M651 556h2v2h-2zM661 556h2v2h-2zM651 566h2v2h-2zM661 566h2v2h-2zM670 566h2v2h-2zM661 576h2v2h-2z"/><path fill="#a7c5fe" d="M680 556h2v2h-2zM689 556h2v2h-2zM680 566h2v2h-2zM689 566h2v2h-2zM699 566h2v2h-2zM689 576h2v2h-2z"/><path fill="#a8c5fe" d="M709 556h2v2h-2zM718 556h2v2h-2zM709 566h2v2h-2zM718 566h2v2h-2zM728 566h2v2h-2zM718 576h2v2h-2z"/><path fill="#a9c6fe" d="M737 556h2v2h-2zM747 556h2v2h-2zM737 566h2v2h-2zM747 566h2v2h-2zM757 566h2v2h-2zM747 576h2v2h-2z"/><path fill="#aac6fe" d="M766 556h2v2h-2zM776 556h2v2h-2zM766 566h2v2h-2zM776 566h2v2h-2zM785 566h2v2h-2zM776 576h2v2h-2z"/><path fill="#aac7fe" d="M795 556h2v2h-2zM804 556h2v2h-2zM795 566h2v2h-2zM804 566h2v2h-2zM814 566h2v2h-2zM804 576h2v2h-2z"/><path fill="#abc7fe" d="M824 556h2v2h-2zM833 556h2v2h-2zM824 566h2v2h-2zM833 566h2v2h-2zM843 566h2v2h-2zM833 576h2v2h-2z"/><path fill="#acc8fd" d="M852 556h2v2h-2zM862 556h2v2h-2zM852 566h2v2h-2zM862 566h2v2h-2zM872 566h2v2h-2zM862 576h2v2h-2z"/><path fill="#adc8fd" d="M881 556h2v2h-2zM891 556h2v2h-2zM881 566h2v2h-2zM891 566h2v2h-2zM900 566h2v2h-2zM891 576h2v2h-2z"/><path fill="#aec9fd" d="M910 556h2v2h-2zM920 556h2v2h-2zM910 566h2v2h-2zM920 566h2v2h-2zM929 566h2v2h-2zM920 576h2v2h-2z"/><path fill="#aec9fd" d="M939 556h2v2h-2zM948 556h2v2h-2zM939 566h2v2h-2zM948 566h2v2h-2zM958 566h2v2h-2zM948 576h2v2h-2z"/><path fill="#94b6ff" d="M498 576h2v2h-2zM507 576h2v2h-2zM488 585h2v2h-2zM498 585h2v2h-2zM507 585h2v2h-2zM498 595h2v2h-2z"/><path fill="#95b6ff" d="M526 576h2v2h-2zM536 576h2v2h-2zM517 585h2v2h-2zM526 585h2v2h-2zM536 585h2v2h-2zM526 595h2v2h-2z"/><path fill="#96b7ff" d="M555 576h2v2h-2zM565 576h2v2h-2zM546 585h2v2h-2zM555 585h2v2h-2zM565 585h2v2h-2zM555 595h2v2h-2z"/><path fill="#96b8ff" d="M584 576h2v2h-2zM594 576h2v2h-2zM574 585h2v2h-2zM584 585h2v2h-2zM594 585h2v2h-2zM584 595h2v2h-2z"/><path fill="#97b8ff" d="M613 576h2v2h-2zM622 576h2v2h-2zM603 585h2v2h-2zM613 585h2v2h-2zM622 585h2v2h-2zM613 595h2v2h-2z"/><path fill="#98b9ff" d="M642 576h2v2h-2zM651 576h2v2h-2zM632 585h2v2h-2zM642 585h2v2h-2zM651 585h2v2h-2zM642 595h2v2h-2z"/><path fill="#99baff" d="M670 576h2v2h-2zM680 576h2v2h-2zM661 585h2v2h-2zM670 585h2v2h-2zM680 585h2v2h-2zM670 595h2v2h-2z"/><path fill="#9abaff" d="M699 576h2v2h-2zM709 576h2v2h-2zM689 585h2v2h-2zM699 585h2v2h-2zM709 585h2v2h-2zM699 595h2v2h-2z"/><path fill="#9abbff" d="M728 576h2v2h-2zM737 576h2v2h-2zM718 585h2v2h-2zM728 585h2v2h-2zM737 585h2v2h-2zM728 595h2v2h-2z"/><path fill="#9bbcff" d="M757 576h2v2h-2zM766 576h2v2h-2zM747 585h2v2h-2zM757 585h2v2h-2zM766 585h2v2h-2zM757 595h2v2h-2z"/><path fill="#9cbcff" d="M785 576h2v2h-2zM795 576h2v2h-2zM776 585h2v2h-2zM785 585h2v2h-2zM795 585h2v2h-2zM785 595h2v2h-2z"/><path fill="#9dbdff" d="M814 576h2v2h-2zM824 576h2v2h-2zM804 585h2v2h-2zM814 585h2v2h-2zM824 585h2v2h-2zM814 595h2v2h-2z"/><path fill="#9ebeff" d="M843 576h2v2h-2zM852 576h2v2h-2zM833 585h2v2h-2zM843 585h2v2h-2zM852 585h2v2h-2zM843 595h2v2h-2z"/><path fill="#9ebeff" d="M872 576h2v2h-2zM881 576h2v2h-2zM862 585h2v2h-2zM872 585h2v2h-2zM881 585h2v2h-2zM872 595h2v2h-2z"/><path fill="#9fbfff" d="M900 576h2v2h-2zM910 576h2v2h-2zM891 585h2v2h-2zM900 585h2v2h-2zM910 585h2v2h-2zM900 595h2v2h-2z"/><path fill="#a0c0ff" d="M929 576h2v2h-2zM939 576h2v2h-2zM920 585h2v2h-2zM929 585h2v2h-2zM939 585h2v2h-2zM929 595h2v2h-2z"/><path fill="#a1c0ff" d="M958 576h2v2h-2zM948 585h2v2h-2zM958 585h2v2h-2zM958 595h2v2h-2z"/><path fill="#86a9fc" d="M488 595h2v2h-2zM488 604h2v2h-2zM498 604h2v2h-2zM488 614h2v2h-2z"/><path fill="#87aafc" d="M507 595h2v2h-2zM517 595h2v2h-2zM507 604h2v2h-2zM517 604h2v2h-2zM526 604h2v2h-2zM517 614h2v2h-2z"/><path fill="#88abfd" d="M536 595h2v2h-2zM546 595h2v2h-2zM536 604h2v2h-2zM546 604h2v2h-2zM555 604h2v2h-2zM546 614h2v2h-2z"/><path fill="#89acfd" d="M565 595h2v2h-2zM574 595h2v2h-2zM565 604h2v2h-2zM574 604h2v2h-2zM584 604h2v2h-2zM574 614h2v2h-2z"/><path fill="#8aadfd" d="M594 595h2v2h-2zM603 595h2v2h-2zM594 604h2v2h-2zM603 604h2v2h-2zM613 604h2v2h-2zM603 614h2v2h-2z"/><path fill="#8aadfd" d="M622 595h2v2h-2zM632 595h2v2h-2zM622 604h2v2h-2zM632 604h2v2h-2zM642 604h2v2h-2zM632 614h2v2h-2z"/><path fill="#8baefe" d="M651 595h2v2h-2zM661 595h2v2h-2zM651 604h2v2h-2zM661 604h2v2h-2zM670 604h2v2h-2zM661 614h2v2h-2z"/><path fill="#8caffe" d="M680 595h2v2h-2zM689 595h2v2h-2zM680 604h2v2h-2zM689 604h2v2h-2zM699 604h2v2h-2zM689 614h2v2h-2z"/><path fill="#8db0fe" d="M709 595h2v2h-2zM718 595h2v2h-2zM709 604h2v2h-2zM718 604h2v2h-2zM728 604h2v2h-2zM718 614h2v2h-2z"/><path fill="#8eb0fe" d="M737 595h2v2h-2zM747 595h2v2h-2zM737 604h2v2h-2zM747 604h2v2h-2zM757 604h2v2h-2zM747 614h2v2h-2z"/><path fill="#8eb1fe" d="M766 595h2v2h-2zM776 595h2v2h-2zM766 604h2v2h-2zM776 604h2v2h-2zM785 604h2v2h-2zM776 614h2v2h-2z"/><path fill="#8fb2fe" d="M795 595h2v2h-2zM804 595h2v2h-2zM795 604h2v2h-2zM804 604h2v2h-2zM814 604h2v2h-2zM804 614h2v2h-2z"/><path fill="#90b2fe" d="M824 595h2v2h-2zM833 595h2v2h-2zM824 604h2v2h-2zM833 604h2v2h-2zM843 604h2v2h-2zM833 614h2v2h-2z"/><path fill="#91b3fe" d="M852 595h2v2h-2zM862 595h2v2h-2zM852 604h2v2h-2zM862 604h2v2h-2zM872 604h2v2h-2zM862 614h2v2h-2z"/><path fill="#92b4fe" d="M881 595h2v2h-2zM891 595h2v2h-2zM881 604h2v2h-2zM891 604h2v2h-2zM900 604h2v2h-2zM891 614h2v2h-2z"/><path fill="#92b4fe" d="M910 595h2v2h-2zM920 595h2v2h-2zM910 604h2v2h-2zM920 604h2v2h-2zM929 604h2v2h-2zM920 614h2v2h-2z"/><path fill="#93b5ff" d="M939 595h2v2h-2zM948 595h2v2h-2zM939 604h2v2h-2zM948 604h2v2h-2zM958 604h2v2h-2zM948 614h2v2h-2z"/><path fill="#799cf8" d="M498 614h2v2h-2zM507 614h2v2h-2zM488 624h2v2h-2zM498 624h2v2h-2zM507 624h2v2h-2zM498 633h2v2h-2z"/><path fill="#7a9df8" d="M526 614h2v2h-2zM536 614h2v2h-2zM517 624h2v2h-2zM526 624h2v2h-2zM536 624h2v2h-2zM526 633h2v2h-2z"/><path fill="#7a9df8" d="M555 614h2v2h-2zM565 614h2v2h-2zM546 624h2v2h-2zM555 624h2v2h-2zM565 624h2v2h-2zM555 633h2v2h-2z"/><path fill="#7b9ef9" d="M584 614h2v2h-2zM594 614h2v2h-2zM574 624h2v2h-2zM584 624h2v2h-2zM594 624h2v2h-2zM584 633h2v2h-2z"/><path fill="#7c9ff9" d="M613 614h2v2h-2zM622 614h2v2h-2zM603 624h2v2h-2zM613 624h2v2h-2zM622 624h2v2h-2zM613 633h2v2h-2z"/><path fill="#7da0f9" d="M642 614h2v2h-2zM651 614h2v2h-2zM632 624h2v2h-2zM642 624h2v2h-2zM651 624h2v2h-2zM642 633h2v2h-2z"/><path fill="#7ea1f9" d="M670 614h2v2h-2zM680 614h2v2h-2zM661 624h2v2h-2zM670 624h2v2h-2zM680 624h2v2h-2zM670 633h2v2h-2z"/><path fill="#7ea1fa" d="M699 614h2v2h-2zM709 614h2v2h-2zM689 624h2v2h-2zM699 624h2v2h-2zM709 624h2v2h-2zM699 633h2v2h-2z"/><path fill="#7fa2fa" d="M728 614h2v2h-2zM737 614h2v2h-2zM718 624h2v2h-2zM728 624h2v2h-2zM737 624h2v2h-2zM728 633h2v2h-2z"/><path fill="#80a3fa" d="M757 614h2v2h-2zM766 614h2v2h-2zM747 624h2v2h-2zM757 624h2v2h-2zM766 624h2v2h-2zM757 633h2v2h-2z"/><path fill="#81a4fb" d="M785 614h2v2h-2zM795 614h2v2h-2zM776 624h2v2h-2zM785 624h2v2h-2zM795 624h2v2h-2zM785 633h2v2h-2z"/><path fill="#82a5fb" d="M814 614h2v2h-2zM824 614h2v2h-2zM804 624h2v2h-2zM814 624h2v2h-2zM824 624h2v2h-2zM814 633h2v2h-2z"/><path fill="#82a5fb" d="M843 614h2v2h-2zM852 614h2v2h-2zM833 624h2v2h-2zM843 624h2v2h-2zM852 624h2v2h-2zM843 633h2v2h-2z"/><path fill="#83a6fb" d="M872 614h2v2h-2zM881 614h2v2h-2zM862 624h2v2h-2zM872 624h2v2h-2zM881 624h2v2h-2zM872 633h2v2h-2z"/><path fill="#84a7fc" d="M900 614h2v2h-2zM910 614h2v2h-2zM891 624h2v2h-2zM900 624h2v2h-2zM910 624h2v2h-2zM900 633h2v2h-2z"/><path fill="#85a8fc" d="M929 614h2v2h-2zM939 614h2v2h-2zM920 624h2v2h-2zM929 624h2v2h-2zM939 624h2v2h-2zM929 633h2v2h-2z"/><path fill="#86a9fc" d="M958 614h2v2h-2zM948 624h2v2h-2zM958 624h2v2h-2zM958 633h2v2h-2z"/><path fill="#6b8df1" d="M488 633h2v2h-2zM488 643h2v2h-2zM498 643h2v2h-2zM488 652h2v2h-2z"/><path fill="#6c8ef1" d="M507 633h2v2h-2zM517 633h2v2h-2zM507 643h2v2h-2zM517 643h2v2h-2zM526 643h2v2h-2zM517 652h2v2h-2z"/><path fill="#6d8ff1" d="M536 633h2v2h-2zM546 633h2v2h-2zM536 643h2v2h-2zM546 643h2v2h-2zM555 643h2v2h-2zM546 652h2v2h-2z"/><path fill="#6e90f2" d="M565 633h2v2h-2zM574 633h2v2h-2zM565 643h2v2h-2zM574 643h2v2h-2zM584 643h2v2h-2zM574 652h2v2h-2z"/><path fill="#6e91f2" d="M594 633h2v2h-2zM603 633h2v2h-2zM594 643h2v2h-2zM603 643h2v2h-2zM613 643h2v2h-2zM603 652h2v2h-2z"/><path fill="#6f92f3" d="M622 633h2v2h-2zM632 633h2v2h-2zM622 643h2v2h-2zM632 643h2v2h-2zM642 643h2v2h-2zM632 652h2v2h-2z"/><path fill="#7092f3" d="M651 633h2v2h-2zM661 633h2v2h-2zM651 643h2v2h-2zM661 643h2v2h-2zM670 643h2v2h-2zM661 652h2v2h-2z"/><path fill="#7193f4" d="M680 633h2v2h-2zM689 633h2v2h-2zM680 643h2v2h-2zM689 643h2v2h-2zM699 643h2v2h-2zM689 652h2v2h-2z"/><path fill="#7294f4" d="M709 633h2v2h-2zM718 633h2v2h-2zM709 643h2v2h-2zM718 643h2v2h-2zM728 643h2v2h-2zM718 652h2v2h-2z"/><path fill="#7295f5" d="M737 633h2v2h-2zM747 633h2v2h-2zM737 643h2v2h-2zM747 643h2v2h-2zM757 643h2v2h-2zM747 652h2v2h-2z"/><path fill="#7396f5" d="M766 633h2v2h-2zM776 633h2v2h-2zM766 643h2v2h-2zM776 643h2v2h-2zM785 643h2v2h-2zM776 652h2v2h-2z"/><path fill="#7497f5" d="M795 633h2v2h-2zM804 633h2v2h-2zM795 643h2v2h-2zM804 643h2v2h-2zM814 643h2v2h-2zM804 652h2v2h-2z"/><path fill="#7598f6" d="M824 633h2v2h-2zM833 633h2v2h-2zM824 643h2v2h-2zM833 643h2v2h-2zM843 643h2v2h-2zM833 652h2v2h-2z"/><path fill="#7699f6" d="M852 633h2v2h-2zM862 633h2v2h-2zM852 643h2v2h-2zM862 643h2v2h-2zM872 643h2v2h-2zM862 652h2v2h-2z"/><path fill="#7699f7" d="M881 633h2v2h-2zM891 633h2v2h-2zM881 643h2v2h-2zM891 643h2v2h-2zM900 643h2v2h-2zM891 652h2v2h-2z"/><path fill="#779af7" d="M910 633h2v2h-2zM920 633h2v2h-2zM910 643h2v2h-2zM920 643h2v2h-2zM929 643h2v2h-2zM920 652h2v2h-2z"/><path fill="#789bf7" d="M939 633h2v2h-2zM948 633h2v2h-2zM939 643h2v2h-2zM948 643h2v2h-2zM958 643h2v2h-2zM948 652h2v2h-2z"/><path fill="#5f7ee7" d="M498 652h2v2h-2zM507 652h2v2h-2zM488 662h2v2h-2zM498 662h2v2h-2zM507 662h2v2h-2zM498 671h2v2h-2z"/><path fill="#607fe8" d="M526 652h2v2h-2zM536 652h2v2h-2zM517 662h2v2h-2zM526 662h2v2h-2zM536 662h2v2h-2zM526 671h2v2h-2z"/><path fill="#6080e9" d="M555 652h2v2h-2zM565 652h2v2h-2zM546 662h2v2h-2zM555 662h2v2h-2zM565 662h2v2h-2zM555 671h2v2h-2z"/><path fill="#6181e9" d="M584 652h2v2h-2zM594 652h2v2h-2zM574 662h2v2h-2zM584 662h2v2h-2zM594 662h2v2h-2zM584 671h2v2h-2z"/><path fill="#6282ea" d="M613 652h2v2h-2zM622 652h2v2h-2zM603 662h2v2h-2zM613 662h2v2h-2zM622 662h2v2h-2zM613 671h2v2h-2z"/><path fill="#6383ea" d="M642 652h2v2h-2zM651 652h2v2h-2zM632 662h2v2h-2zM642 662h2v2h-2zM651 662h2v2h-2zM642 671h2v2h-2z"/><path fill="#6384eb" d="M670 652h2v2h-2zM680 652h2v2h-2zM661 662h2v2h-2zM670 662h2v2h-2zM680 662h2v2h-2zM670 671h2v2h-2z"/><path fill="#6485eb" d="M699 652h2v2h-2zM709 652h2v2h-2zM689 662h2v2h-2zM699 662h2v2h-2zM709 662h2v2h-2zM699 671h2v2h-2z"/><path fill="#6585ec" d="M728 652h2v2h-2zM737 652h2v2h-2zM718 662h2v2h-2zM728 662h2v2h-2zM737 662h2v2h-2zM728 671h2v2h-2z"/><path fill="#6686ec" d="M757 652h2v2h-2zM766 652h2v2h-2zM747 662h2v2h-2zM757 662h2v2h-2zM766 662h2v2h-2zM757 671h2v2h-2z"/><path fill="#6687ed" d="M785 652h2v2h-2zM795 652h2v2h-2zM776 662h2v2h-2zM785 662h2v2h-2zM795 662h2v2h-2zM785 671h2v2h-2z"/><path fill="#6788ed" d="M814 652h2v2h-2zM824 652h2v2h-2zM804 662h2v2h-2zM814 662h2v2h-2zM824 662h2v2h-2zM814 671h2v2h-2z"/><path fill="#6889ee" d="M843 652h2v2h-2zM852 652h2v2h-2zM833 662h2v2h-2zM843 662h2v2h-2zM852 662h2v2h-2zM843 671h2v2h-2z"/><path fill="#688aef" d="M872 652h2v2h-2zM881 652h2v2h-2zM862 662h2v2h-2zM872 662h2v2h-2zM881 662h2v2h-2zM872 671h2v2h-2z"/><path fill="#698bef" d="M900 652h2v2h-2zM910 652h2v2h-2zM891 662h2v2h-2zM900 662h2v2h-2zM910 662h2v2h-2zM900 671h2v2h-2z"/><path fill="#6a8bf0" d="M929 652h2v2h-2zM939 652h2v2h-2zM920 662h2v2h-2zM929 662h2v2h-2zM939 662h2v2h-2zM929 671h2v2h-2z"/><path fill="#6b8cf0" d="M958 652h2v2h-2zM948 662h2v2h-2zM958 662h2v2h-2zM958 671h2v2h-2z"/><path fill="#526edc" d="M488 671h2v2h-2zM488 681h2v2h-2zM498 681h2v2h-2zM488 691h2v2h-2z"/><path fill="#526fdc" d="M507 671h2v2h-2zM517 671h2v2h-2zM507 681h2v2h-2zM517 681h2v2h-2zM526 681h2v2h-2zM517 691h2v2h-2z"/><path fill="#5370dd" d="M536 671h2v2h-2zM546 671h2v2h-2zM536 681h2v2h-2zM546 681h2v2h-2zM555 681h2v2h-2zM546 691h2v2h-2z"/><path fill="#5471de" d="M565 671h2v2h-2zM574 671h2v2h-2zM565 681h2v2h-2zM574 681h2v2h-2zM584 681h2v2h-2zM574 691h2v2h-2z"/><path fill="#5572df" d="M594 671h2v2h-2zM603 671h2v2h-2zM594 681h2v2h-2zM603 681h2v2h-2zM613 681h2v2h-2zM603 691h2v2h-2z"/><path fill="#5573df" d="M622 671h2v2h-2zM632 671h2v2h-2zM622 681h2v2h-2zM632 681h2v2h-2zM642 681h2v2h-2zM632 691h2v2h-2z"/><path fill="#5674e0" d="M651 671h2v2h-2zM661 671h2v2h-2zM651 681h2v2h-2zM661 681h2v2h-2zM670 681h2v2h-2zM661 691h2v2h-2z"/><path fill="#5775e1" d="M680 671h2v2h-2zM689 671h2v2h-2zM680 681h2v2h-2zM689 681h2v2h-2zM699 681h2v2h-2zM689 691h2v2h-2z"/><path fill="#5876e1" d="M709 671h2v2h-2zM718 671h2v2h-2zM709 681h2v2h-2zM718 681h2v2h-2zM728 681h2v2h-2zM718 691h2v2h-2z"/><path fill="#5877e2" d="M737 671h2v2h-2zM747 671h2v2h-2zM737 681h2v2h-2zM747 681h2v2h-2zM757 681h2v2h-2zM747 691h2v2h-2z"/><path fill="#5978e3" d="M766 671h2v2h-2zM776 671h2v2h-2zM766 681h2v2h-2zM776 681h2v2h-2zM785 681h2v2h-2zM776 691h2v2h-2z"/><path fill="#5a78e3" d="M795 671h2v2h-2zM804 671h2v2h-2zM795 681h2v2h-2zM804 681h2v2h-2zM814 681h2v2h-2zM804 691h2v2h-2z"/><path fill="#5b79e4" d="M824 671h2v2h-2zM833 671h2v2h-2zM824 681h2v2h-2zM833 681h2v2h-2zM843 681h2v2h-2zM833 691h2v2h-2z"/><path fill="#5c7ae5" d="M852 671h2v2h-2zM862 671h2v2h-2zM852 681h2v2h-2zM862 681h2v2h-2zM872 681h2v2h-2zM862 691h2v2h-2z"/><path fill="#5c7be5" d="M881 671h2v2h-2zM891 671h2v2h-2zM881 681h2v2h-2zM891 681h2v2h-2zM900 681h2v2h-2zM891 691h2v2h-2z"/><path fill="#5d7ce6" d="M910 671h2v2h-2zM920 671h2v2h-2zM910 681h2v2h-2zM920 681h2v2h-2zM929 681h2v2h-2zM920 691h2v2h-2z"/><path fill="#5e7de7" d="M939 671h2v2h-2zM948 671h2v2h-2zM939 681h2v2h-2zM948 681h2v2h-2zM958 681h2v2h-2zM948 691h2v2h-2z"/><path fill="#465dcf" d="M498 691h2v2h-2zM507 691h2v2h-2zM488 700h2v2h-2zM498 700h2v2h-2zM507 700h2v2h-2zM498 710h2v2h-2z"/><path fill="#475ecf" d="M526 691h2v2h-2zM536 691h2v2h-2zM517 700h2v2h-2zM526 700h2v2h-2zM536 700h2v2h-2zM526 710h2v2h-2z"/><path fill="#475fd0" d="M555 691h2v2h-2zM565 691h2v2h-2zM546 700h2v2h-2zM555 700h2v2h-2zM565 700h2v2h-2zM555 710h2v2h-2z"/><path fill="#4860d1" d="M584 691h2v2h-2zM594 691h2v2h-2zM574 700h2v2h-2zM584 700h2v2h-2zM594 700h2v2h-2zM584 710h2v2h-2z"/><path fill="#4961d2" d="M613 691h2v2h-2zM622 691h2v2h-2zM603 700h2v2h-2zM613 700h2v2h-2zM622 700h2v2h-2zM613 710h2v2h-2z"/><path fill="#4962d3" d="M642 691h2v2h-2zM651 691h2v2h-2zM632 700h2v2h-2zM642 700h2v2h-2zM651 700h2v2h-2zM642 710h2v2h-2z"/><path fill="#4a63d3" d="M670 691h2v2h-2zM680 691h2v2h-2zM661 700h2v2h-2zM670 700h2v2h-2zM680 700h2v2h-2zM670 710h2v2h-2z"/><path fill="#4b64d4" d="M699 691h2v2h-2zM709 691h2v2h-2zM689 700h2v2h-2zM699 700h2v2h-2zM709 700h2v2h-2zM699 710h2v2h-2z"/><path fill="#4b65d5" d="M728 691h2v2h-2zM737 691h2v2h-2zM718 700h2v2h-2zM728 700h2v2h-2zM737 700h2v2h-2zM728 710h2v2h-2z"/><path fill="#4c66d6" d="M757 691h2v2h-2zM766 691h2v2h-2zM747 700h2v2h-2zM757 700h2v2h-2zM766 700h2v2h-2zM757 710h2v2h-2z"/><path fill="#4d67d7" d="M785 691h2v2h-2zM795 691h2v2h-2zM776 700h2v2h-2zM785 700h2v2h-2zM795 700h2v2h-2zM785 710h2v2h-2z"/><path fill="#4d68d7" d="M814 691h2v2h-2zM824 691h2v2h-2zM804 700h2v2h-2zM814 700h2v2h-2zM824 700h2v2h-2zM814 710h2v2h-2z"/><path fill="#4e69d8" d="M843 691h2v2h-2zM852 691h2v2h-2zM833 700h2v2h-2zM843 700h2v2h-2zM852 700h2v2h-2zM843 710h2v2h-2z"/><path fill="#4f6ad9" d="M872 691h2v2h-2zM881 691h2v2h-2zM862 700h2v2h-2zM872 700h2v2h-2zM881 700h2v2h-2zM872 710h2v2h-2z"/><path fill="#4f6bd9" d="M900 691h2v2h-2zM910 691h2v2h-2zM891 700h2v2h-2zM900 700h2v2h-2zM910 700h2v2h-2zM900 710h2v2h-2z"/><path fill="#506cda" d="M929 691h2v2h-2zM939 691h2v2h-2zM920 700h2v2h-2zM929 700h2v2h-2zM939 700h2v2h-2zM929 710h2v2h-2z"/><path fill="#516ddb" d="M958 691h2v2h-2zM948 700h2v2h-2zM958 700h2v2h-2zM958 710h2v2h-2z"/><path fill="#3b4cc0" d="M488 710h2v2h-2zM488 719h2v2h-2zM498 719h2v2h-2z"/><path fill="#3c4dc1" d="M507 710h2v2h-2zM517 710h2v2h-2zM507 719h2v2h-2zM517 719h2v2h-2zM526 719h2v2h-2z"/><path fill="#3c4ec2" d="M536 710h2v2h-2zM546 710h2v2h-2zM536 719h2v2h-2zM546 719h2v2h-2zM555 719h2v2h-2z"/><path fill="#3d4fc3" d="M565 710h2v2h-2zM574 710h2v2h-2zM565 719h2v2h-2zM574 719h2v2h-2zM584 719h2v2h-2z"/><path fill="#3e50c3" d="M594 710h2v2h-2zM603 710h2v2h-2zM594 719h2v2h-2zM603 719h2v2h-2zM613 719h2v2h-2z"/><path fill="#3e51c4" d="M622 710h2v2h-2zM632 710h2v2h-2zM622 719h2v2h-2zM632 719h2v2h-2zM642 719h2v2h-2z"/><path fill="#3f52c5" d="M651 710h2v2h-2zM661 710h2v2h-2zM651 719h2v2h-2zM661 719h2v2h-2zM670 719h2v2h-2z"/><path fill="#4053c6" d="M680 710h2v2h-2zM689 710h2v2h-2zM680 719h2v2h-2zM689 719h2v2h-2zM699 719h2v2h-2z"/><path fill="#4054c7" d="M709 710h2v2h-2zM718 710h2v2h-2zM709 719h2v2h-2zM718 719h2v2h-2zM728 719h2v2h-2z"/><path fill="#4155c8" d="M737 710h2v2h-2zM747 710h2v2h-2zM737 719h2v2h-2zM747 719h2v2h-2zM757 719h2v2h-2z"/><path fill="#4256c9" d="M766 710h2v2h-2zM776 710h2v2h-2zM766 719h2v2h-2zM776 719h2v2h-2zM785 719h2v2h-2z"/><path fill="#4257ca" d="M795 710h2v2h-2zM804 710h2v2h-2zM795 719h2v2h-2zM804 719h2v2h-2zM814 719h2v2h-2z"/><path fill="#4358ca" d="M824 710h2v2h-2zM833 710h2v2h-2zM824 719h2v2h-2zM833 719h2v2h-2zM843 719h2v2h-2z"/><path fill="#4359cb" d="M852 710h2v2h-2zM862 710h2v2h-2zM852 719h2v2h-2zM862 719h2v2h-2zM872 719h2v2h-2z"/><path fill="#445acc" d="M881 710h2v2h-2zM891 710h2v2h-2zM881 719h2v2h-2zM891 719h2v2h-2zM900 719h2v2h-2z"/><path fill="#455bcd" d="M910 710h2v2h-2zM920 710h2v2h-2zM910 719h2v2h-2zM920 719h2v2h-2zM929 719h2v2h-2z"/><path fill="#455cce" d="M939 710h2v2h-2zM948 710h2v2h-2zM939 719h2v2h-2zM948 719h2v2h-2zM958 719h2v2h-2z"/></g>
<rect x="606" y="485" width="235" height="1" fill="#ff0000"/>
<rect x="723" y="368" width="1" height="235" fill="#ffff00"/>
<g shape-rendering="auto"><path d="M369.400 688V660.500" stroke="#ffff00" stroke-width="1.200"/><path d="M369.400 652.800L372.200 661H366.600Z" fill="#ffff80"/><path d="M372.500 691.400H379" stroke="#ffffff" stroke-width="1.200"/><path d="M379 691.400H400.500" stroke="#ff0000" stroke-width="1.300"/><path d="M405.800 691.400L400 688.800V694Z" fill="#ffff80"/><circle cx="369.400" cy="691.400" r="3.600" fill="#ffff66"/><path d="M371.600 653.300L374.700 657.200L377.900 653.300M374.700 657.200V660.800" stroke="#fff" stroke-width="1.100" fill="none"/><path d="M372.200 683.600H377.800L372.600 690" stroke="#fff" stroke-width="1.100" fill="none"/><path d="M402.200 684.200L408 691.400M407.800 684.200L403.500 689.500" stroke="#fff" stroke-width="1.100" fill="none"/></g>
</svg>

</div>
</body></html>
